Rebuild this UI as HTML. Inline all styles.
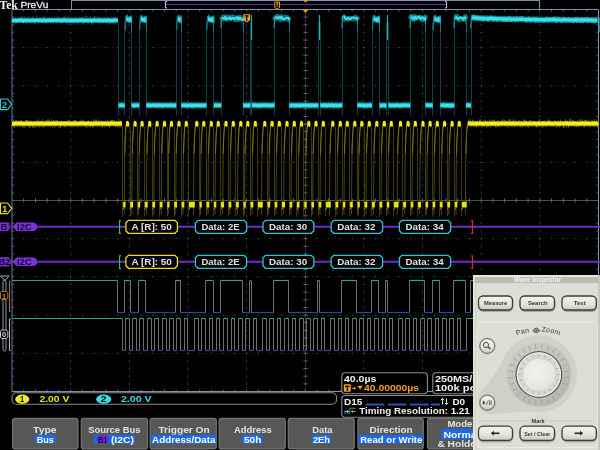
<!DOCTYPE html>
<html><head><meta charset="utf-8"><style>
html,body{margin:0;padding:0;background:#000;width:600px;height:450px;overflow:hidden}
svg{display:block;will-change:transform}
</style></head><body>
<svg width="600" height="450" viewBox="0 0 600 450">
<rect width="600" height="450" fill="#000"/>
<g><line x1="70.5" y1="9.5" x2="70.5" y2="391.5" stroke="#161616" stroke-width="1" stroke-dasharray="1 1.5"/><line x1="129.5" y1="9.5" x2="129.5" y2="391.5" stroke="#161616" stroke-width="1" stroke-dasharray="1 1.5"/><line x1="187.5" y1="9.5" x2="187.5" y2="391.5" stroke="#161616" stroke-width="1" stroke-dasharray="1 1.5"/><line x1="246.5" y1="9.5" x2="246.5" y2="391.5" stroke="#161616" stroke-width="1" stroke-dasharray="1 1.5"/><line x1="363.5" y1="9.5" x2="363.5" y2="391.5" stroke="#161616" stroke-width="1" stroke-dasharray="1 1.5"/><line x1="422.5" y1="9.5" x2="422.5" y2="391.5" stroke="#161616" stroke-width="1" stroke-dasharray="1 1.5"/><line x1="481.5" y1="9.5" x2="481.5" y2="391.5" stroke="#161616" stroke-width="1" stroke-dasharray="1 1.5"/><line x1="539.5" y1="9.5" x2="539.5" y2="391.5" stroke="#161616" stroke-width="1" stroke-dasharray="1 1.5"/><line x1="12" y1="47.5" x2="598.5" y2="47.5" stroke="#161616" stroke-width="1" stroke-dasharray="1 1.5"/><line x1="12" y1="85.5" x2="598.5" y2="85.5" stroke="#161616" stroke-width="1" stroke-dasharray="1 1.5"/><line x1="12" y1="124.5" x2="598.5" y2="124.5" stroke="#161616" stroke-width="1" stroke-dasharray="1 1.5"/><line x1="12" y1="162.5" x2="598.5" y2="162.5" stroke="#161616" stroke-width="1" stroke-dasharray="1 1.5"/><line x1="12" y1="238.5" x2="598.5" y2="238.5" stroke="#161616" stroke-width="1" stroke-dasharray="1 1.5"/><line x1="12" y1="276.5" x2="598.5" y2="276.5" stroke="#161616" stroke-width="1" stroke-dasharray="1 1.5"/><line x1="12" y1="315.5" x2="598.5" y2="315.5" stroke="#161616" stroke-width="1" stroke-dasharray="1 1.5"/><line x1="12" y1="353.5" x2="598.5" y2="353.5" stroke="#161616" stroke-width="1" stroke-dasharray="1 1.5"/><rect x="70.2" y="16.6" width="1" height="1" fill="#5e5e5e"/><rect x="70.2" y="24.3" width="1" height="1" fill="#5e5e5e"/><rect x="70.2" y="31.9" width="1" height="1" fill="#5e5e5e"/><rect x="70.2" y="39.6" width="1" height="1" fill="#5e5e5e"/><rect x="70.2" y="47.2" width="1" height="1" fill="#5e5e5e"/><rect x="70.2" y="54.8" width="1" height="1" fill="#5e5e5e"/><rect x="70.2" y="62.5" width="1" height="1" fill="#5e5e5e"/><rect x="70.2" y="70.1" width="1" height="1" fill="#5e5e5e"/><rect x="70.2" y="77.8" width="1" height="1" fill="#5e5e5e"/><rect x="70.2" y="85.4" width="1" height="1" fill="#5e5e5e"/><rect x="70.2" y="93.0" width="1" height="1" fill="#5e5e5e"/><rect x="70.2" y="100.7" width="1" height="1" fill="#5e5e5e"/><rect x="70.2" y="108.3" width="1" height="1" fill="#5e5e5e"/><rect x="70.2" y="116.0" width="1" height="1" fill="#5e5e5e"/><rect x="70.2" y="123.6" width="1" height="1" fill="#5e5e5e"/><rect x="70.2" y="131.2" width="1" height="1" fill="#5e5e5e"/><rect x="70.2" y="138.9" width="1" height="1" fill="#5e5e5e"/><rect x="70.2" y="146.5" width="1" height="1" fill="#5e5e5e"/><rect x="70.2" y="154.2" width="1" height="1" fill="#5e5e5e"/><rect x="70.2" y="161.8" width="1" height="1" fill="#5e5e5e"/><rect x="70.2" y="169.4" width="1" height="1" fill="#5e5e5e"/><rect x="70.2" y="177.1" width="1" height="1" fill="#5e5e5e"/><rect x="70.2" y="184.7" width="1" height="1" fill="#5e5e5e"/><rect x="70.2" y="192.4" width="1" height="1" fill="#5e5e5e"/><rect x="70.2" y="200.0" width="1" height="1" fill="#5e5e5e"/><rect x="70.2" y="207.6" width="1" height="1" fill="#5e5e5e"/><rect x="70.2" y="215.3" width="1" height="1" fill="#5e5e5e"/><rect x="70.2" y="222.9" width="1" height="1" fill="#5e5e5e"/><rect x="70.2" y="230.6" width="1" height="1" fill="#5e5e5e"/><rect x="70.2" y="238.2" width="1" height="1" fill="#5e5e5e"/><rect x="70.2" y="245.8" width="1" height="1" fill="#5e5e5e"/><rect x="70.2" y="253.5" width="1" height="1" fill="#5e5e5e"/><rect x="70.2" y="261.1" width="1" height="1" fill="#5e5e5e"/><rect x="70.2" y="268.8" width="1" height="1" fill="#5e5e5e"/><rect x="70.2" y="276.4" width="1" height="1" fill="#5e5e5e"/><rect x="70.2" y="284.0" width="1" height="1" fill="#5e5e5e"/><rect x="70.2" y="291.7" width="1" height="1" fill="#5e5e5e"/><rect x="70.2" y="299.3" width="1" height="1" fill="#5e5e5e"/><rect x="70.2" y="307.0" width="1" height="1" fill="#5e5e5e"/><rect x="70.2" y="314.6" width="1" height="1" fill="#5e5e5e"/><rect x="70.2" y="322.2" width="1" height="1" fill="#5e5e5e"/><rect x="70.2" y="329.9" width="1" height="1" fill="#5e5e5e"/><rect x="70.2" y="337.5" width="1" height="1" fill="#5e5e5e"/><rect x="70.2" y="345.2" width="1" height="1" fill="#5e5e5e"/><rect x="70.2" y="352.8" width="1" height="1" fill="#5e5e5e"/><rect x="70.2" y="360.4" width="1" height="1" fill="#5e5e5e"/><rect x="70.2" y="368.1" width="1" height="1" fill="#5e5e5e"/><rect x="70.2" y="375.7" width="1" height="1" fill="#5e5e5e"/><rect x="70.2" y="383.4" width="1" height="1" fill="#5e5e5e"/><rect x="128.8" y="16.6" width="1" height="1" fill="#5e5e5e"/><rect x="128.8" y="24.3" width="1" height="1" fill="#5e5e5e"/><rect x="128.8" y="31.9" width="1" height="1" fill="#5e5e5e"/><rect x="128.8" y="39.6" width="1" height="1" fill="#5e5e5e"/><rect x="128.8" y="47.2" width="1" height="1" fill="#5e5e5e"/><rect x="128.8" y="54.8" width="1" height="1" fill="#5e5e5e"/><rect x="128.8" y="62.5" width="1" height="1" fill="#5e5e5e"/><rect x="128.8" y="70.1" width="1" height="1" fill="#5e5e5e"/><rect x="128.8" y="77.8" width="1" height="1" fill="#5e5e5e"/><rect x="128.8" y="85.4" width="1" height="1" fill="#5e5e5e"/><rect x="128.8" y="93.0" width="1" height="1" fill="#5e5e5e"/><rect x="128.8" y="100.7" width="1" height="1" fill="#5e5e5e"/><rect x="128.8" y="108.3" width="1" height="1" fill="#5e5e5e"/><rect x="128.8" y="116.0" width="1" height="1" fill="#5e5e5e"/><rect x="128.8" y="123.6" width="1" height="1" fill="#5e5e5e"/><rect x="128.8" y="131.2" width="1" height="1" fill="#5e5e5e"/><rect x="128.8" y="138.9" width="1" height="1" fill="#5e5e5e"/><rect x="128.8" y="146.5" width="1" height="1" fill="#5e5e5e"/><rect x="128.8" y="154.2" width="1" height="1" fill="#5e5e5e"/><rect x="128.8" y="161.8" width="1" height="1" fill="#5e5e5e"/><rect x="128.8" y="169.4" width="1" height="1" fill="#5e5e5e"/><rect x="128.8" y="177.1" width="1" height="1" fill="#5e5e5e"/><rect x="128.8" y="184.7" width="1" height="1" fill="#5e5e5e"/><rect x="128.8" y="192.4" width="1" height="1" fill="#5e5e5e"/><rect x="128.8" y="200.0" width="1" height="1" fill="#5e5e5e"/><rect x="128.8" y="207.6" width="1" height="1" fill="#5e5e5e"/><rect x="128.8" y="215.3" width="1" height="1" fill="#5e5e5e"/><rect x="128.8" y="222.9" width="1" height="1" fill="#5e5e5e"/><rect x="128.8" y="230.6" width="1" height="1" fill="#5e5e5e"/><rect x="128.8" y="238.2" width="1" height="1" fill="#5e5e5e"/><rect x="128.8" y="245.8" width="1" height="1" fill="#5e5e5e"/><rect x="128.8" y="253.5" width="1" height="1" fill="#5e5e5e"/><rect x="128.8" y="261.1" width="1" height="1" fill="#5e5e5e"/><rect x="128.8" y="268.8" width="1" height="1" fill="#5e5e5e"/><rect x="128.8" y="276.4" width="1" height="1" fill="#5e5e5e"/><rect x="128.8" y="284.0" width="1" height="1" fill="#5e5e5e"/><rect x="128.8" y="291.7" width="1" height="1" fill="#5e5e5e"/><rect x="128.8" y="299.3" width="1" height="1" fill="#5e5e5e"/><rect x="128.8" y="307.0" width="1" height="1" fill="#5e5e5e"/><rect x="128.8" y="314.6" width="1" height="1" fill="#5e5e5e"/><rect x="128.8" y="322.2" width="1" height="1" fill="#5e5e5e"/><rect x="128.8" y="329.9" width="1" height="1" fill="#5e5e5e"/><rect x="128.8" y="337.5" width="1" height="1" fill="#5e5e5e"/><rect x="128.8" y="345.2" width="1" height="1" fill="#5e5e5e"/><rect x="128.8" y="352.8" width="1" height="1" fill="#5e5e5e"/><rect x="128.8" y="360.4" width="1" height="1" fill="#5e5e5e"/><rect x="128.8" y="368.1" width="1" height="1" fill="#5e5e5e"/><rect x="128.8" y="375.7" width="1" height="1" fill="#5e5e5e"/><rect x="128.8" y="383.4" width="1" height="1" fill="#5e5e5e"/><rect x="187.4" y="16.6" width="1" height="1" fill="#5e5e5e"/><rect x="187.4" y="24.3" width="1" height="1" fill="#5e5e5e"/><rect x="187.4" y="31.9" width="1" height="1" fill="#5e5e5e"/><rect x="187.4" y="39.6" width="1" height="1" fill="#5e5e5e"/><rect x="187.4" y="47.2" width="1" height="1" fill="#5e5e5e"/><rect x="187.4" y="54.8" width="1" height="1" fill="#5e5e5e"/><rect x="187.4" y="62.5" width="1" height="1" fill="#5e5e5e"/><rect x="187.4" y="70.1" width="1" height="1" fill="#5e5e5e"/><rect x="187.4" y="77.8" width="1" height="1" fill="#5e5e5e"/><rect x="187.4" y="85.4" width="1" height="1" fill="#5e5e5e"/><rect x="187.4" y="93.0" width="1" height="1" fill="#5e5e5e"/><rect x="187.4" y="100.7" width="1" height="1" fill="#5e5e5e"/><rect x="187.4" y="108.3" width="1" height="1" fill="#5e5e5e"/><rect x="187.4" y="116.0" width="1" height="1" fill="#5e5e5e"/><rect x="187.4" y="123.6" width="1" height="1" fill="#5e5e5e"/><rect x="187.4" y="131.2" width="1" height="1" fill="#5e5e5e"/><rect x="187.4" y="138.9" width="1" height="1" fill="#5e5e5e"/><rect x="187.4" y="146.5" width="1" height="1" fill="#5e5e5e"/><rect x="187.4" y="154.2" width="1" height="1" fill="#5e5e5e"/><rect x="187.4" y="161.8" width="1" height="1" fill="#5e5e5e"/><rect x="187.4" y="169.4" width="1" height="1" fill="#5e5e5e"/><rect x="187.4" y="177.1" width="1" height="1" fill="#5e5e5e"/><rect x="187.4" y="184.7" width="1" height="1" fill="#5e5e5e"/><rect x="187.4" y="192.4" width="1" height="1" fill="#5e5e5e"/><rect x="187.4" y="200.0" width="1" height="1" fill="#5e5e5e"/><rect x="187.4" y="207.6" width="1" height="1" fill="#5e5e5e"/><rect x="187.4" y="215.3" width="1" height="1" fill="#5e5e5e"/><rect x="187.4" y="222.9" width="1" height="1" fill="#5e5e5e"/><rect x="187.4" y="230.6" width="1" height="1" fill="#5e5e5e"/><rect x="187.4" y="238.2" width="1" height="1" fill="#5e5e5e"/><rect x="187.4" y="245.8" width="1" height="1" fill="#5e5e5e"/><rect x="187.4" y="253.5" width="1" height="1" fill="#5e5e5e"/><rect x="187.4" y="261.1" width="1" height="1" fill="#5e5e5e"/><rect x="187.4" y="268.8" width="1" height="1" fill="#5e5e5e"/><rect x="187.4" y="276.4" width="1" height="1" fill="#5e5e5e"/><rect x="187.4" y="284.0" width="1" height="1" fill="#5e5e5e"/><rect x="187.4" y="291.7" width="1" height="1" fill="#5e5e5e"/><rect x="187.4" y="299.3" width="1" height="1" fill="#5e5e5e"/><rect x="187.4" y="307.0" width="1" height="1" fill="#5e5e5e"/><rect x="187.4" y="314.6" width="1" height="1" fill="#5e5e5e"/><rect x="187.4" y="322.2" width="1" height="1" fill="#5e5e5e"/><rect x="187.4" y="329.9" width="1" height="1" fill="#5e5e5e"/><rect x="187.4" y="337.5" width="1" height="1" fill="#5e5e5e"/><rect x="187.4" y="345.2" width="1" height="1" fill="#5e5e5e"/><rect x="187.4" y="352.8" width="1" height="1" fill="#5e5e5e"/><rect x="187.4" y="360.4" width="1" height="1" fill="#5e5e5e"/><rect x="187.4" y="368.1" width="1" height="1" fill="#5e5e5e"/><rect x="187.4" y="375.7" width="1" height="1" fill="#5e5e5e"/><rect x="187.4" y="383.4" width="1" height="1" fill="#5e5e5e"/><rect x="246.1" y="16.6" width="1" height="1" fill="#5e5e5e"/><rect x="246.1" y="24.3" width="1" height="1" fill="#5e5e5e"/><rect x="246.1" y="31.9" width="1" height="1" fill="#5e5e5e"/><rect x="246.1" y="39.6" width="1" height="1" fill="#5e5e5e"/><rect x="246.1" y="47.2" width="1" height="1" fill="#5e5e5e"/><rect x="246.1" y="54.8" width="1" height="1" fill="#5e5e5e"/><rect x="246.1" y="62.5" width="1" height="1" fill="#5e5e5e"/><rect x="246.1" y="70.1" width="1" height="1" fill="#5e5e5e"/><rect x="246.1" y="77.8" width="1" height="1" fill="#5e5e5e"/><rect x="246.1" y="85.4" width="1" height="1" fill="#5e5e5e"/><rect x="246.1" y="93.0" width="1" height="1" fill="#5e5e5e"/><rect x="246.1" y="100.7" width="1" height="1" fill="#5e5e5e"/><rect x="246.1" y="108.3" width="1" height="1" fill="#5e5e5e"/><rect x="246.1" y="116.0" width="1" height="1" fill="#5e5e5e"/><rect x="246.1" y="123.6" width="1" height="1" fill="#5e5e5e"/><rect x="246.1" y="131.2" width="1" height="1" fill="#5e5e5e"/><rect x="246.1" y="138.9" width="1" height="1" fill="#5e5e5e"/><rect x="246.1" y="146.5" width="1" height="1" fill="#5e5e5e"/><rect x="246.1" y="154.2" width="1" height="1" fill="#5e5e5e"/><rect x="246.1" y="161.8" width="1" height="1" fill="#5e5e5e"/><rect x="246.1" y="169.4" width="1" height="1" fill="#5e5e5e"/><rect x="246.1" y="177.1" width="1" height="1" fill="#5e5e5e"/><rect x="246.1" y="184.7" width="1" height="1" fill="#5e5e5e"/><rect x="246.1" y="192.4" width="1" height="1" fill="#5e5e5e"/><rect x="246.1" y="200.0" width="1" height="1" fill="#5e5e5e"/><rect x="246.1" y="207.6" width="1" height="1" fill="#5e5e5e"/><rect x="246.1" y="215.3" width="1" height="1" fill="#5e5e5e"/><rect x="246.1" y="222.9" width="1" height="1" fill="#5e5e5e"/><rect x="246.1" y="230.6" width="1" height="1" fill="#5e5e5e"/><rect x="246.1" y="238.2" width="1" height="1" fill="#5e5e5e"/><rect x="246.1" y="245.8" width="1" height="1" fill="#5e5e5e"/><rect x="246.1" y="253.5" width="1" height="1" fill="#5e5e5e"/><rect x="246.1" y="261.1" width="1" height="1" fill="#5e5e5e"/><rect x="246.1" y="268.8" width="1" height="1" fill="#5e5e5e"/><rect x="246.1" y="276.4" width="1" height="1" fill="#5e5e5e"/><rect x="246.1" y="284.0" width="1" height="1" fill="#5e5e5e"/><rect x="246.1" y="291.7" width="1" height="1" fill="#5e5e5e"/><rect x="246.1" y="299.3" width="1" height="1" fill="#5e5e5e"/><rect x="246.1" y="307.0" width="1" height="1" fill="#5e5e5e"/><rect x="246.1" y="314.6" width="1" height="1" fill="#5e5e5e"/><rect x="246.1" y="322.2" width="1" height="1" fill="#5e5e5e"/><rect x="246.1" y="329.9" width="1" height="1" fill="#5e5e5e"/><rect x="246.1" y="337.5" width="1" height="1" fill="#5e5e5e"/><rect x="246.1" y="345.2" width="1" height="1" fill="#5e5e5e"/><rect x="246.1" y="352.8" width="1" height="1" fill="#5e5e5e"/><rect x="246.1" y="360.4" width="1" height="1" fill="#5e5e5e"/><rect x="246.1" y="368.1" width="1" height="1" fill="#5e5e5e"/><rect x="246.1" y="375.7" width="1" height="1" fill="#5e5e5e"/><rect x="246.1" y="383.4" width="1" height="1" fill="#5e5e5e"/><rect x="363.4" y="16.6" width="1" height="1" fill="#5e5e5e"/><rect x="363.4" y="24.3" width="1" height="1" fill="#5e5e5e"/><rect x="363.4" y="31.9" width="1" height="1" fill="#5e5e5e"/><rect x="363.4" y="39.6" width="1" height="1" fill="#5e5e5e"/><rect x="363.4" y="47.2" width="1" height="1" fill="#5e5e5e"/><rect x="363.4" y="54.8" width="1" height="1" fill="#5e5e5e"/><rect x="363.4" y="62.5" width="1" height="1" fill="#5e5e5e"/><rect x="363.4" y="70.1" width="1" height="1" fill="#5e5e5e"/><rect x="363.4" y="77.8" width="1" height="1" fill="#5e5e5e"/><rect x="363.4" y="85.4" width="1" height="1" fill="#5e5e5e"/><rect x="363.4" y="93.0" width="1" height="1" fill="#5e5e5e"/><rect x="363.4" y="100.7" width="1" height="1" fill="#5e5e5e"/><rect x="363.4" y="108.3" width="1" height="1" fill="#5e5e5e"/><rect x="363.4" y="116.0" width="1" height="1" fill="#5e5e5e"/><rect x="363.4" y="123.6" width="1" height="1" fill="#5e5e5e"/><rect x="363.4" y="131.2" width="1" height="1" fill="#5e5e5e"/><rect x="363.4" y="138.9" width="1" height="1" fill="#5e5e5e"/><rect x="363.4" y="146.5" width="1" height="1" fill="#5e5e5e"/><rect x="363.4" y="154.2" width="1" height="1" fill="#5e5e5e"/><rect x="363.4" y="161.8" width="1" height="1" fill="#5e5e5e"/><rect x="363.4" y="169.4" width="1" height="1" fill="#5e5e5e"/><rect x="363.4" y="177.1" width="1" height="1" fill="#5e5e5e"/><rect x="363.4" y="184.7" width="1" height="1" fill="#5e5e5e"/><rect x="363.4" y="192.4" width="1" height="1" fill="#5e5e5e"/><rect x="363.4" y="200.0" width="1" height="1" fill="#5e5e5e"/><rect x="363.4" y="207.6" width="1" height="1" fill="#5e5e5e"/><rect x="363.4" y="215.3" width="1" height="1" fill="#5e5e5e"/><rect x="363.4" y="222.9" width="1" height="1" fill="#5e5e5e"/><rect x="363.4" y="230.6" width="1" height="1" fill="#5e5e5e"/><rect x="363.4" y="238.2" width="1" height="1" fill="#5e5e5e"/><rect x="363.4" y="245.8" width="1" height="1" fill="#5e5e5e"/><rect x="363.4" y="253.5" width="1" height="1" fill="#5e5e5e"/><rect x="363.4" y="261.1" width="1" height="1" fill="#5e5e5e"/><rect x="363.4" y="268.8" width="1" height="1" fill="#5e5e5e"/><rect x="363.4" y="276.4" width="1" height="1" fill="#5e5e5e"/><rect x="363.4" y="284.0" width="1" height="1" fill="#5e5e5e"/><rect x="363.4" y="291.7" width="1" height="1" fill="#5e5e5e"/><rect x="363.4" y="299.3" width="1" height="1" fill="#5e5e5e"/><rect x="363.4" y="307.0" width="1" height="1" fill="#5e5e5e"/><rect x="363.4" y="314.6" width="1" height="1" fill="#5e5e5e"/><rect x="363.4" y="322.2" width="1" height="1" fill="#5e5e5e"/><rect x="363.4" y="329.9" width="1" height="1" fill="#5e5e5e"/><rect x="363.4" y="337.5" width="1" height="1" fill="#5e5e5e"/><rect x="363.4" y="345.2" width="1" height="1" fill="#5e5e5e"/><rect x="363.4" y="352.8" width="1" height="1" fill="#5e5e5e"/><rect x="363.4" y="360.4" width="1" height="1" fill="#5e5e5e"/><rect x="363.4" y="368.1" width="1" height="1" fill="#5e5e5e"/><rect x="363.4" y="375.7" width="1" height="1" fill="#5e5e5e"/><rect x="363.4" y="383.4" width="1" height="1" fill="#5e5e5e"/><rect x="422.1" y="16.6" width="1" height="1" fill="#5e5e5e"/><rect x="422.1" y="24.3" width="1" height="1" fill="#5e5e5e"/><rect x="422.1" y="31.9" width="1" height="1" fill="#5e5e5e"/><rect x="422.1" y="39.6" width="1" height="1" fill="#5e5e5e"/><rect x="422.1" y="47.2" width="1" height="1" fill="#5e5e5e"/><rect x="422.1" y="54.8" width="1" height="1" fill="#5e5e5e"/><rect x="422.1" y="62.5" width="1" height="1" fill="#5e5e5e"/><rect x="422.1" y="70.1" width="1" height="1" fill="#5e5e5e"/><rect x="422.1" y="77.8" width="1" height="1" fill="#5e5e5e"/><rect x="422.1" y="85.4" width="1" height="1" fill="#5e5e5e"/><rect x="422.1" y="93.0" width="1" height="1" fill="#5e5e5e"/><rect x="422.1" y="100.7" width="1" height="1" fill="#5e5e5e"/><rect x="422.1" y="108.3" width="1" height="1" fill="#5e5e5e"/><rect x="422.1" y="116.0" width="1" height="1" fill="#5e5e5e"/><rect x="422.1" y="123.6" width="1" height="1" fill="#5e5e5e"/><rect x="422.1" y="131.2" width="1" height="1" fill="#5e5e5e"/><rect x="422.1" y="138.9" width="1" height="1" fill="#5e5e5e"/><rect x="422.1" y="146.5" width="1" height="1" fill="#5e5e5e"/><rect x="422.1" y="154.2" width="1" height="1" fill="#5e5e5e"/><rect x="422.1" y="161.8" width="1" height="1" fill="#5e5e5e"/><rect x="422.1" y="169.4" width="1" height="1" fill="#5e5e5e"/><rect x="422.1" y="177.1" width="1" height="1" fill="#5e5e5e"/><rect x="422.1" y="184.7" width="1" height="1" fill="#5e5e5e"/><rect x="422.1" y="192.4" width="1" height="1" fill="#5e5e5e"/><rect x="422.1" y="200.0" width="1" height="1" fill="#5e5e5e"/><rect x="422.1" y="207.6" width="1" height="1" fill="#5e5e5e"/><rect x="422.1" y="215.3" width="1" height="1" fill="#5e5e5e"/><rect x="422.1" y="222.9" width="1" height="1" fill="#5e5e5e"/><rect x="422.1" y="230.6" width="1" height="1" fill="#5e5e5e"/><rect x="422.1" y="238.2" width="1" height="1" fill="#5e5e5e"/><rect x="422.1" y="245.8" width="1" height="1" fill="#5e5e5e"/><rect x="422.1" y="253.5" width="1" height="1" fill="#5e5e5e"/><rect x="422.1" y="261.1" width="1" height="1" fill="#5e5e5e"/><rect x="422.1" y="268.8" width="1" height="1" fill="#5e5e5e"/><rect x="422.1" y="276.4" width="1" height="1" fill="#5e5e5e"/><rect x="422.1" y="284.0" width="1" height="1" fill="#5e5e5e"/><rect x="422.1" y="291.7" width="1" height="1" fill="#5e5e5e"/><rect x="422.1" y="299.3" width="1" height="1" fill="#5e5e5e"/><rect x="422.1" y="307.0" width="1" height="1" fill="#5e5e5e"/><rect x="422.1" y="314.6" width="1" height="1" fill="#5e5e5e"/><rect x="422.1" y="322.2" width="1" height="1" fill="#5e5e5e"/><rect x="422.1" y="329.9" width="1" height="1" fill="#5e5e5e"/><rect x="422.1" y="337.5" width="1" height="1" fill="#5e5e5e"/><rect x="422.1" y="345.2" width="1" height="1" fill="#5e5e5e"/><rect x="422.1" y="352.8" width="1" height="1" fill="#5e5e5e"/><rect x="422.1" y="360.4" width="1" height="1" fill="#5e5e5e"/><rect x="422.1" y="368.1" width="1" height="1" fill="#5e5e5e"/><rect x="422.1" y="375.7" width="1" height="1" fill="#5e5e5e"/><rect x="422.1" y="383.4" width="1" height="1" fill="#5e5e5e"/><rect x="480.7" y="16.6" width="1" height="1" fill="#5e5e5e"/><rect x="480.7" y="24.3" width="1" height="1" fill="#5e5e5e"/><rect x="480.7" y="31.9" width="1" height="1" fill="#5e5e5e"/><rect x="480.7" y="39.6" width="1" height="1" fill="#5e5e5e"/><rect x="480.7" y="47.2" width="1" height="1" fill="#5e5e5e"/><rect x="480.7" y="54.8" width="1" height="1" fill="#5e5e5e"/><rect x="480.7" y="62.5" width="1" height="1" fill="#5e5e5e"/><rect x="480.7" y="70.1" width="1" height="1" fill="#5e5e5e"/><rect x="480.7" y="77.8" width="1" height="1" fill="#5e5e5e"/><rect x="480.7" y="85.4" width="1" height="1" fill="#5e5e5e"/><rect x="480.7" y="93.0" width="1" height="1" fill="#5e5e5e"/><rect x="480.7" y="100.7" width="1" height="1" fill="#5e5e5e"/><rect x="480.7" y="108.3" width="1" height="1" fill="#5e5e5e"/><rect x="480.7" y="116.0" width="1" height="1" fill="#5e5e5e"/><rect x="480.7" y="123.6" width="1" height="1" fill="#5e5e5e"/><rect x="480.7" y="131.2" width="1" height="1" fill="#5e5e5e"/><rect x="480.7" y="138.9" width="1" height="1" fill="#5e5e5e"/><rect x="480.7" y="146.5" width="1" height="1" fill="#5e5e5e"/><rect x="480.7" y="154.2" width="1" height="1" fill="#5e5e5e"/><rect x="480.7" y="161.8" width="1" height="1" fill="#5e5e5e"/><rect x="480.7" y="169.4" width="1" height="1" fill="#5e5e5e"/><rect x="480.7" y="177.1" width="1" height="1" fill="#5e5e5e"/><rect x="480.7" y="184.7" width="1" height="1" fill="#5e5e5e"/><rect x="480.7" y="192.4" width="1" height="1" fill="#5e5e5e"/><rect x="480.7" y="200.0" width="1" height="1" fill="#5e5e5e"/><rect x="480.7" y="207.6" width="1" height="1" fill="#5e5e5e"/><rect x="480.7" y="215.3" width="1" height="1" fill="#5e5e5e"/><rect x="480.7" y="222.9" width="1" height="1" fill="#5e5e5e"/><rect x="480.7" y="230.6" width="1" height="1" fill="#5e5e5e"/><rect x="480.7" y="238.2" width="1" height="1" fill="#5e5e5e"/><rect x="480.7" y="245.8" width="1" height="1" fill="#5e5e5e"/><rect x="480.7" y="253.5" width="1" height="1" fill="#5e5e5e"/><rect x="480.7" y="261.1" width="1" height="1" fill="#5e5e5e"/><rect x="480.7" y="268.8" width="1" height="1" fill="#5e5e5e"/><rect x="480.7" y="276.4" width="1" height="1" fill="#5e5e5e"/><rect x="480.7" y="284.0" width="1" height="1" fill="#5e5e5e"/><rect x="480.7" y="291.7" width="1" height="1" fill="#5e5e5e"/><rect x="480.7" y="299.3" width="1" height="1" fill="#5e5e5e"/><rect x="480.7" y="307.0" width="1" height="1" fill="#5e5e5e"/><rect x="480.7" y="314.6" width="1" height="1" fill="#5e5e5e"/><rect x="480.7" y="322.2" width="1" height="1" fill="#5e5e5e"/><rect x="480.7" y="329.9" width="1" height="1" fill="#5e5e5e"/><rect x="480.7" y="337.5" width="1" height="1" fill="#5e5e5e"/><rect x="480.7" y="345.2" width="1" height="1" fill="#5e5e5e"/><rect x="480.7" y="352.8" width="1" height="1" fill="#5e5e5e"/><rect x="480.7" y="360.4" width="1" height="1" fill="#5e5e5e"/><rect x="480.7" y="368.1" width="1" height="1" fill="#5e5e5e"/><rect x="480.7" y="375.7" width="1" height="1" fill="#5e5e5e"/><rect x="480.7" y="383.4" width="1" height="1" fill="#5e5e5e"/><rect x="539.4" y="16.6" width="1" height="1" fill="#5e5e5e"/><rect x="539.4" y="24.3" width="1" height="1" fill="#5e5e5e"/><rect x="539.4" y="31.9" width="1" height="1" fill="#5e5e5e"/><rect x="539.4" y="39.6" width="1" height="1" fill="#5e5e5e"/><rect x="539.4" y="47.2" width="1" height="1" fill="#5e5e5e"/><rect x="539.4" y="54.8" width="1" height="1" fill="#5e5e5e"/><rect x="539.4" y="62.5" width="1" height="1" fill="#5e5e5e"/><rect x="539.4" y="70.1" width="1" height="1" fill="#5e5e5e"/><rect x="539.4" y="77.8" width="1" height="1" fill="#5e5e5e"/><rect x="539.4" y="85.4" width="1" height="1" fill="#5e5e5e"/><rect x="539.4" y="93.0" width="1" height="1" fill="#5e5e5e"/><rect x="539.4" y="100.7" width="1" height="1" fill="#5e5e5e"/><rect x="539.4" y="108.3" width="1" height="1" fill="#5e5e5e"/><rect x="539.4" y="116.0" width="1" height="1" fill="#5e5e5e"/><rect x="539.4" y="123.6" width="1" height="1" fill="#5e5e5e"/><rect x="539.4" y="131.2" width="1" height="1" fill="#5e5e5e"/><rect x="539.4" y="138.9" width="1" height="1" fill="#5e5e5e"/><rect x="539.4" y="146.5" width="1" height="1" fill="#5e5e5e"/><rect x="539.4" y="154.2" width="1" height="1" fill="#5e5e5e"/><rect x="539.4" y="161.8" width="1" height="1" fill="#5e5e5e"/><rect x="539.4" y="169.4" width="1" height="1" fill="#5e5e5e"/><rect x="539.4" y="177.1" width="1" height="1" fill="#5e5e5e"/><rect x="539.4" y="184.7" width="1" height="1" fill="#5e5e5e"/><rect x="539.4" y="192.4" width="1" height="1" fill="#5e5e5e"/><rect x="539.4" y="200.0" width="1" height="1" fill="#5e5e5e"/><rect x="539.4" y="207.6" width="1" height="1" fill="#5e5e5e"/><rect x="539.4" y="215.3" width="1" height="1" fill="#5e5e5e"/><rect x="539.4" y="222.9" width="1" height="1" fill="#5e5e5e"/><rect x="539.4" y="230.6" width="1" height="1" fill="#5e5e5e"/><rect x="539.4" y="238.2" width="1" height="1" fill="#5e5e5e"/><rect x="539.4" y="245.8" width="1" height="1" fill="#5e5e5e"/><rect x="539.4" y="253.5" width="1" height="1" fill="#5e5e5e"/><rect x="539.4" y="261.1" width="1" height="1" fill="#5e5e5e"/><rect x="539.4" y="268.8" width="1" height="1" fill="#5e5e5e"/><rect x="539.4" y="276.4" width="1" height="1" fill="#5e5e5e"/><rect x="539.4" y="284.0" width="1" height="1" fill="#5e5e5e"/><rect x="539.4" y="291.7" width="1" height="1" fill="#5e5e5e"/><rect x="539.4" y="299.3" width="1" height="1" fill="#5e5e5e"/><rect x="539.4" y="307.0" width="1" height="1" fill="#5e5e5e"/><rect x="539.4" y="314.6" width="1" height="1" fill="#5e5e5e"/><rect x="539.4" y="322.2" width="1" height="1" fill="#5e5e5e"/><rect x="539.4" y="329.9" width="1" height="1" fill="#5e5e5e"/><rect x="539.4" y="337.5" width="1" height="1" fill="#5e5e5e"/><rect x="539.4" y="345.2" width="1" height="1" fill="#5e5e5e"/><rect x="539.4" y="352.8" width="1" height="1" fill="#5e5e5e"/><rect x="539.4" y="360.4" width="1" height="1" fill="#5e5e5e"/><rect x="539.4" y="368.1" width="1" height="1" fill="#5e5e5e"/><rect x="539.4" y="375.7" width="1" height="1" fill="#5e5e5e"/><rect x="539.4" y="383.4" width="1" height="1" fill="#5e5e5e"/><rect x="23.2" y="47.2" width="1" height="1" fill="#5e5e5e"/><rect x="35.0" y="47.2" width="1" height="1" fill="#5e5e5e"/><rect x="46.7" y="47.2" width="1" height="1" fill="#5e5e5e"/><rect x="58.4" y="47.2" width="1" height="1" fill="#5e5e5e"/><rect x="70.2" y="47.2" width="1" height="1" fill="#5e5e5e"/><rect x="81.9" y="47.2" width="1" height="1" fill="#5e5e5e"/><rect x="93.6" y="47.2" width="1" height="1" fill="#5e5e5e"/><rect x="105.3" y="47.2" width="1" height="1" fill="#5e5e5e"/><rect x="117.1" y="47.2" width="1" height="1" fill="#5e5e5e"/><rect x="128.8" y="47.2" width="1" height="1" fill="#5e5e5e"/><rect x="140.5" y="47.2" width="1" height="1" fill="#5e5e5e"/><rect x="152.3" y="47.2" width="1" height="1" fill="#5e5e5e"/><rect x="164.0" y="47.2" width="1" height="1" fill="#5e5e5e"/><rect x="175.7" y="47.2" width="1" height="1" fill="#5e5e5e"/><rect x="187.4" y="47.2" width="1" height="1" fill="#5e5e5e"/><rect x="199.2" y="47.2" width="1" height="1" fill="#5e5e5e"/><rect x="210.9" y="47.2" width="1" height="1" fill="#5e5e5e"/><rect x="222.6" y="47.2" width="1" height="1" fill="#5e5e5e"/><rect x="234.4" y="47.2" width="1" height="1" fill="#5e5e5e"/><rect x="246.1" y="47.2" width="1" height="1" fill="#5e5e5e"/><rect x="257.8" y="47.2" width="1" height="1" fill="#5e5e5e"/><rect x="269.6" y="47.2" width="1" height="1" fill="#5e5e5e"/><rect x="281.3" y="47.2" width="1" height="1" fill="#5e5e5e"/><rect x="293.0" y="47.2" width="1" height="1" fill="#5e5e5e"/><rect x="304.8" y="47.2" width="1" height="1" fill="#5e5e5e"/><rect x="316.5" y="47.2" width="1" height="1" fill="#5e5e5e"/><rect x="328.2" y="47.2" width="1" height="1" fill="#5e5e5e"/><rect x="339.9" y="47.2" width="1" height="1" fill="#5e5e5e"/><rect x="351.7" y="47.2" width="1" height="1" fill="#5e5e5e"/><rect x="363.4" y="47.2" width="1" height="1" fill="#5e5e5e"/><rect x="375.1" y="47.2" width="1" height="1" fill="#5e5e5e"/><rect x="386.9" y="47.2" width="1" height="1" fill="#5e5e5e"/><rect x="398.6" y="47.2" width="1" height="1" fill="#5e5e5e"/><rect x="410.3" y="47.2" width="1" height="1" fill="#5e5e5e"/><rect x="422.1" y="47.2" width="1" height="1" fill="#5e5e5e"/><rect x="433.8" y="47.2" width="1" height="1" fill="#5e5e5e"/><rect x="445.5" y="47.2" width="1" height="1" fill="#5e5e5e"/><rect x="457.2" y="47.2" width="1" height="1" fill="#5e5e5e"/><rect x="469.0" y="47.2" width="1" height="1" fill="#5e5e5e"/><rect x="480.7" y="47.2" width="1" height="1" fill="#5e5e5e"/><rect x="492.4" y="47.2" width="1" height="1" fill="#5e5e5e"/><rect x="504.2" y="47.2" width="1" height="1" fill="#5e5e5e"/><rect x="515.9" y="47.2" width="1" height="1" fill="#5e5e5e"/><rect x="527.6" y="47.2" width="1" height="1" fill="#5e5e5e"/><rect x="539.4" y="47.2" width="1" height="1" fill="#5e5e5e"/><rect x="551.1" y="47.2" width="1" height="1" fill="#5e5e5e"/><rect x="562.8" y="47.2" width="1" height="1" fill="#5e5e5e"/><rect x="574.5" y="47.2" width="1" height="1" fill="#5e5e5e"/><rect x="586.3" y="47.2" width="1" height="1" fill="#5e5e5e"/><rect x="23.2" y="85.4" width="1" height="1" fill="#5e5e5e"/><rect x="35.0" y="85.4" width="1" height="1" fill="#5e5e5e"/><rect x="46.7" y="85.4" width="1" height="1" fill="#5e5e5e"/><rect x="58.4" y="85.4" width="1" height="1" fill="#5e5e5e"/><rect x="70.2" y="85.4" width="1" height="1" fill="#5e5e5e"/><rect x="81.9" y="85.4" width="1" height="1" fill="#5e5e5e"/><rect x="93.6" y="85.4" width="1" height="1" fill="#5e5e5e"/><rect x="105.3" y="85.4" width="1" height="1" fill="#5e5e5e"/><rect x="117.1" y="85.4" width="1" height="1" fill="#5e5e5e"/><rect x="128.8" y="85.4" width="1" height="1" fill="#5e5e5e"/><rect x="140.5" y="85.4" width="1" height="1" fill="#5e5e5e"/><rect x="152.3" y="85.4" width="1" height="1" fill="#5e5e5e"/><rect x="164.0" y="85.4" width="1" height="1" fill="#5e5e5e"/><rect x="175.7" y="85.4" width="1" height="1" fill="#5e5e5e"/><rect x="187.4" y="85.4" width="1" height="1" fill="#5e5e5e"/><rect x="199.2" y="85.4" width="1" height="1" fill="#5e5e5e"/><rect x="210.9" y="85.4" width="1" height="1" fill="#5e5e5e"/><rect x="222.6" y="85.4" width="1" height="1" fill="#5e5e5e"/><rect x="234.4" y="85.4" width="1" height="1" fill="#5e5e5e"/><rect x="246.1" y="85.4" width="1" height="1" fill="#5e5e5e"/><rect x="257.8" y="85.4" width="1" height="1" fill="#5e5e5e"/><rect x="269.6" y="85.4" width="1" height="1" fill="#5e5e5e"/><rect x="281.3" y="85.4" width="1" height="1" fill="#5e5e5e"/><rect x="293.0" y="85.4" width="1" height="1" fill="#5e5e5e"/><rect x="304.8" y="85.4" width="1" height="1" fill="#5e5e5e"/><rect x="316.5" y="85.4" width="1" height="1" fill="#5e5e5e"/><rect x="328.2" y="85.4" width="1" height="1" fill="#5e5e5e"/><rect x="339.9" y="85.4" width="1" height="1" fill="#5e5e5e"/><rect x="351.7" y="85.4" width="1" height="1" fill="#5e5e5e"/><rect x="363.4" y="85.4" width="1" height="1" fill="#5e5e5e"/><rect x="375.1" y="85.4" width="1" height="1" fill="#5e5e5e"/><rect x="386.9" y="85.4" width="1" height="1" fill="#5e5e5e"/><rect x="398.6" y="85.4" width="1" height="1" fill="#5e5e5e"/><rect x="410.3" y="85.4" width="1" height="1" fill="#5e5e5e"/><rect x="422.1" y="85.4" width="1" height="1" fill="#5e5e5e"/><rect x="433.8" y="85.4" width="1" height="1" fill="#5e5e5e"/><rect x="445.5" y="85.4" width="1" height="1" fill="#5e5e5e"/><rect x="457.2" y="85.4" width="1" height="1" fill="#5e5e5e"/><rect x="469.0" y="85.4" width="1" height="1" fill="#5e5e5e"/><rect x="480.7" y="85.4" width="1" height="1" fill="#5e5e5e"/><rect x="492.4" y="85.4" width="1" height="1" fill="#5e5e5e"/><rect x="504.2" y="85.4" width="1" height="1" fill="#5e5e5e"/><rect x="515.9" y="85.4" width="1" height="1" fill="#5e5e5e"/><rect x="527.6" y="85.4" width="1" height="1" fill="#5e5e5e"/><rect x="539.4" y="85.4" width="1" height="1" fill="#5e5e5e"/><rect x="551.1" y="85.4" width="1" height="1" fill="#5e5e5e"/><rect x="562.8" y="85.4" width="1" height="1" fill="#5e5e5e"/><rect x="574.5" y="85.4" width="1" height="1" fill="#5e5e5e"/><rect x="586.3" y="85.4" width="1" height="1" fill="#5e5e5e"/><rect x="23.2" y="123.6" width="1" height="1" fill="#5e5e5e"/><rect x="35.0" y="123.6" width="1" height="1" fill="#5e5e5e"/><rect x="46.7" y="123.6" width="1" height="1" fill="#5e5e5e"/><rect x="58.4" y="123.6" width="1" height="1" fill="#5e5e5e"/><rect x="70.2" y="123.6" width="1" height="1" fill="#5e5e5e"/><rect x="81.9" y="123.6" width="1" height="1" fill="#5e5e5e"/><rect x="93.6" y="123.6" width="1" height="1" fill="#5e5e5e"/><rect x="105.3" y="123.6" width="1" height="1" fill="#5e5e5e"/><rect x="117.1" y="123.6" width="1" height="1" fill="#5e5e5e"/><rect x="128.8" y="123.6" width="1" height="1" fill="#5e5e5e"/><rect x="140.5" y="123.6" width="1" height="1" fill="#5e5e5e"/><rect x="152.3" y="123.6" width="1" height="1" fill="#5e5e5e"/><rect x="164.0" y="123.6" width="1" height="1" fill="#5e5e5e"/><rect x="175.7" y="123.6" width="1" height="1" fill="#5e5e5e"/><rect x="187.4" y="123.6" width="1" height="1" fill="#5e5e5e"/><rect x="199.2" y="123.6" width="1" height="1" fill="#5e5e5e"/><rect x="210.9" y="123.6" width="1" height="1" fill="#5e5e5e"/><rect x="222.6" y="123.6" width="1" height="1" fill="#5e5e5e"/><rect x="234.4" y="123.6" width="1" height="1" fill="#5e5e5e"/><rect x="246.1" y="123.6" width="1" height="1" fill="#5e5e5e"/><rect x="257.8" y="123.6" width="1" height="1" fill="#5e5e5e"/><rect x="269.6" y="123.6" width="1" height="1" fill="#5e5e5e"/><rect x="281.3" y="123.6" width="1" height="1" fill="#5e5e5e"/><rect x="293.0" y="123.6" width="1" height="1" fill="#5e5e5e"/><rect x="304.8" y="123.6" width="1" height="1" fill="#5e5e5e"/><rect x="316.5" y="123.6" width="1" height="1" fill="#5e5e5e"/><rect x="328.2" y="123.6" width="1" height="1" fill="#5e5e5e"/><rect x="339.9" y="123.6" width="1" height="1" fill="#5e5e5e"/><rect x="351.7" y="123.6" width="1" height="1" fill="#5e5e5e"/><rect x="363.4" y="123.6" width="1" height="1" fill="#5e5e5e"/><rect x="375.1" y="123.6" width="1" height="1" fill="#5e5e5e"/><rect x="386.9" y="123.6" width="1" height="1" fill="#5e5e5e"/><rect x="398.6" y="123.6" width="1" height="1" fill="#5e5e5e"/><rect x="410.3" y="123.6" width="1" height="1" fill="#5e5e5e"/><rect x="422.1" y="123.6" width="1" height="1" fill="#5e5e5e"/><rect x="433.8" y="123.6" width="1" height="1" fill="#5e5e5e"/><rect x="445.5" y="123.6" width="1" height="1" fill="#5e5e5e"/><rect x="457.2" y="123.6" width="1" height="1" fill="#5e5e5e"/><rect x="469.0" y="123.6" width="1" height="1" fill="#5e5e5e"/><rect x="480.7" y="123.6" width="1" height="1" fill="#5e5e5e"/><rect x="492.4" y="123.6" width="1" height="1" fill="#5e5e5e"/><rect x="504.2" y="123.6" width="1" height="1" fill="#5e5e5e"/><rect x="515.9" y="123.6" width="1" height="1" fill="#5e5e5e"/><rect x="527.6" y="123.6" width="1" height="1" fill="#5e5e5e"/><rect x="539.4" y="123.6" width="1" height="1" fill="#5e5e5e"/><rect x="551.1" y="123.6" width="1" height="1" fill="#5e5e5e"/><rect x="562.8" y="123.6" width="1" height="1" fill="#5e5e5e"/><rect x="574.5" y="123.6" width="1" height="1" fill="#5e5e5e"/><rect x="586.3" y="123.6" width="1" height="1" fill="#5e5e5e"/><rect x="23.2" y="161.8" width="1" height="1" fill="#5e5e5e"/><rect x="35.0" y="161.8" width="1" height="1" fill="#5e5e5e"/><rect x="46.7" y="161.8" width="1" height="1" fill="#5e5e5e"/><rect x="58.4" y="161.8" width="1" height="1" fill="#5e5e5e"/><rect x="70.2" y="161.8" width="1" height="1" fill="#5e5e5e"/><rect x="81.9" y="161.8" width="1" height="1" fill="#5e5e5e"/><rect x="93.6" y="161.8" width="1" height="1" fill="#5e5e5e"/><rect x="105.3" y="161.8" width="1" height="1" fill="#5e5e5e"/><rect x="117.1" y="161.8" width="1" height="1" fill="#5e5e5e"/><rect x="128.8" y="161.8" width="1" height="1" fill="#5e5e5e"/><rect x="140.5" y="161.8" width="1" height="1" fill="#5e5e5e"/><rect x="152.3" y="161.8" width="1" height="1" fill="#5e5e5e"/><rect x="164.0" y="161.8" width="1" height="1" fill="#5e5e5e"/><rect x="175.7" y="161.8" width="1" height="1" fill="#5e5e5e"/><rect x="187.4" y="161.8" width="1" height="1" fill="#5e5e5e"/><rect x="199.2" y="161.8" width="1" height="1" fill="#5e5e5e"/><rect x="210.9" y="161.8" width="1" height="1" fill="#5e5e5e"/><rect x="222.6" y="161.8" width="1" height="1" fill="#5e5e5e"/><rect x="234.4" y="161.8" width="1" height="1" fill="#5e5e5e"/><rect x="246.1" y="161.8" width="1" height="1" fill="#5e5e5e"/><rect x="257.8" y="161.8" width="1" height="1" fill="#5e5e5e"/><rect x="269.6" y="161.8" width="1" height="1" fill="#5e5e5e"/><rect x="281.3" y="161.8" width="1" height="1" fill="#5e5e5e"/><rect x="293.0" y="161.8" width="1" height="1" fill="#5e5e5e"/><rect x="304.8" y="161.8" width="1" height="1" fill="#5e5e5e"/><rect x="316.5" y="161.8" width="1" height="1" fill="#5e5e5e"/><rect x="328.2" y="161.8" width="1" height="1" fill="#5e5e5e"/><rect x="339.9" y="161.8" width="1" height="1" fill="#5e5e5e"/><rect x="351.7" y="161.8" width="1" height="1" fill="#5e5e5e"/><rect x="363.4" y="161.8" width="1" height="1" fill="#5e5e5e"/><rect x="375.1" y="161.8" width="1" height="1" fill="#5e5e5e"/><rect x="386.9" y="161.8" width="1" height="1" fill="#5e5e5e"/><rect x="398.6" y="161.8" width="1" height="1" fill="#5e5e5e"/><rect x="410.3" y="161.8" width="1" height="1" fill="#5e5e5e"/><rect x="422.1" y="161.8" width="1" height="1" fill="#5e5e5e"/><rect x="433.8" y="161.8" width="1" height="1" fill="#5e5e5e"/><rect x="445.5" y="161.8" width="1" height="1" fill="#5e5e5e"/><rect x="457.2" y="161.8" width="1" height="1" fill="#5e5e5e"/><rect x="469.0" y="161.8" width="1" height="1" fill="#5e5e5e"/><rect x="480.7" y="161.8" width="1" height="1" fill="#5e5e5e"/><rect x="492.4" y="161.8" width="1" height="1" fill="#5e5e5e"/><rect x="504.2" y="161.8" width="1" height="1" fill="#5e5e5e"/><rect x="515.9" y="161.8" width="1" height="1" fill="#5e5e5e"/><rect x="527.6" y="161.8" width="1" height="1" fill="#5e5e5e"/><rect x="539.4" y="161.8" width="1" height="1" fill="#5e5e5e"/><rect x="551.1" y="161.8" width="1" height="1" fill="#5e5e5e"/><rect x="562.8" y="161.8" width="1" height="1" fill="#5e5e5e"/><rect x="574.5" y="161.8" width="1" height="1" fill="#5e5e5e"/><rect x="586.3" y="161.8" width="1" height="1" fill="#5e5e5e"/><rect x="23.2" y="238.2" width="1" height="1" fill="#5e5e5e"/><rect x="35.0" y="238.2" width="1" height="1" fill="#5e5e5e"/><rect x="46.7" y="238.2" width="1" height="1" fill="#5e5e5e"/><rect x="58.4" y="238.2" width="1" height="1" fill="#5e5e5e"/><rect x="70.2" y="238.2" width="1" height="1" fill="#5e5e5e"/><rect x="81.9" y="238.2" width="1" height="1" fill="#5e5e5e"/><rect x="93.6" y="238.2" width="1" height="1" fill="#5e5e5e"/><rect x="105.3" y="238.2" width="1" height="1" fill="#5e5e5e"/><rect x="117.1" y="238.2" width="1" height="1" fill="#5e5e5e"/><rect x="128.8" y="238.2" width="1" height="1" fill="#5e5e5e"/><rect x="140.5" y="238.2" width="1" height="1" fill="#5e5e5e"/><rect x="152.3" y="238.2" width="1" height="1" fill="#5e5e5e"/><rect x="164.0" y="238.2" width="1" height="1" fill="#5e5e5e"/><rect x="175.7" y="238.2" width="1" height="1" fill="#5e5e5e"/><rect x="187.4" y="238.2" width="1" height="1" fill="#5e5e5e"/><rect x="199.2" y="238.2" width="1" height="1" fill="#5e5e5e"/><rect x="210.9" y="238.2" width="1" height="1" fill="#5e5e5e"/><rect x="222.6" y="238.2" width="1" height="1" fill="#5e5e5e"/><rect x="234.4" y="238.2" width="1" height="1" fill="#5e5e5e"/><rect x="246.1" y="238.2" width="1" height="1" fill="#5e5e5e"/><rect x="257.8" y="238.2" width="1" height="1" fill="#5e5e5e"/><rect x="269.6" y="238.2" width="1" height="1" fill="#5e5e5e"/><rect x="281.3" y="238.2" width="1" height="1" fill="#5e5e5e"/><rect x="293.0" y="238.2" width="1" height="1" fill="#5e5e5e"/><rect x="304.8" y="238.2" width="1" height="1" fill="#5e5e5e"/><rect x="316.5" y="238.2" width="1" height="1" fill="#5e5e5e"/><rect x="328.2" y="238.2" width="1" height="1" fill="#5e5e5e"/><rect x="339.9" y="238.2" width="1" height="1" fill="#5e5e5e"/><rect x="351.7" y="238.2" width="1" height="1" fill="#5e5e5e"/><rect x="363.4" y="238.2" width="1" height="1" fill="#5e5e5e"/><rect x="375.1" y="238.2" width="1" height="1" fill="#5e5e5e"/><rect x="386.9" y="238.2" width="1" height="1" fill="#5e5e5e"/><rect x="398.6" y="238.2" width="1" height="1" fill="#5e5e5e"/><rect x="410.3" y="238.2" width="1" height="1" fill="#5e5e5e"/><rect x="422.1" y="238.2" width="1" height="1" fill="#5e5e5e"/><rect x="433.8" y="238.2" width="1" height="1" fill="#5e5e5e"/><rect x="445.5" y="238.2" width="1" height="1" fill="#5e5e5e"/><rect x="457.2" y="238.2" width="1" height="1" fill="#5e5e5e"/><rect x="469.0" y="238.2" width="1" height="1" fill="#5e5e5e"/><rect x="480.7" y="238.2" width="1" height="1" fill="#5e5e5e"/><rect x="492.4" y="238.2" width="1" height="1" fill="#5e5e5e"/><rect x="504.2" y="238.2" width="1" height="1" fill="#5e5e5e"/><rect x="515.9" y="238.2" width="1" height="1" fill="#5e5e5e"/><rect x="527.6" y="238.2" width="1" height="1" fill="#5e5e5e"/><rect x="539.4" y="238.2" width="1" height="1" fill="#5e5e5e"/><rect x="551.1" y="238.2" width="1" height="1" fill="#5e5e5e"/><rect x="562.8" y="238.2" width="1" height="1" fill="#5e5e5e"/><rect x="574.5" y="238.2" width="1" height="1" fill="#5e5e5e"/><rect x="586.3" y="238.2" width="1" height="1" fill="#5e5e5e"/><rect x="23.2" y="276.4" width="1" height="1" fill="#5e5e5e"/><rect x="35.0" y="276.4" width="1" height="1" fill="#5e5e5e"/><rect x="46.7" y="276.4" width="1" height="1" fill="#5e5e5e"/><rect x="58.4" y="276.4" width="1" height="1" fill="#5e5e5e"/><rect x="70.2" y="276.4" width="1" height="1" fill="#5e5e5e"/><rect x="81.9" y="276.4" width="1" height="1" fill="#5e5e5e"/><rect x="93.6" y="276.4" width="1" height="1" fill="#5e5e5e"/><rect x="105.3" y="276.4" width="1" height="1" fill="#5e5e5e"/><rect x="117.1" y="276.4" width="1" height="1" fill="#5e5e5e"/><rect x="128.8" y="276.4" width="1" height="1" fill="#5e5e5e"/><rect x="140.5" y="276.4" width="1" height="1" fill="#5e5e5e"/><rect x="152.3" y="276.4" width="1" height="1" fill="#5e5e5e"/><rect x="164.0" y="276.4" width="1" height="1" fill="#5e5e5e"/><rect x="175.7" y="276.4" width="1" height="1" fill="#5e5e5e"/><rect x="187.4" y="276.4" width="1" height="1" fill="#5e5e5e"/><rect x="199.2" y="276.4" width="1" height="1" fill="#5e5e5e"/><rect x="210.9" y="276.4" width="1" height="1" fill="#5e5e5e"/><rect x="222.6" y="276.4" width="1" height="1" fill="#5e5e5e"/><rect x="234.4" y="276.4" width="1" height="1" fill="#5e5e5e"/><rect x="246.1" y="276.4" width="1" height="1" fill="#5e5e5e"/><rect x="257.8" y="276.4" width="1" height="1" fill="#5e5e5e"/><rect x="269.6" y="276.4" width="1" height="1" fill="#5e5e5e"/><rect x="281.3" y="276.4" width="1" height="1" fill="#5e5e5e"/><rect x="293.0" y="276.4" width="1" height="1" fill="#5e5e5e"/><rect x="304.8" y="276.4" width="1" height="1" fill="#5e5e5e"/><rect x="316.5" y="276.4" width="1" height="1" fill="#5e5e5e"/><rect x="328.2" y="276.4" width="1" height="1" fill="#5e5e5e"/><rect x="339.9" y="276.4" width="1" height="1" fill="#5e5e5e"/><rect x="351.7" y="276.4" width="1" height="1" fill="#5e5e5e"/><rect x="363.4" y="276.4" width="1" height="1" fill="#5e5e5e"/><rect x="375.1" y="276.4" width="1" height="1" fill="#5e5e5e"/><rect x="386.9" y="276.4" width="1" height="1" fill="#5e5e5e"/><rect x="398.6" y="276.4" width="1" height="1" fill="#5e5e5e"/><rect x="410.3" y="276.4" width="1" height="1" fill="#5e5e5e"/><rect x="422.1" y="276.4" width="1" height="1" fill="#5e5e5e"/><rect x="433.8" y="276.4" width="1" height="1" fill="#5e5e5e"/><rect x="445.5" y="276.4" width="1" height="1" fill="#5e5e5e"/><rect x="457.2" y="276.4" width="1" height="1" fill="#5e5e5e"/><rect x="469.0" y="276.4" width="1" height="1" fill="#5e5e5e"/><rect x="480.7" y="276.4" width="1" height="1" fill="#5e5e5e"/><rect x="492.4" y="276.4" width="1" height="1" fill="#5e5e5e"/><rect x="504.2" y="276.4" width="1" height="1" fill="#5e5e5e"/><rect x="515.9" y="276.4" width="1" height="1" fill="#5e5e5e"/><rect x="527.6" y="276.4" width="1" height="1" fill="#5e5e5e"/><rect x="539.4" y="276.4" width="1" height="1" fill="#5e5e5e"/><rect x="551.1" y="276.4" width="1" height="1" fill="#5e5e5e"/><rect x="562.8" y="276.4" width="1" height="1" fill="#5e5e5e"/><rect x="574.5" y="276.4" width="1" height="1" fill="#5e5e5e"/><rect x="586.3" y="276.4" width="1" height="1" fill="#5e5e5e"/><rect x="23.2" y="314.6" width="1" height="1" fill="#5e5e5e"/><rect x="35.0" y="314.6" width="1" height="1" fill="#5e5e5e"/><rect x="46.7" y="314.6" width="1" height="1" fill="#5e5e5e"/><rect x="58.4" y="314.6" width="1" height="1" fill="#5e5e5e"/><rect x="70.2" y="314.6" width="1" height="1" fill="#5e5e5e"/><rect x="81.9" y="314.6" width="1" height="1" fill="#5e5e5e"/><rect x="93.6" y="314.6" width="1" height="1" fill="#5e5e5e"/><rect x="105.3" y="314.6" width="1" height="1" fill="#5e5e5e"/><rect x="117.1" y="314.6" width="1" height="1" fill="#5e5e5e"/><rect x="128.8" y="314.6" width="1" height="1" fill="#5e5e5e"/><rect x="140.5" y="314.6" width="1" height="1" fill="#5e5e5e"/><rect x="152.3" y="314.6" width="1" height="1" fill="#5e5e5e"/><rect x="164.0" y="314.6" width="1" height="1" fill="#5e5e5e"/><rect x="175.7" y="314.6" width="1" height="1" fill="#5e5e5e"/><rect x="187.4" y="314.6" width="1" height="1" fill="#5e5e5e"/><rect x="199.2" y="314.6" width="1" height="1" fill="#5e5e5e"/><rect x="210.9" y="314.6" width="1" height="1" fill="#5e5e5e"/><rect x="222.6" y="314.6" width="1" height="1" fill="#5e5e5e"/><rect x="234.4" y="314.6" width="1" height="1" fill="#5e5e5e"/><rect x="246.1" y="314.6" width="1" height="1" fill="#5e5e5e"/><rect x="257.8" y="314.6" width="1" height="1" fill="#5e5e5e"/><rect x="269.6" y="314.6" width="1" height="1" fill="#5e5e5e"/><rect x="281.3" y="314.6" width="1" height="1" fill="#5e5e5e"/><rect x="293.0" y="314.6" width="1" height="1" fill="#5e5e5e"/><rect x="304.8" y="314.6" width="1" height="1" fill="#5e5e5e"/><rect x="316.5" y="314.6" width="1" height="1" fill="#5e5e5e"/><rect x="328.2" y="314.6" width="1" height="1" fill="#5e5e5e"/><rect x="339.9" y="314.6" width="1" height="1" fill="#5e5e5e"/><rect x="351.7" y="314.6" width="1" height="1" fill="#5e5e5e"/><rect x="363.4" y="314.6" width="1" height="1" fill="#5e5e5e"/><rect x="375.1" y="314.6" width="1" height="1" fill="#5e5e5e"/><rect x="386.9" y="314.6" width="1" height="1" fill="#5e5e5e"/><rect x="398.6" y="314.6" width="1" height="1" fill="#5e5e5e"/><rect x="410.3" y="314.6" width="1" height="1" fill="#5e5e5e"/><rect x="422.1" y="314.6" width="1" height="1" fill="#5e5e5e"/><rect x="433.8" y="314.6" width="1" height="1" fill="#5e5e5e"/><rect x="445.5" y="314.6" width="1" height="1" fill="#5e5e5e"/><rect x="457.2" y="314.6" width="1" height="1" fill="#5e5e5e"/><rect x="469.0" y="314.6" width="1" height="1" fill="#5e5e5e"/><rect x="480.7" y="314.6" width="1" height="1" fill="#5e5e5e"/><rect x="492.4" y="314.6" width="1" height="1" fill="#5e5e5e"/><rect x="504.2" y="314.6" width="1" height="1" fill="#5e5e5e"/><rect x="515.9" y="314.6" width="1" height="1" fill="#5e5e5e"/><rect x="527.6" y="314.6" width="1" height="1" fill="#5e5e5e"/><rect x="539.4" y="314.6" width="1" height="1" fill="#5e5e5e"/><rect x="551.1" y="314.6" width="1" height="1" fill="#5e5e5e"/><rect x="562.8" y="314.6" width="1" height="1" fill="#5e5e5e"/><rect x="574.5" y="314.6" width="1" height="1" fill="#5e5e5e"/><rect x="586.3" y="314.6" width="1" height="1" fill="#5e5e5e"/><rect x="23.2" y="352.8" width="1" height="1" fill="#5e5e5e"/><rect x="35.0" y="352.8" width="1" height="1" fill="#5e5e5e"/><rect x="46.7" y="352.8" width="1" height="1" fill="#5e5e5e"/><rect x="58.4" y="352.8" width="1" height="1" fill="#5e5e5e"/><rect x="70.2" y="352.8" width="1" height="1" fill="#5e5e5e"/><rect x="81.9" y="352.8" width="1" height="1" fill="#5e5e5e"/><rect x="93.6" y="352.8" width="1" height="1" fill="#5e5e5e"/><rect x="105.3" y="352.8" width="1" height="1" fill="#5e5e5e"/><rect x="117.1" y="352.8" width="1" height="1" fill="#5e5e5e"/><rect x="128.8" y="352.8" width="1" height="1" fill="#5e5e5e"/><rect x="140.5" y="352.8" width="1" height="1" fill="#5e5e5e"/><rect x="152.3" y="352.8" width="1" height="1" fill="#5e5e5e"/><rect x="164.0" y="352.8" width="1" height="1" fill="#5e5e5e"/><rect x="175.7" y="352.8" width="1" height="1" fill="#5e5e5e"/><rect x="187.4" y="352.8" width="1" height="1" fill="#5e5e5e"/><rect x="199.2" y="352.8" width="1" height="1" fill="#5e5e5e"/><rect x="210.9" y="352.8" width="1" height="1" fill="#5e5e5e"/><rect x="222.6" y="352.8" width="1" height="1" fill="#5e5e5e"/><rect x="234.4" y="352.8" width="1" height="1" fill="#5e5e5e"/><rect x="246.1" y="352.8" width="1" height="1" fill="#5e5e5e"/><rect x="257.8" y="352.8" width="1" height="1" fill="#5e5e5e"/><rect x="269.6" y="352.8" width="1" height="1" fill="#5e5e5e"/><rect x="281.3" y="352.8" width="1" height="1" fill="#5e5e5e"/><rect x="293.0" y="352.8" width="1" height="1" fill="#5e5e5e"/><rect x="304.8" y="352.8" width="1" height="1" fill="#5e5e5e"/><rect x="316.5" y="352.8" width="1" height="1" fill="#5e5e5e"/><rect x="328.2" y="352.8" width="1" height="1" fill="#5e5e5e"/><rect x="339.9" y="352.8" width="1" height="1" fill="#5e5e5e"/><rect x="351.7" y="352.8" width="1" height="1" fill="#5e5e5e"/><rect x="363.4" y="352.8" width="1" height="1" fill="#5e5e5e"/><rect x="375.1" y="352.8" width="1" height="1" fill="#5e5e5e"/><rect x="386.9" y="352.8" width="1" height="1" fill="#5e5e5e"/><rect x="398.6" y="352.8" width="1" height="1" fill="#5e5e5e"/><rect x="410.3" y="352.8" width="1" height="1" fill="#5e5e5e"/><rect x="422.1" y="352.8" width="1" height="1" fill="#5e5e5e"/><rect x="433.8" y="352.8" width="1" height="1" fill="#5e5e5e"/><rect x="445.5" y="352.8" width="1" height="1" fill="#5e5e5e"/><rect x="457.2" y="352.8" width="1" height="1" fill="#5e5e5e"/><rect x="469.0" y="352.8" width="1" height="1" fill="#5e5e5e"/><rect x="480.7" y="352.8" width="1" height="1" fill="#5e5e5e"/><rect x="492.4" y="352.8" width="1" height="1" fill="#5e5e5e"/><rect x="504.2" y="352.8" width="1" height="1" fill="#5e5e5e"/><rect x="515.9" y="352.8" width="1" height="1" fill="#5e5e5e"/><rect x="527.6" y="352.8" width="1" height="1" fill="#5e5e5e"/><rect x="539.4" y="352.8" width="1" height="1" fill="#5e5e5e"/><rect x="551.1" y="352.8" width="1" height="1" fill="#5e5e5e"/><rect x="562.8" y="352.8" width="1" height="1" fill="#5e5e5e"/><rect x="574.5" y="352.8" width="1" height="1" fill="#5e5e5e"/><rect x="586.3" y="352.8" width="1" height="1" fill="#5e5e5e"/><line x1="305.5" y1="9.5" x2="305.5" y2="391.5" stroke="#5c5c5c" stroke-width="1" stroke-dasharray="1 1"/><line x1="12" y1="200.5" x2="598.5" y2="200.5" stroke="#4e4e4a" stroke-width="1"/><line x1="303.5" y1="17.1" x2="307.5" y2="17.1" stroke="#6a6a6a" stroke-width="1"/><line x1="303.5" y1="24.8" x2="307.5" y2="24.8" stroke="#6a6a6a" stroke-width="1"/><line x1="303.5" y1="32.4" x2="307.5" y2="32.4" stroke="#6a6a6a" stroke-width="1"/><line x1="303.5" y1="40.1" x2="307.5" y2="40.1" stroke="#6a6a6a" stroke-width="1"/><line x1="303.5" y1="47.7" x2="307.5" y2="47.7" stroke="#6a6a6a" stroke-width="1"/><line x1="303.5" y1="55.3" x2="307.5" y2="55.3" stroke="#6a6a6a" stroke-width="1"/><line x1="303.5" y1="63.0" x2="307.5" y2="63.0" stroke="#6a6a6a" stroke-width="1"/><line x1="303.5" y1="70.6" x2="307.5" y2="70.6" stroke="#6a6a6a" stroke-width="1"/><line x1="303.5" y1="78.3" x2="307.5" y2="78.3" stroke="#6a6a6a" stroke-width="1"/><line x1="303.5" y1="85.9" x2="307.5" y2="85.9" stroke="#6a6a6a" stroke-width="1"/><line x1="303.5" y1="93.5" x2="307.5" y2="93.5" stroke="#6a6a6a" stroke-width="1"/><line x1="303.5" y1="101.2" x2="307.5" y2="101.2" stroke="#6a6a6a" stroke-width="1"/><line x1="303.5" y1="108.8" x2="307.5" y2="108.8" stroke="#6a6a6a" stroke-width="1"/><line x1="303.5" y1="116.5" x2="307.5" y2="116.5" stroke="#6a6a6a" stroke-width="1"/><line x1="303.5" y1="124.1" x2="307.5" y2="124.1" stroke="#6a6a6a" stroke-width="1"/><line x1="303.5" y1="131.7" x2="307.5" y2="131.7" stroke="#6a6a6a" stroke-width="1"/><line x1="303.5" y1="139.4" x2="307.5" y2="139.4" stroke="#6a6a6a" stroke-width="1"/><line x1="303.5" y1="147.0" x2="307.5" y2="147.0" stroke="#6a6a6a" stroke-width="1"/><line x1="303.5" y1="154.7" x2="307.5" y2="154.7" stroke="#6a6a6a" stroke-width="1"/><line x1="303.5" y1="162.3" x2="307.5" y2="162.3" stroke="#6a6a6a" stroke-width="1"/><line x1="303.5" y1="169.9" x2="307.5" y2="169.9" stroke="#6a6a6a" stroke-width="1"/><line x1="303.5" y1="177.6" x2="307.5" y2="177.6" stroke="#6a6a6a" stroke-width="1"/><line x1="303.5" y1="185.2" x2="307.5" y2="185.2" stroke="#6a6a6a" stroke-width="1"/><line x1="303.5" y1="192.9" x2="307.5" y2="192.9" stroke="#6a6a6a" stroke-width="1"/><line x1="303.5" y1="200.5" x2="307.5" y2="200.5" stroke="#6a6a6a" stroke-width="1"/><line x1="303.5" y1="208.1" x2="307.5" y2="208.1" stroke="#6a6a6a" stroke-width="1"/><line x1="303.5" y1="215.8" x2="307.5" y2="215.8" stroke="#6a6a6a" stroke-width="1"/><line x1="303.5" y1="223.4" x2="307.5" y2="223.4" stroke="#6a6a6a" stroke-width="1"/><line x1="303.5" y1="231.1" x2="307.5" y2="231.1" stroke="#6a6a6a" stroke-width="1"/><line x1="303.5" y1="238.7" x2="307.5" y2="238.7" stroke="#6a6a6a" stroke-width="1"/><line x1="303.5" y1="246.3" x2="307.5" y2="246.3" stroke="#6a6a6a" stroke-width="1"/><line x1="303.5" y1="254.0" x2="307.5" y2="254.0" stroke="#6a6a6a" stroke-width="1"/><line x1="303.5" y1="261.6" x2="307.5" y2="261.6" stroke="#6a6a6a" stroke-width="1"/><line x1="303.5" y1="269.3" x2="307.5" y2="269.3" stroke="#6a6a6a" stroke-width="1"/><line x1="303.5" y1="276.9" x2="307.5" y2="276.9" stroke="#6a6a6a" stroke-width="1"/><line x1="303.5" y1="284.5" x2="307.5" y2="284.5" stroke="#6a6a6a" stroke-width="1"/><line x1="303.5" y1="292.2" x2="307.5" y2="292.2" stroke="#6a6a6a" stroke-width="1"/><line x1="303.5" y1="299.8" x2="307.5" y2="299.8" stroke="#6a6a6a" stroke-width="1"/><line x1="303.5" y1="307.5" x2="307.5" y2="307.5" stroke="#6a6a6a" stroke-width="1"/><line x1="303.5" y1="315.1" x2="307.5" y2="315.1" stroke="#6a6a6a" stroke-width="1"/><line x1="303.5" y1="322.7" x2="307.5" y2="322.7" stroke="#6a6a6a" stroke-width="1"/><line x1="303.5" y1="330.4" x2="307.5" y2="330.4" stroke="#6a6a6a" stroke-width="1"/><line x1="303.5" y1="338.0" x2="307.5" y2="338.0" stroke="#6a6a6a" stroke-width="1"/><line x1="303.5" y1="345.7" x2="307.5" y2="345.7" stroke="#6a6a6a" stroke-width="1"/><line x1="303.5" y1="353.3" x2="307.5" y2="353.3" stroke="#6a6a6a" stroke-width="1"/><line x1="303.5" y1="360.9" x2="307.5" y2="360.9" stroke="#6a6a6a" stroke-width="1"/><line x1="303.5" y1="368.6" x2="307.5" y2="368.6" stroke="#6a6a6a" stroke-width="1"/><line x1="303.5" y1="376.2" x2="307.5" y2="376.2" stroke="#6a6a6a" stroke-width="1"/><line x1="303.5" y1="383.9" x2="307.5" y2="383.9" stroke="#6a6a6a" stroke-width="1"/><line x1="23.7" y1="198.5" x2="23.7" y2="202.5" stroke="#6a6a6a" stroke-width="1"/><line x1="35.5" y1="198.5" x2="35.5" y2="202.5" stroke="#6a6a6a" stroke-width="1"/><line x1="47.2" y1="198.5" x2="47.2" y2="202.5" stroke="#6a6a6a" stroke-width="1"/><line x1="58.9" y1="198.5" x2="58.9" y2="202.5" stroke="#6a6a6a" stroke-width="1"/><line x1="70.7" y1="198.5" x2="70.7" y2="202.5" stroke="#6a6a6a" stroke-width="1"/><line x1="82.4" y1="198.5" x2="82.4" y2="202.5" stroke="#6a6a6a" stroke-width="1"/><line x1="94.1" y1="198.5" x2="94.1" y2="202.5" stroke="#6a6a6a" stroke-width="1"/><line x1="105.8" y1="198.5" x2="105.8" y2="202.5" stroke="#6a6a6a" stroke-width="1"/><line x1="117.6" y1="198.5" x2="117.6" y2="202.5" stroke="#6a6a6a" stroke-width="1"/><line x1="129.3" y1="198.5" x2="129.3" y2="202.5" stroke="#6a6a6a" stroke-width="1"/><line x1="141.0" y1="198.5" x2="141.0" y2="202.5" stroke="#6a6a6a" stroke-width="1"/><line x1="152.8" y1="198.5" x2="152.8" y2="202.5" stroke="#6a6a6a" stroke-width="1"/><line x1="164.5" y1="198.5" x2="164.5" y2="202.5" stroke="#6a6a6a" stroke-width="1"/><line x1="176.2" y1="198.5" x2="176.2" y2="202.5" stroke="#6a6a6a" stroke-width="1"/><line x1="187.9" y1="198.5" x2="187.9" y2="202.5" stroke="#6a6a6a" stroke-width="1"/><line x1="199.7" y1="198.5" x2="199.7" y2="202.5" stroke="#6a6a6a" stroke-width="1"/><line x1="211.4" y1="198.5" x2="211.4" y2="202.5" stroke="#6a6a6a" stroke-width="1"/><line x1="223.1" y1="198.5" x2="223.1" y2="202.5" stroke="#6a6a6a" stroke-width="1"/><line x1="234.9" y1="198.5" x2="234.9" y2="202.5" stroke="#6a6a6a" stroke-width="1"/><line x1="246.6" y1="198.5" x2="246.6" y2="202.5" stroke="#6a6a6a" stroke-width="1"/><line x1="258.3" y1="198.5" x2="258.3" y2="202.5" stroke="#6a6a6a" stroke-width="1"/><line x1="270.1" y1="198.5" x2="270.1" y2="202.5" stroke="#6a6a6a" stroke-width="1"/><line x1="281.8" y1="198.5" x2="281.8" y2="202.5" stroke="#6a6a6a" stroke-width="1"/><line x1="293.5" y1="198.5" x2="293.5" y2="202.5" stroke="#6a6a6a" stroke-width="1"/><line x1="305.2" y1="198.5" x2="305.2" y2="202.5" stroke="#6a6a6a" stroke-width="1"/><line x1="317.0" y1="198.5" x2="317.0" y2="202.5" stroke="#6a6a6a" stroke-width="1"/><line x1="328.7" y1="198.5" x2="328.7" y2="202.5" stroke="#6a6a6a" stroke-width="1"/><line x1="340.4" y1="198.5" x2="340.4" y2="202.5" stroke="#6a6a6a" stroke-width="1"/><line x1="352.2" y1="198.5" x2="352.2" y2="202.5" stroke="#6a6a6a" stroke-width="1"/><line x1="363.9" y1="198.5" x2="363.9" y2="202.5" stroke="#6a6a6a" stroke-width="1"/><line x1="375.6" y1="198.5" x2="375.6" y2="202.5" stroke="#6a6a6a" stroke-width="1"/><line x1="387.4" y1="198.5" x2="387.4" y2="202.5" stroke="#6a6a6a" stroke-width="1"/><line x1="399.1" y1="198.5" x2="399.1" y2="202.5" stroke="#6a6a6a" stroke-width="1"/><line x1="410.8" y1="198.5" x2="410.8" y2="202.5" stroke="#6a6a6a" stroke-width="1"/><line x1="422.6" y1="198.5" x2="422.6" y2="202.5" stroke="#6a6a6a" stroke-width="1"/><line x1="434.3" y1="198.5" x2="434.3" y2="202.5" stroke="#6a6a6a" stroke-width="1"/><line x1="446.0" y1="198.5" x2="446.0" y2="202.5" stroke="#6a6a6a" stroke-width="1"/><line x1="457.7" y1="198.5" x2="457.7" y2="202.5" stroke="#6a6a6a" stroke-width="1"/><line x1="469.5" y1="198.5" x2="469.5" y2="202.5" stroke="#6a6a6a" stroke-width="1"/><line x1="481.2" y1="198.5" x2="481.2" y2="202.5" stroke="#6a6a6a" stroke-width="1"/><line x1="492.9" y1="198.5" x2="492.9" y2="202.5" stroke="#6a6a6a" stroke-width="1"/><line x1="504.7" y1="198.5" x2="504.7" y2="202.5" stroke="#6a6a6a" stroke-width="1"/><line x1="516.4" y1="198.5" x2="516.4" y2="202.5" stroke="#6a6a6a" stroke-width="1"/><line x1="528.1" y1="198.5" x2="528.1" y2="202.5" stroke="#6a6a6a" stroke-width="1"/><line x1="539.9" y1="198.5" x2="539.9" y2="202.5" stroke="#6a6a6a" stroke-width="1"/><line x1="551.6" y1="198.5" x2="551.6" y2="202.5" stroke="#6a6a6a" stroke-width="1"/><line x1="563.3" y1="198.5" x2="563.3" y2="202.5" stroke="#6a6a6a" stroke-width="1"/><line x1="575.0" y1="198.5" x2="575.0" y2="202.5" stroke="#6a6a6a" stroke-width="1"/><line x1="586.8" y1="198.5" x2="586.8" y2="202.5" stroke="#6a6a6a" stroke-width="1"/><line x1="23.7" y1="9.5" x2="23.7" y2="11.5" stroke="#50607a" stroke-width="1"/><line x1="23.7" y1="389.5" x2="23.7" y2="391.5" stroke="#50607a" stroke-width="1"/><line x1="35.5" y1="9.5" x2="35.5" y2="11.5" stroke="#50607a" stroke-width="1"/><line x1="35.5" y1="389.5" x2="35.5" y2="391.5" stroke="#50607a" stroke-width="1"/><line x1="47.2" y1="9.5" x2="47.2" y2="11.5" stroke="#50607a" stroke-width="1"/><line x1="47.2" y1="389.5" x2="47.2" y2="391.5" stroke="#50607a" stroke-width="1"/><line x1="58.9" y1="9.5" x2="58.9" y2="11.5" stroke="#50607a" stroke-width="1"/><line x1="58.9" y1="389.5" x2="58.9" y2="391.5" stroke="#50607a" stroke-width="1"/><line x1="70.7" y1="9.5" x2="70.7" y2="11.5" stroke="#50607a" stroke-width="1"/><line x1="70.7" y1="389.5" x2="70.7" y2="391.5" stroke="#50607a" stroke-width="1"/><line x1="82.4" y1="9.5" x2="82.4" y2="11.5" stroke="#50607a" stroke-width="1"/><line x1="82.4" y1="389.5" x2="82.4" y2="391.5" stroke="#50607a" stroke-width="1"/><line x1="94.1" y1="9.5" x2="94.1" y2="11.5" stroke="#50607a" stroke-width="1"/><line x1="94.1" y1="389.5" x2="94.1" y2="391.5" stroke="#50607a" stroke-width="1"/><line x1="105.8" y1="9.5" x2="105.8" y2="11.5" stroke="#50607a" stroke-width="1"/><line x1="105.8" y1="389.5" x2="105.8" y2="391.5" stroke="#50607a" stroke-width="1"/><line x1="117.6" y1="9.5" x2="117.6" y2="11.5" stroke="#50607a" stroke-width="1"/><line x1="117.6" y1="389.5" x2="117.6" y2="391.5" stroke="#50607a" stroke-width="1"/><line x1="129.3" y1="9.5" x2="129.3" y2="11.5" stroke="#50607a" stroke-width="1"/><line x1="129.3" y1="389.5" x2="129.3" y2="391.5" stroke="#50607a" stroke-width="1"/><line x1="141.0" y1="9.5" x2="141.0" y2="11.5" stroke="#50607a" stroke-width="1"/><line x1="141.0" y1="389.5" x2="141.0" y2="391.5" stroke="#50607a" stroke-width="1"/><line x1="152.8" y1="9.5" x2="152.8" y2="11.5" stroke="#50607a" stroke-width="1"/><line x1="152.8" y1="389.5" x2="152.8" y2="391.5" stroke="#50607a" stroke-width="1"/><line x1="164.5" y1="9.5" x2="164.5" y2="11.5" stroke="#50607a" stroke-width="1"/><line x1="164.5" y1="389.5" x2="164.5" y2="391.5" stroke="#50607a" stroke-width="1"/><line x1="176.2" y1="9.5" x2="176.2" y2="11.5" stroke="#50607a" stroke-width="1"/><line x1="176.2" y1="389.5" x2="176.2" y2="391.5" stroke="#50607a" stroke-width="1"/><line x1="187.9" y1="9.5" x2="187.9" y2="11.5" stroke="#50607a" stroke-width="1"/><line x1="187.9" y1="389.5" x2="187.9" y2="391.5" stroke="#50607a" stroke-width="1"/><line x1="199.7" y1="9.5" x2="199.7" y2="11.5" stroke="#50607a" stroke-width="1"/><line x1="199.7" y1="389.5" x2="199.7" y2="391.5" stroke="#50607a" stroke-width="1"/><line x1="211.4" y1="9.5" x2="211.4" y2="11.5" stroke="#50607a" stroke-width="1"/><line x1="211.4" y1="389.5" x2="211.4" y2="391.5" stroke="#50607a" stroke-width="1"/><line x1="223.1" y1="9.5" x2="223.1" y2="11.5" stroke="#50607a" stroke-width="1"/><line x1="223.1" y1="389.5" x2="223.1" y2="391.5" stroke="#50607a" stroke-width="1"/><line x1="234.9" y1="9.5" x2="234.9" y2="11.5" stroke="#50607a" stroke-width="1"/><line x1="234.9" y1="389.5" x2="234.9" y2="391.5" stroke="#50607a" stroke-width="1"/><line x1="246.6" y1="9.5" x2="246.6" y2="11.5" stroke="#50607a" stroke-width="1"/><line x1="246.6" y1="389.5" x2="246.6" y2="391.5" stroke="#50607a" stroke-width="1"/><line x1="258.3" y1="9.5" x2="258.3" y2="11.5" stroke="#50607a" stroke-width="1"/><line x1="258.3" y1="389.5" x2="258.3" y2="391.5" stroke="#50607a" stroke-width="1"/><line x1="270.1" y1="9.5" x2="270.1" y2="11.5" stroke="#50607a" stroke-width="1"/><line x1="270.1" y1="389.5" x2="270.1" y2="391.5" stroke="#50607a" stroke-width="1"/><line x1="281.8" y1="9.5" x2="281.8" y2="11.5" stroke="#50607a" stroke-width="1"/><line x1="281.8" y1="389.5" x2="281.8" y2="391.5" stroke="#50607a" stroke-width="1"/><line x1="293.5" y1="9.5" x2="293.5" y2="11.5" stroke="#50607a" stroke-width="1"/><line x1="293.5" y1="389.5" x2="293.5" y2="391.5" stroke="#50607a" stroke-width="1"/><line x1="305.2" y1="9.5" x2="305.2" y2="11.5" stroke="#50607a" stroke-width="1"/><line x1="305.2" y1="389.5" x2="305.2" y2="391.5" stroke="#50607a" stroke-width="1"/><line x1="317.0" y1="9.5" x2="317.0" y2="11.5" stroke="#50607a" stroke-width="1"/><line x1="317.0" y1="389.5" x2="317.0" y2="391.5" stroke="#50607a" stroke-width="1"/><line x1="328.7" y1="9.5" x2="328.7" y2="11.5" stroke="#50607a" stroke-width="1"/><line x1="328.7" y1="389.5" x2="328.7" y2="391.5" stroke="#50607a" stroke-width="1"/><line x1="340.4" y1="9.5" x2="340.4" y2="11.5" stroke="#50607a" stroke-width="1"/><line x1="340.4" y1="389.5" x2="340.4" y2="391.5" stroke="#50607a" stroke-width="1"/><line x1="352.2" y1="9.5" x2="352.2" y2="11.5" stroke="#50607a" stroke-width="1"/><line x1="352.2" y1="389.5" x2="352.2" y2="391.5" stroke="#50607a" stroke-width="1"/><line x1="363.9" y1="9.5" x2="363.9" y2="11.5" stroke="#50607a" stroke-width="1"/><line x1="363.9" y1="389.5" x2="363.9" y2="391.5" stroke="#50607a" stroke-width="1"/><line x1="375.6" y1="9.5" x2="375.6" y2="11.5" stroke="#50607a" stroke-width="1"/><line x1="375.6" y1="389.5" x2="375.6" y2="391.5" stroke="#50607a" stroke-width="1"/><line x1="387.4" y1="9.5" x2="387.4" y2="11.5" stroke="#50607a" stroke-width="1"/><line x1="387.4" y1="389.5" x2="387.4" y2="391.5" stroke="#50607a" stroke-width="1"/><line x1="399.1" y1="9.5" x2="399.1" y2="11.5" stroke="#50607a" stroke-width="1"/><line x1="399.1" y1="389.5" x2="399.1" y2="391.5" stroke="#50607a" stroke-width="1"/><line x1="410.8" y1="9.5" x2="410.8" y2="11.5" stroke="#50607a" stroke-width="1"/><line x1="410.8" y1="389.5" x2="410.8" y2="391.5" stroke="#50607a" stroke-width="1"/><line x1="422.6" y1="9.5" x2="422.6" y2="11.5" stroke="#50607a" stroke-width="1"/><line x1="422.6" y1="389.5" x2="422.6" y2="391.5" stroke="#50607a" stroke-width="1"/><line x1="434.3" y1="9.5" x2="434.3" y2="11.5" stroke="#50607a" stroke-width="1"/><line x1="434.3" y1="389.5" x2="434.3" y2="391.5" stroke="#50607a" stroke-width="1"/><line x1="446.0" y1="9.5" x2="446.0" y2="11.5" stroke="#50607a" stroke-width="1"/><line x1="446.0" y1="389.5" x2="446.0" y2="391.5" stroke="#50607a" stroke-width="1"/><line x1="457.7" y1="9.5" x2="457.7" y2="11.5" stroke="#50607a" stroke-width="1"/><line x1="457.7" y1="389.5" x2="457.7" y2="391.5" stroke="#50607a" stroke-width="1"/><line x1="469.5" y1="9.5" x2="469.5" y2="11.5" stroke="#50607a" stroke-width="1"/><line x1="469.5" y1="389.5" x2="469.5" y2="391.5" stroke="#50607a" stroke-width="1"/><line x1="481.2" y1="9.5" x2="481.2" y2="11.5" stroke="#50607a" stroke-width="1"/><line x1="481.2" y1="389.5" x2="481.2" y2="391.5" stroke="#50607a" stroke-width="1"/><line x1="492.9" y1="9.5" x2="492.9" y2="11.5" stroke="#50607a" stroke-width="1"/><line x1="492.9" y1="389.5" x2="492.9" y2="391.5" stroke="#50607a" stroke-width="1"/><line x1="504.7" y1="9.5" x2="504.7" y2="11.5" stroke="#50607a" stroke-width="1"/><line x1="504.7" y1="389.5" x2="504.7" y2="391.5" stroke="#50607a" stroke-width="1"/><line x1="516.4" y1="9.5" x2="516.4" y2="11.5" stroke="#50607a" stroke-width="1"/><line x1="516.4" y1="389.5" x2="516.4" y2="391.5" stroke="#50607a" stroke-width="1"/><line x1="528.1" y1="9.5" x2="528.1" y2="11.5" stroke="#50607a" stroke-width="1"/><line x1="528.1" y1="389.5" x2="528.1" y2="391.5" stroke="#50607a" stroke-width="1"/><line x1="539.9" y1="9.5" x2="539.9" y2="11.5" stroke="#50607a" stroke-width="1"/><line x1="539.9" y1="389.5" x2="539.9" y2="391.5" stroke="#50607a" stroke-width="1"/><line x1="551.6" y1="9.5" x2="551.6" y2="11.5" stroke="#50607a" stroke-width="1"/><line x1="551.6" y1="389.5" x2="551.6" y2="391.5" stroke="#50607a" stroke-width="1"/><line x1="563.3" y1="9.5" x2="563.3" y2="11.5" stroke="#50607a" stroke-width="1"/><line x1="563.3" y1="389.5" x2="563.3" y2="391.5" stroke="#50607a" stroke-width="1"/><line x1="575.0" y1="9.5" x2="575.0" y2="11.5" stroke="#50607a" stroke-width="1"/><line x1="575.0" y1="389.5" x2="575.0" y2="391.5" stroke="#50607a" stroke-width="1"/><line x1="586.8" y1="9.5" x2="586.8" y2="11.5" stroke="#50607a" stroke-width="1"/><line x1="586.8" y1="389.5" x2="586.8" y2="391.5" stroke="#50607a" stroke-width="1"/><line x1="12" y1="17.1" x2="14" y2="17.1" stroke="#50607a" stroke-width="1"/><line x1="12" y1="24.8" x2="14" y2="24.8" stroke="#50607a" stroke-width="1"/><line x1="12" y1="32.4" x2="14" y2="32.4" stroke="#50607a" stroke-width="1"/><line x1="12" y1="40.1" x2="14" y2="40.1" stroke="#50607a" stroke-width="1"/><line x1="12" y1="47.7" x2="14" y2="47.7" stroke="#50607a" stroke-width="1"/><line x1="12" y1="55.3" x2="14" y2="55.3" stroke="#50607a" stroke-width="1"/><line x1="12" y1="63.0" x2="14" y2="63.0" stroke="#50607a" stroke-width="1"/><line x1="12" y1="70.6" x2="14" y2="70.6" stroke="#50607a" stroke-width="1"/><line x1="12" y1="78.3" x2="14" y2="78.3" stroke="#50607a" stroke-width="1"/><line x1="12" y1="85.9" x2="14" y2="85.9" stroke="#50607a" stroke-width="1"/><line x1="12" y1="93.5" x2="14" y2="93.5" stroke="#50607a" stroke-width="1"/><line x1="12" y1="101.2" x2="14" y2="101.2" stroke="#50607a" stroke-width="1"/><line x1="12" y1="108.8" x2="14" y2="108.8" stroke="#50607a" stroke-width="1"/><line x1="12" y1="116.5" x2="14" y2="116.5" stroke="#50607a" stroke-width="1"/><line x1="12" y1="124.1" x2="14" y2="124.1" stroke="#50607a" stroke-width="1"/><line x1="12" y1="131.7" x2="14" y2="131.7" stroke="#50607a" stroke-width="1"/><line x1="12" y1="139.4" x2="14" y2="139.4" stroke="#50607a" stroke-width="1"/><line x1="12" y1="147.0" x2="14" y2="147.0" stroke="#50607a" stroke-width="1"/><line x1="12" y1="154.7" x2="14" y2="154.7" stroke="#50607a" stroke-width="1"/><line x1="12" y1="162.3" x2="14" y2="162.3" stroke="#50607a" stroke-width="1"/><line x1="12" y1="169.9" x2="14" y2="169.9" stroke="#50607a" stroke-width="1"/><line x1="12" y1="177.6" x2="14" y2="177.6" stroke="#50607a" stroke-width="1"/><line x1="12" y1="185.2" x2="14" y2="185.2" stroke="#50607a" stroke-width="1"/><line x1="12" y1="192.9" x2="14" y2="192.9" stroke="#50607a" stroke-width="1"/><line x1="12" y1="200.5" x2="14" y2="200.5" stroke="#50607a" stroke-width="1"/><line x1="12" y1="208.1" x2="14" y2="208.1" stroke="#50607a" stroke-width="1"/><line x1="12" y1="215.8" x2="14" y2="215.8" stroke="#50607a" stroke-width="1"/><line x1="12" y1="223.4" x2="14" y2="223.4" stroke="#50607a" stroke-width="1"/><line x1="12" y1="231.1" x2="14" y2="231.1" stroke="#50607a" stroke-width="1"/><line x1="12" y1="238.7" x2="14" y2="238.7" stroke="#50607a" stroke-width="1"/><line x1="12" y1="246.3" x2="14" y2="246.3" stroke="#50607a" stroke-width="1"/><line x1="12" y1="254.0" x2="14" y2="254.0" stroke="#50607a" stroke-width="1"/><line x1="12" y1="261.6" x2="14" y2="261.6" stroke="#50607a" stroke-width="1"/><line x1="12" y1="269.3" x2="14" y2="269.3" stroke="#50607a" stroke-width="1"/><line x1="12" y1="276.9" x2="14" y2="276.9" stroke="#50607a" stroke-width="1"/><line x1="12" y1="284.5" x2="14" y2="284.5" stroke="#50607a" stroke-width="1"/><line x1="12" y1="292.2" x2="14" y2="292.2" stroke="#50607a" stroke-width="1"/><line x1="12" y1="299.8" x2="14" y2="299.8" stroke="#50607a" stroke-width="1"/><line x1="12" y1="307.5" x2="14" y2="307.5" stroke="#50607a" stroke-width="1"/><line x1="12" y1="315.1" x2="14" y2="315.1" stroke="#50607a" stroke-width="1"/><line x1="12" y1="322.7" x2="14" y2="322.7" stroke="#50607a" stroke-width="1"/><line x1="12" y1="330.4" x2="14" y2="330.4" stroke="#50607a" stroke-width="1"/><line x1="12" y1="338.0" x2="14" y2="338.0" stroke="#50607a" stroke-width="1"/><line x1="12" y1="345.7" x2="14" y2="345.7" stroke="#50607a" stroke-width="1"/><line x1="12" y1="353.3" x2="14" y2="353.3" stroke="#50607a" stroke-width="1"/><line x1="12" y1="360.9" x2="14" y2="360.9" stroke="#50607a" stroke-width="1"/><line x1="12" y1="368.6" x2="14" y2="368.6" stroke="#50607a" stroke-width="1"/><line x1="12" y1="376.2" x2="14" y2="376.2" stroke="#50607a" stroke-width="1"/><line x1="12" y1="383.9" x2="14" y2="383.9" stroke="#50607a" stroke-width="1"/><line x1="12" y1="9.5" x2="598.5" y2="9.5" stroke="#7f93ad" stroke-width="1"/><line x1="12" y1="9.5" x2="12" y2="391.5" stroke="#4f6580" stroke-width="1.2"/><line x1="12" y1="391.5" x2="598.5" y2="391.5" stroke="#7f93ad" stroke-width="1.2"/><line x1="598.5" y1="9.5" x2="598.5" y2="391.5" stroke="#7f93ad" stroke-width="1"/><line x1="596.5" y1="17.1" x2="598.5" y2="17.1" stroke="#50607a" stroke-width="1"/><line x1="596.5" y1="24.8" x2="598.5" y2="24.8" stroke="#50607a" stroke-width="1"/><line x1="596.5" y1="32.4" x2="598.5" y2="32.4" stroke="#50607a" stroke-width="1"/><line x1="596.5" y1="40.1" x2="598.5" y2="40.1" stroke="#50607a" stroke-width="1"/><line x1="596.5" y1="47.7" x2="598.5" y2="47.7" stroke="#50607a" stroke-width="1"/><line x1="596.5" y1="55.3" x2="598.5" y2="55.3" stroke="#50607a" stroke-width="1"/><line x1="596.5" y1="63.0" x2="598.5" y2="63.0" stroke="#50607a" stroke-width="1"/><line x1="596.5" y1="70.6" x2="598.5" y2="70.6" stroke="#50607a" stroke-width="1"/><line x1="596.5" y1="78.3" x2="598.5" y2="78.3" stroke="#50607a" stroke-width="1"/><line x1="596.5" y1="85.9" x2="598.5" y2="85.9" stroke="#50607a" stroke-width="1"/><line x1="596.5" y1="93.5" x2="598.5" y2="93.5" stroke="#50607a" stroke-width="1"/><line x1="596.5" y1="101.2" x2="598.5" y2="101.2" stroke="#50607a" stroke-width="1"/><line x1="596.5" y1="108.8" x2="598.5" y2="108.8" stroke="#50607a" stroke-width="1"/><line x1="596.5" y1="116.5" x2="598.5" y2="116.5" stroke="#50607a" stroke-width="1"/><line x1="596.5" y1="124.1" x2="598.5" y2="124.1" stroke="#50607a" stroke-width="1"/><line x1="596.5" y1="131.7" x2="598.5" y2="131.7" stroke="#50607a" stroke-width="1"/><line x1="596.5" y1="139.4" x2="598.5" y2="139.4" stroke="#50607a" stroke-width="1"/><line x1="596.5" y1="147.0" x2="598.5" y2="147.0" stroke="#50607a" stroke-width="1"/><line x1="596.5" y1="154.7" x2="598.5" y2="154.7" stroke="#50607a" stroke-width="1"/><line x1="596.5" y1="162.3" x2="598.5" y2="162.3" stroke="#50607a" stroke-width="1"/><line x1="596.5" y1="169.9" x2="598.5" y2="169.9" stroke="#50607a" stroke-width="1"/><line x1="596.5" y1="177.6" x2="598.5" y2="177.6" stroke="#50607a" stroke-width="1"/><line x1="596.5" y1="185.2" x2="598.5" y2="185.2" stroke="#50607a" stroke-width="1"/><line x1="596.5" y1="192.9" x2="598.5" y2="192.9" stroke="#50607a" stroke-width="1"/><line x1="596.5" y1="200.5" x2="598.5" y2="200.5" stroke="#50607a" stroke-width="1"/><line x1="596.5" y1="208.1" x2="598.5" y2="208.1" stroke="#50607a" stroke-width="1"/><line x1="596.5" y1="215.8" x2="598.5" y2="215.8" stroke="#50607a" stroke-width="1"/><line x1="596.5" y1="223.4" x2="598.5" y2="223.4" stroke="#50607a" stroke-width="1"/><line x1="596.5" y1="231.1" x2="598.5" y2="231.1" stroke="#50607a" stroke-width="1"/><line x1="596.5" y1="238.7" x2="598.5" y2="238.7" stroke="#50607a" stroke-width="1"/><line x1="596.5" y1="246.3" x2="598.5" y2="246.3" stroke="#50607a" stroke-width="1"/><line x1="596.5" y1="254.0" x2="598.5" y2="254.0" stroke="#50607a" stroke-width="1"/><line x1="596.5" y1="261.6" x2="598.5" y2="261.6" stroke="#50607a" stroke-width="1"/><line x1="596.5" y1="269.3" x2="598.5" y2="269.3" stroke="#50607a" stroke-width="1"/><line x1="596.5" y1="276.9" x2="598.5" y2="276.9" stroke="#50607a" stroke-width="1"/><line x1="596.5" y1="284.5" x2="598.5" y2="284.5" stroke="#50607a" stroke-width="1"/><line x1="596.5" y1="292.2" x2="598.5" y2="292.2" stroke="#50607a" stroke-width="1"/><line x1="596.5" y1="299.8" x2="598.5" y2="299.8" stroke="#50607a" stroke-width="1"/><line x1="596.5" y1="307.5" x2="598.5" y2="307.5" stroke="#50607a" stroke-width="1"/><line x1="596.5" y1="315.1" x2="598.5" y2="315.1" stroke="#50607a" stroke-width="1"/><line x1="596.5" y1="322.7" x2="598.5" y2="322.7" stroke="#50607a" stroke-width="1"/><line x1="596.5" y1="330.4" x2="598.5" y2="330.4" stroke="#50607a" stroke-width="1"/><line x1="596.5" y1="338.0" x2="598.5" y2="338.0" stroke="#50607a" stroke-width="1"/><line x1="596.5" y1="345.7" x2="598.5" y2="345.7" stroke="#50607a" stroke-width="1"/><line x1="596.5" y1="353.3" x2="598.5" y2="353.3" stroke="#50607a" stroke-width="1"/><line x1="596.5" y1="360.9" x2="598.5" y2="360.9" stroke="#50607a" stroke-width="1"/><line x1="596.5" y1="368.6" x2="598.5" y2="368.6" stroke="#50607a" stroke-width="1"/><line x1="596.5" y1="376.2" x2="598.5" y2="376.2" stroke="#50607a" stroke-width="1"/><line x1="596.5" y1="383.9" x2="598.5" y2="383.9" stroke="#50607a" stroke-width="1"/></g>
<rect x="71.5" y="0.5" width="468" height="9" fill="none" stroke="#7f93ad" stroke-width="1"/>
<line x1="166" y1="4.5" x2="446" y2="4.5" stroke="#5a3090" stroke-width="1"/>
<path d="M167 1.5 H165.5 V8 H167" fill="none" stroke="#c8c0a0" stroke-width="1"/>
<path d="M445 1.5 H446.5 V8 H445" fill="none" stroke="#c8c0a0" stroke-width="1"/>
<path d="M274.8 2 H279.5 V7.5 L277.2 9 L274.8 7.5 Z" fill="#000" stroke="#f0a020" stroke-width="1"/>
<path d="M276 3.3 H278.4 M277.2 3.3 V7" stroke="#f0a020" stroke-width="0.9"/>
<path d="M302.5 0 H308.5 L305.5 2.5 Z" fill="#f0a020"/>
<path d="M302.5 9.5 H308.5 L305.5 13 Z" fill="#f0a020"/>
<text x="-0.6" y="8.6" font-family="'Liberation Serif', serif" font-size="11.5" fill="#f4f4f4" font-weight="bold" text-anchor="start"  textLength="18.5" lengthAdjust="spacingAndGlyphs">Tek</text>
<text x="20.4" y="8.4" font-family="'Liberation Sans', sans-serif" font-size="9.6" fill="#e8e8e8" font-weight="normal" text-anchor="start" stroke="#e8e8e8" stroke-width="0.3" textLength="28.0" lengthAdjust="spacingAndGlyphs">PreVu</text>
<g><line x1="12.0" y1="280.5" x2="117.8" y2="280.5" stroke="#2fa86a" stroke-width="1.2"/><line x1="117.8" y1="312.5" x2="124.0" y2="312.5" stroke="#2a4aa8" stroke-width="1.2"/><line x1="124.0" y1="280.5" x2="130.8" y2="280.5" stroke="#2fa86a" stroke-width="1.2"/><line x1="130.8" y1="312.5" x2="138.5" y2="312.5" stroke="#2a4aa8" stroke-width="1.2"/><line x1="138.5" y1="280.5" x2="145.5" y2="280.5" stroke="#2fa86a" stroke-width="1.2"/><line x1="145.5" y1="312.5" x2="175.5" y2="312.5" stroke="#2a4aa8" stroke-width="1.2"/><line x1="175.5" y1="280.5" x2="180.5" y2="280.5" stroke="#2fa86a" stroke-width="1.2"/><line x1="180.5" y1="312.5" x2="205.7" y2="312.5" stroke="#2a4aa8" stroke-width="1.2"/><line x1="205.7" y1="280.5" x2="213.0" y2="280.5" stroke="#2fa86a" stroke-width="1.2"/><line x1="213.0" y1="312.5" x2="220.5" y2="312.5" stroke="#2a4aa8" stroke-width="1.2"/><line x1="220.5" y1="280.5" x2="242.2" y2="280.5" stroke="#2fa86a" stroke-width="1.2"/><line x1="242.2" y1="312.5" x2="249.7" y2="312.5" stroke="#2a4aa8" stroke-width="1.2"/><line x1="249.7" y1="280.5" x2="251.0" y2="280.5" stroke="#2fa86a" stroke-width="1.2"/><line x1="251.0" y1="312.5" x2="273.7" y2="312.5" stroke="#2a4aa8" stroke-width="1.2"/><line x1="273.7" y1="280.5" x2="288.5" y2="280.5" stroke="#2fa86a" stroke-width="1.2"/><line x1="288.5" y1="312.5" x2="317.5" y2="312.5" stroke="#2a4aa8" stroke-width="1.2"/><line x1="317.5" y1="280.5" x2="319.5" y2="280.5" stroke="#2fa86a" stroke-width="1.2"/><line x1="319.5" y1="312.5" x2="341.5" y2="312.5" stroke="#2a4aa8" stroke-width="1.2"/><line x1="341.5" y1="280.5" x2="356.5" y2="280.5" stroke="#2fa86a" stroke-width="1.2"/><line x1="356.5" y1="312.5" x2="371.2" y2="312.5" stroke="#2a4aa8" stroke-width="1.2"/><line x1="371.2" y1="280.5" x2="378.7" y2="280.5" stroke="#2fa86a" stroke-width="1.2"/><line x1="378.7" y1="312.5" x2="385.7" y2="312.5" stroke="#2a4aa8" stroke-width="1.2"/><line x1="385.7" y1="280.5" x2="387.5" y2="280.5" stroke="#2fa86a" stroke-width="1.2"/><line x1="387.5" y1="312.5" x2="409.5" y2="312.5" stroke="#2a4aa8" stroke-width="1.2"/><line x1="409.5" y1="280.5" x2="424.7" y2="280.5" stroke="#2fa86a" stroke-width="1.2"/><line x1="424.7" y1="312.5" x2="432.0" y2="312.5" stroke="#2a4aa8" stroke-width="1.2"/><line x1="432.0" y1="280.5" x2="439.5" y2="280.5" stroke="#2fa86a" stroke-width="1.2"/><line x1="439.5" y1="312.5" x2="453.5" y2="312.5" stroke="#2a4aa8" stroke-width="1.2"/><line x1="453.5" y1="280.5" x2="465.2" y2="280.5" stroke="#2fa86a" stroke-width="1.2"/><line x1="465.2" y1="312.5" x2="470.3" y2="312.5" stroke="#2a4aa8" stroke-width="1.2"/><line x1="470.3" y1="280.5" x2="598.5" y2="280.5" stroke="#2fa86a" stroke-width="1.2"/><line x1="117.5" y1="280.5" x2="117.5" y2="312.5" stroke="#6e6e6e" stroke-width="1"/><line x1="124.5" y1="280.5" x2="124.5" y2="312.5" stroke="#6e6e6e" stroke-width="1"/><line x1="130.5" y1="280.5" x2="130.5" y2="312.5" stroke="#6e6e6e" stroke-width="1"/><line x1="138.5" y1="280.5" x2="138.5" y2="312.5" stroke="#6e6e6e" stroke-width="1"/><line x1="145.5" y1="280.5" x2="145.5" y2="312.5" stroke="#6e6e6e" stroke-width="1"/><line x1="175.5" y1="280.5" x2="175.5" y2="312.5" stroke="#6e6e6e" stroke-width="1"/><line x1="180.5" y1="280.5" x2="180.5" y2="312.5" stroke="#6e6e6e" stroke-width="1"/><line x1="205.5" y1="280.5" x2="205.5" y2="312.5" stroke="#6e6e6e" stroke-width="1"/><line x1="213.5" y1="280.5" x2="213.5" y2="312.5" stroke="#6e6e6e" stroke-width="1"/><line x1="220.5" y1="280.5" x2="220.5" y2="312.5" stroke="#6e6e6e" stroke-width="1"/><line x1="242.5" y1="280.5" x2="242.5" y2="312.5" stroke="#6e6e6e" stroke-width="1"/><line x1="249.5" y1="280.5" x2="249.5" y2="312.5" stroke="#6e6e6e" stroke-width="1"/><line x1="251.5" y1="280.5" x2="251.5" y2="312.5" stroke="#6e6e6e" stroke-width="1"/><line x1="273.5" y1="280.5" x2="273.5" y2="312.5" stroke="#6e6e6e" stroke-width="1"/><line x1="288.5" y1="280.5" x2="288.5" y2="312.5" stroke="#6e6e6e" stroke-width="1"/><line x1="317.5" y1="280.5" x2="317.5" y2="312.5" stroke="#6e6e6e" stroke-width="1"/><line x1="319.5" y1="280.5" x2="319.5" y2="312.5" stroke="#6e6e6e" stroke-width="1"/><line x1="341.5" y1="280.5" x2="341.5" y2="312.5" stroke="#6e6e6e" stroke-width="1"/><line x1="356.5" y1="280.5" x2="356.5" y2="312.5" stroke="#6e6e6e" stroke-width="1"/><line x1="371.5" y1="280.5" x2="371.5" y2="312.5" stroke="#6e6e6e" stroke-width="1"/><line x1="378.5" y1="280.5" x2="378.5" y2="312.5" stroke="#6e6e6e" stroke-width="1"/><line x1="385.5" y1="280.5" x2="385.5" y2="312.5" stroke="#6e6e6e" stroke-width="1"/><line x1="387.5" y1="280.5" x2="387.5" y2="312.5" stroke="#6e6e6e" stroke-width="1"/><line x1="409.5" y1="280.5" x2="409.5" y2="312.5" stroke="#6e6e6e" stroke-width="1"/><line x1="424.5" y1="280.5" x2="424.5" y2="312.5" stroke="#6e6e6e" stroke-width="1"/><line x1="432.5" y1="280.5" x2="432.5" y2="312.5" stroke="#6e6e6e" stroke-width="1"/><line x1="439.5" y1="280.5" x2="439.5" y2="312.5" stroke="#6e6e6e" stroke-width="1"/><line x1="453.5" y1="280.5" x2="453.5" y2="312.5" stroke="#6e6e6e" stroke-width="1"/><line x1="465.5" y1="280.5" x2="465.5" y2="312.5" stroke="#6e6e6e" stroke-width="1"/><line x1="470.5" y1="280.5" x2="470.5" y2="312.5" stroke="#6e6e6e" stroke-width="1"/></g>
<g><line x1="12.0" y1="318.5" x2="122.0" y2="318.5" stroke="#2fa86a" stroke-width="1.2"/><line x1="122.0" y1="350.5" x2="125.3" y2="350.5" stroke="#2a4aa8" stroke-width="1.2"/><line x1="125.3" y1="318.5" x2="129.1" y2="318.5" stroke="#2fa86a" stroke-width="1.2"/><line x1="129.1" y1="350.5" x2="132.9" y2="350.5" stroke="#2a4aa8" stroke-width="1.2"/><line x1="132.9" y1="318.5" x2="136.7" y2="318.5" stroke="#2fa86a" stroke-width="1.2"/><line x1="136.7" y1="350.5" x2="139.9" y2="350.5" stroke="#2a4aa8" stroke-width="1.2"/><line x1="139.9" y1="318.5" x2="143.7" y2="318.5" stroke="#2fa86a" stroke-width="1.2"/><line x1="143.7" y1="350.5" x2="147.5" y2="350.5" stroke="#2a4aa8" stroke-width="1.2"/><line x1="147.5" y1="318.5" x2="151.3" y2="318.5" stroke="#2fa86a" stroke-width="1.2"/><line x1="151.3" y1="350.5" x2="154.9" y2="350.5" stroke="#2a4aa8" stroke-width="1.2"/><line x1="154.9" y1="318.5" x2="158.7" y2="318.5" stroke="#2fa86a" stroke-width="1.2"/><line x1="158.7" y1="350.5" x2="162.3" y2="350.5" stroke="#2a4aa8" stroke-width="1.2"/><line x1="162.3" y1="318.5" x2="166.1" y2="318.5" stroke="#2fa86a" stroke-width="1.2"/><line x1="166.1" y1="350.5" x2="169.3" y2="350.5" stroke="#2a4aa8" stroke-width="1.2"/><line x1="169.3" y1="318.5" x2="173.1" y2="318.5" stroke="#2fa86a" stroke-width="1.2"/><line x1="173.1" y1="350.5" x2="176.8" y2="350.5" stroke="#2a4aa8" stroke-width="1.2"/><line x1="176.8" y1="318.5" x2="180.6" y2="318.5" stroke="#2fa86a" stroke-width="1.2"/><line x1="180.6" y1="350.5" x2="184.1" y2="350.5" stroke="#2a4aa8" stroke-width="1.2"/><line x1="184.1" y1="318.5" x2="187.9" y2="318.5" stroke="#2fa86a" stroke-width="1.2"/><line x1="187.9" y1="350.5" x2="194.6" y2="350.5" stroke="#2a4aa8" stroke-width="1.2"/><line x1="194.6" y1="318.5" x2="198.4" y2="318.5" stroke="#2fa86a" stroke-width="1.2"/><line x1="198.4" y1="350.5" x2="201.6" y2="350.5" stroke="#2a4aa8" stroke-width="1.2"/><line x1="201.6" y1="318.5" x2="205.4" y2="318.5" stroke="#2fa86a" stroke-width="1.2"/><line x1="205.4" y1="350.5" x2="209.1" y2="350.5" stroke="#2a4aa8" stroke-width="1.2"/><line x1="209.1" y1="318.5" x2="212.9" y2="318.5" stroke="#2fa86a" stroke-width="1.2"/><line x1="212.9" y1="350.5" x2="216.1" y2="350.5" stroke="#2a4aa8" stroke-width="1.2"/><line x1="216.1" y1="318.5" x2="219.9" y2="318.5" stroke="#2fa86a" stroke-width="1.2"/><line x1="219.9" y1="350.5" x2="223.8" y2="350.5" stroke="#2a4aa8" stroke-width="1.2"/><line x1="223.8" y1="318.5" x2="227.6" y2="318.5" stroke="#2fa86a" stroke-width="1.2"/><line x1="227.6" y1="350.5" x2="231.1" y2="350.5" stroke="#2a4aa8" stroke-width="1.2"/><line x1="231.1" y1="318.5" x2="234.9" y2="318.5" stroke="#2fa86a" stroke-width="1.2"/><line x1="234.9" y1="350.5" x2="238.6" y2="350.5" stroke="#2a4aa8" stroke-width="1.2"/><line x1="238.6" y1="318.5" x2="242.4" y2="318.5" stroke="#2fa86a" stroke-width="1.2"/><line x1="242.4" y1="350.5" x2="245.6" y2="350.5" stroke="#2a4aa8" stroke-width="1.2"/><line x1="245.6" y1="318.5" x2="249.4" y2="318.5" stroke="#2fa86a" stroke-width="1.2"/><line x1="249.4" y1="350.5" x2="253.1" y2="350.5" stroke="#2a4aa8" stroke-width="1.2"/><line x1="253.1" y1="318.5" x2="256.9" y2="318.5" stroke="#2fa86a" stroke-width="1.2"/><line x1="256.9" y1="350.5" x2="262.6" y2="350.5" stroke="#2a4aa8" stroke-width="1.2"/><line x1="262.6" y1="318.5" x2="266.4" y2="318.5" stroke="#2fa86a" stroke-width="1.2"/><line x1="266.4" y1="350.5" x2="269.9" y2="350.5" stroke="#2a4aa8" stroke-width="1.2"/><line x1="269.9" y1="318.5" x2="273.7" y2="318.5" stroke="#2fa86a" stroke-width="1.2"/><line x1="273.7" y1="350.5" x2="277.1" y2="350.5" stroke="#2a4aa8" stroke-width="1.2"/><line x1="277.1" y1="318.5" x2="280.9" y2="318.5" stroke="#2fa86a" stroke-width="1.2"/><line x1="280.9" y1="350.5" x2="284.8" y2="350.5" stroke="#2a4aa8" stroke-width="1.2"/><line x1="284.8" y1="318.5" x2="288.6" y2="318.5" stroke="#2fa86a" stroke-width="1.2"/><line x1="288.6" y1="350.5" x2="292.1" y2="350.5" stroke="#2a4aa8" stroke-width="1.2"/><line x1="292.1" y1="318.5" x2="295.9" y2="318.5" stroke="#2fa86a" stroke-width="1.2"/><line x1="295.9" y1="350.5" x2="299.3" y2="350.5" stroke="#2a4aa8" stroke-width="1.2"/><line x1="299.3" y1="318.5" x2="303.1" y2="318.5" stroke="#2fa86a" stroke-width="1.2"/><line x1="303.1" y1="350.5" x2="306.6" y2="350.5" stroke="#2a4aa8" stroke-width="1.2"/><line x1="306.6" y1="318.5" x2="310.4" y2="318.5" stroke="#2fa86a" stroke-width="1.2"/><line x1="310.4" y1="350.5" x2="313.8" y2="350.5" stroke="#2a4aa8" stroke-width="1.2"/><line x1="313.8" y1="318.5" x2="317.6" y2="318.5" stroke="#2fa86a" stroke-width="1.2"/><line x1="317.6" y1="350.5" x2="321.1" y2="350.5" stroke="#2a4aa8" stroke-width="1.2"/><line x1="321.1" y1="318.5" x2="324.9" y2="318.5" stroke="#2fa86a" stroke-width="1.2"/><line x1="324.9" y1="350.5" x2="330.6" y2="350.5" stroke="#2a4aa8" stroke-width="1.2"/><line x1="330.6" y1="318.5" x2="334.4" y2="318.5" stroke="#2fa86a" stroke-width="1.2"/><line x1="334.4" y1="350.5" x2="338.1" y2="350.5" stroke="#2a4aa8" stroke-width="1.2"/><line x1="338.1" y1="318.5" x2="341.9" y2="318.5" stroke="#2fa86a" stroke-width="1.2"/><line x1="341.9" y1="350.5" x2="345.1" y2="350.5" stroke="#2a4aa8" stroke-width="1.2"/><line x1="345.1" y1="318.5" x2="348.9" y2="318.5" stroke="#2fa86a" stroke-width="1.2"/><line x1="348.9" y1="350.5" x2="352.6" y2="350.5" stroke="#2a4aa8" stroke-width="1.2"/><line x1="352.6" y1="318.5" x2="356.4" y2="318.5" stroke="#2fa86a" stroke-width="1.2"/><line x1="356.4" y1="350.5" x2="359.6" y2="350.5" stroke="#2a4aa8" stroke-width="1.2"/><line x1="359.6" y1="318.5" x2="363.4" y2="318.5" stroke="#2fa86a" stroke-width="1.2"/><line x1="363.4" y1="350.5" x2="367.1" y2="350.5" stroke="#2a4aa8" stroke-width="1.2"/><line x1="367.1" y1="318.5" x2="370.9" y2="318.5" stroke="#2fa86a" stroke-width="1.2"/><line x1="370.9" y1="350.5" x2="374.6" y2="350.5" stroke="#2a4aa8" stroke-width="1.2"/><line x1="374.6" y1="318.5" x2="378.4" y2="318.5" stroke="#2fa86a" stroke-width="1.2"/><line x1="378.4" y1="350.5" x2="382.1" y2="350.5" stroke="#2a4aa8" stroke-width="1.2"/><line x1="382.1" y1="318.5" x2="385.9" y2="318.5" stroke="#2fa86a" stroke-width="1.2"/><line x1="385.9" y1="350.5" x2="389.1" y2="350.5" stroke="#2a4aa8" stroke-width="1.2"/><line x1="389.1" y1="318.5" x2="392.9" y2="318.5" stroke="#2fa86a" stroke-width="1.2"/><line x1="392.9" y1="350.5" x2="398.3" y2="350.5" stroke="#2a4aa8" stroke-width="1.2"/><line x1="398.3" y1="318.5" x2="402.1" y2="318.5" stroke="#2fa86a" stroke-width="1.2"/><line x1="402.1" y1="350.5" x2="405.9" y2="350.5" stroke="#2a4aa8" stroke-width="1.2"/><line x1="405.9" y1="318.5" x2="409.7" y2="318.5" stroke="#2fa86a" stroke-width="1.2"/><line x1="409.7" y1="350.5" x2="413.1" y2="350.5" stroke="#2a4aa8" stroke-width="1.2"/><line x1="413.1" y1="318.5" x2="416.9" y2="318.5" stroke="#2fa86a" stroke-width="1.2"/><line x1="416.9" y1="350.5" x2="420.8" y2="350.5" stroke="#2a4aa8" stroke-width="1.2"/><line x1="420.8" y1="318.5" x2="424.6" y2="318.5" stroke="#2fa86a" stroke-width="1.2"/><line x1="424.6" y1="350.5" x2="427.9" y2="350.5" stroke="#2a4aa8" stroke-width="1.2"/><line x1="427.9" y1="318.5" x2="431.7" y2="318.5" stroke="#2fa86a" stroke-width="1.2"/><line x1="431.7" y1="350.5" x2="435.1" y2="350.5" stroke="#2a4aa8" stroke-width="1.2"/><line x1="435.1" y1="318.5" x2="438.9" y2="318.5" stroke="#2fa86a" stroke-width="1.2"/><line x1="438.9" y1="350.5" x2="442.4" y2="350.5" stroke="#2a4aa8" stroke-width="1.2"/><line x1="442.4" y1="318.5" x2="446.2" y2="318.5" stroke="#2fa86a" stroke-width="1.2"/><line x1="446.2" y1="350.5" x2="449.9" y2="350.5" stroke="#2a4aa8" stroke-width="1.2"/><line x1="449.9" y1="318.5" x2="453.7" y2="318.5" stroke="#2fa86a" stroke-width="1.2"/><line x1="453.7" y1="350.5" x2="457.1" y2="350.5" stroke="#2a4aa8" stroke-width="1.2"/><line x1="457.1" y1="318.5" x2="460.9" y2="318.5" stroke="#2fa86a" stroke-width="1.2"/><line x1="460.9" y1="350.5" x2="466.5" y2="350.5" stroke="#2a4aa8" stroke-width="1.2"/><line x1="466.5" y1="318.5" x2="598.5" y2="318.5" stroke="#2fa86a" stroke-width="1.2"/><line x1="122.5" y1="318.5" x2="122.5" y2="350.5" stroke="#6e6e6e" stroke-width="1"/><line x1="125.5" y1="318.5" x2="125.5" y2="350.5" stroke="#6e6e6e" stroke-width="1"/><line x1="129.5" y1="318.5" x2="129.5" y2="350.5" stroke="#6e6e6e" stroke-width="1"/><line x1="132.5" y1="318.5" x2="132.5" y2="350.5" stroke="#6e6e6e" stroke-width="1"/><line x1="136.5" y1="318.5" x2="136.5" y2="350.5" stroke="#6e6e6e" stroke-width="1"/><line x1="139.5" y1="318.5" x2="139.5" y2="350.5" stroke="#6e6e6e" stroke-width="1"/><line x1="143.5" y1="318.5" x2="143.5" y2="350.5" stroke="#6e6e6e" stroke-width="1"/><line x1="147.5" y1="318.5" x2="147.5" y2="350.5" stroke="#6e6e6e" stroke-width="1"/><line x1="151.5" y1="318.5" x2="151.5" y2="350.5" stroke="#6e6e6e" stroke-width="1"/><line x1="154.5" y1="318.5" x2="154.5" y2="350.5" stroke="#6e6e6e" stroke-width="1"/><line x1="158.5" y1="318.5" x2="158.5" y2="350.5" stroke="#6e6e6e" stroke-width="1"/><line x1="162.5" y1="318.5" x2="162.5" y2="350.5" stroke="#6e6e6e" stroke-width="1"/><line x1="166.5" y1="318.5" x2="166.5" y2="350.5" stroke="#6e6e6e" stroke-width="1"/><line x1="169.5" y1="318.5" x2="169.5" y2="350.5" stroke="#6e6e6e" stroke-width="1"/><line x1="173.5" y1="318.5" x2="173.5" y2="350.5" stroke="#6e6e6e" stroke-width="1"/><line x1="176.5" y1="318.5" x2="176.5" y2="350.5" stroke="#6e6e6e" stroke-width="1"/><line x1="180.5" y1="318.5" x2="180.5" y2="350.5" stroke="#6e6e6e" stroke-width="1"/><line x1="184.5" y1="318.5" x2="184.5" y2="350.5" stroke="#6e6e6e" stroke-width="1"/><line x1="187.5" y1="318.5" x2="187.5" y2="350.5" stroke="#6e6e6e" stroke-width="1"/><line x1="194.5" y1="318.5" x2="194.5" y2="350.5" stroke="#6e6e6e" stroke-width="1"/><line x1="198.5" y1="318.5" x2="198.5" y2="350.5" stroke="#6e6e6e" stroke-width="1"/><line x1="201.5" y1="318.5" x2="201.5" y2="350.5" stroke="#6e6e6e" stroke-width="1"/><line x1="205.5" y1="318.5" x2="205.5" y2="350.5" stroke="#6e6e6e" stroke-width="1"/><line x1="209.5" y1="318.5" x2="209.5" y2="350.5" stroke="#6e6e6e" stroke-width="1"/><line x1="212.5" y1="318.5" x2="212.5" y2="350.5" stroke="#6e6e6e" stroke-width="1"/><line x1="216.5" y1="318.5" x2="216.5" y2="350.5" stroke="#6e6e6e" stroke-width="1"/><line x1="219.5" y1="318.5" x2="219.5" y2="350.5" stroke="#6e6e6e" stroke-width="1"/><line x1="223.5" y1="318.5" x2="223.5" y2="350.5" stroke="#6e6e6e" stroke-width="1"/><line x1="227.5" y1="318.5" x2="227.5" y2="350.5" stroke="#6e6e6e" stroke-width="1"/><line x1="231.5" y1="318.5" x2="231.5" y2="350.5" stroke="#6e6e6e" stroke-width="1"/><line x1="234.5" y1="318.5" x2="234.5" y2="350.5" stroke="#6e6e6e" stroke-width="1"/><line x1="238.5" y1="318.5" x2="238.5" y2="350.5" stroke="#6e6e6e" stroke-width="1"/><line x1="242.5" y1="318.5" x2="242.5" y2="350.5" stroke="#6e6e6e" stroke-width="1"/><line x1="245.5" y1="318.5" x2="245.5" y2="350.5" stroke="#6e6e6e" stroke-width="1"/><line x1="249.5" y1="318.5" x2="249.5" y2="350.5" stroke="#6e6e6e" stroke-width="1"/><line x1="253.5" y1="318.5" x2="253.5" y2="350.5" stroke="#6e6e6e" stroke-width="1"/><line x1="256.5" y1="318.5" x2="256.5" y2="350.5" stroke="#6e6e6e" stroke-width="1"/><line x1="262.5" y1="318.5" x2="262.5" y2="350.5" stroke="#6e6e6e" stroke-width="1"/><line x1="266.5" y1="318.5" x2="266.5" y2="350.5" stroke="#6e6e6e" stroke-width="1"/><line x1="269.5" y1="318.5" x2="269.5" y2="350.5" stroke="#6e6e6e" stroke-width="1"/><line x1="273.5" y1="318.5" x2="273.5" y2="350.5" stroke="#6e6e6e" stroke-width="1"/><line x1="277.5" y1="318.5" x2="277.5" y2="350.5" stroke="#6e6e6e" stroke-width="1"/><line x1="280.5" y1="318.5" x2="280.5" y2="350.5" stroke="#6e6e6e" stroke-width="1"/><line x1="284.5" y1="318.5" x2="284.5" y2="350.5" stroke="#6e6e6e" stroke-width="1"/><line x1="288.5" y1="318.5" x2="288.5" y2="350.5" stroke="#6e6e6e" stroke-width="1"/><line x1="292.5" y1="318.5" x2="292.5" y2="350.5" stroke="#6e6e6e" stroke-width="1"/><line x1="295.5" y1="318.5" x2="295.5" y2="350.5" stroke="#6e6e6e" stroke-width="1"/><line x1="299.5" y1="318.5" x2="299.5" y2="350.5" stroke="#6e6e6e" stroke-width="1"/><line x1="303.5" y1="318.5" x2="303.5" y2="350.5" stroke="#6e6e6e" stroke-width="1"/><line x1="306.5" y1="318.5" x2="306.5" y2="350.5" stroke="#6e6e6e" stroke-width="1"/><line x1="310.5" y1="318.5" x2="310.5" y2="350.5" stroke="#6e6e6e" stroke-width="1"/><line x1="313.5" y1="318.5" x2="313.5" y2="350.5" stroke="#6e6e6e" stroke-width="1"/><line x1="317.5" y1="318.5" x2="317.5" y2="350.5" stroke="#6e6e6e" stroke-width="1"/><line x1="321.5" y1="318.5" x2="321.5" y2="350.5" stroke="#6e6e6e" stroke-width="1"/><line x1="324.5" y1="318.5" x2="324.5" y2="350.5" stroke="#6e6e6e" stroke-width="1"/><line x1="330.5" y1="318.5" x2="330.5" y2="350.5" stroke="#6e6e6e" stroke-width="1"/><line x1="334.5" y1="318.5" x2="334.5" y2="350.5" stroke="#6e6e6e" stroke-width="1"/><line x1="338.5" y1="318.5" x2="338.5" y2="350.5" stroke="#6e6e6e" stroke-width="1"/><line x1="341.5" y1="318.5" x2="341.5" y2="350.5" stroke="#6e6e6e" stroke-width="1"/><line x1="345.5" y1="318.5" x2="345.5" y2="350.5" stroke="#6e6e6e" stroke-width="1"/><line x1="348.5" y1="318.5" x2="348.5" y2="350.5" stroke="#6e6e6e" stroke-width="1"/><line x1="352.5" y1="318.5" x2="352.5" y2="350.5" stroke="#6e6e6e" stroke-width="1"/><line x1="356.5" y1="318.5" x2="356.5" y2="350.5" stroke="#6e6e6e" stroke-width="1"/><line x1="359.5" y1="318.5" x2="359.5" y2="350.5" stroke="#6e6e6e" stroke-width="1"/><line x1="363.5" y1="318.5" x2="363.5" y2="350.5" stroke="#6e6e6e" stroke-width="1"/><line x1="367.5" y1="318.5" x2="367.5" y2="350.5" stroke="#6e6e6e" stroke-width="1"/><line x1="370.5" y1="318.5" x2="370.5" y2="350.5" stroke="#6e6e6e" stroke-width="1"/><line x1="374.5" y1="318.5" x2="374.5" y2="350.5" stroke="#6e6e6e" stroke-width="1"/><line x1="378.5" y1="318.5" x2="378.5" y2="350.5" stroke="#6e6e6e" stroke-width="1"/><line x1="382.5" y1="318.5" x2="382.5" y2="350.5" stroke="#6e6e6e" stroke-width="1"/><line x1="385.5" y1="318.5" x2="385.5" y2="350.5" stroke="#6e6e6e" stroke-width="1"/><line x1="389.5" y1="318.5" x2="389.5" y2="350.5" stroke="#6e6e6e" stroke-width="1"/><line x1="392.5" y1="318.5" x2="392.5" y2="350.5" stroke="#6e6e6e" stroke-width="1"/><line x1="398.5" y1="318.5" x2="398.5" y2="350.5" stroke="#6e6e6e" stroke-width="1"/><line x1="402.5" y1="318.5" x2="402.5" y2="350.5" stroke="#6e6e6e" stroke-width="1"/><line x1="405.5" y1="318.5" x2="405.5" y2="350.5" stroke="#6e6e6e" stroke-width="1"/><line x1="409.5" y1="318.5" x2="409.5" y2="350.5" stroke="#6e6e6e" stroke-width="1"/><line x1="413.5" y1="318.5" x2="413.5" y2="350.5" stroke="#6e6e6e" stroke-width="1"/><line x1="416.5" y1="318.5" x2="416.5" y2="350.5" stroke="#6e6e6e" stroke-width="1"/><line x1="420.5" y1="318.5" x2="420.5" y2="350.5" stroke="#6e6e6e" stroke-width="1"/><line x1="424.5" y1="318.5" x2="424.5" y2="350.5" stroke="#6e6e6e" stroke-width="1"/><line x1="427.5" y1="318.5" x2="427.5" y2="350.5" stroke="#6e6e6e" stroke-width="1"/><line x1="431.5" y1="318.5" x2="431.5" y2="350.5" stroke="#6e6e6e" stroke-width="1"/><line x1="435.5" y1="318.5" x2="435.5" y2="350.5" stroke="#6e6e6e" stroke-width="1"/><line x1="438.5" y1="318.5" x2="438.5" y2="350.5" stroke="#6e6e6e" stroke-width="1"/><line x1="442.5" y1="318.5" x2="442.5" y2="350.5" stroke="#6e6e6e" stroke-width="1"/><line x1="446.5" y1="318.5" x2="446.5" y2="350.5" stroke="#6e6e6e" stroke-width="1"/><line x1="449.5" y1="318.5" x2="449.5" y2="350.5" stroke="#6e6e6e" stroke-width="1"/><line x1="453.5" y1="318.5" x2="453.5" y2="350.5" stroke="#6e6e6e" stroke-width="1"/><line x1="457.5" y1="318.5" x2="457.5" y2="350.5" stroke="#6e6e6e" stroke-width="1"/><line x1="460.5" y1="318.5" x2="460.5" y2="350.5" stroke="#6e6e6e" stroke-width="1"/><line x1="466.5" y1="318.5" x2="466.5" y2="350.5" stroke="#6e6e6e" stroke-width="1"/></g>
<g><line x1="118.5" y1="22.3" x2="118.5" y2="115.3" stroke="#0a4046" stroke-width="1"/><line x1="124.5" y1="22.3" x2="124.5" y2="115.3" stroke="#0a4046" stroke-width="1"/><line x1="131.5" y1="22.3" x2="131.5" y2="115.3" stroke="#0a4046" stroke-width="1"/><line x1="139.5" y1="22.3" x2="139.5" y2="115.3" stroke="#0a4046" stroke-width="1"/><line x1="146.5" y1="22.3" x2="146.5" y2="115.3" stroke="#0a4046" stroke-width="1"/><line x1="176.5" y1="22.3" x2="176.5" y2="115.3" stroke="#0a4046" stroke-width="1"/><line x1="181.5" y1="22.3" x2="181.5" y2="115.3" stroke="#0a4046" stroke-width="1"/><line x1="206.5" y1="22.3" x2="206.5" y2="115.3" stroke="#0a4046" stroke-width="1"/><line x1="213.5" y1="22.3" x2="213.5" y2="115.3" stroke="#0a4046" stroke-width="1"/><line x1="221.5" y1="22.3" x2="221.5" y2="115.3" stroke="#0a4046" stroke-width="1"/><line x1="243.5" y1="22.3" x2="243.5" y2="115.3" stroke="#0a4046" stroke-width="1"/><line x1="250.5" y1="22.3" x2="250.5" y2="115.3" stroke="#0a4046" stroke-width="1"/><line x1="251.5" y1="22.3" x2="251.5" y2="115.3" stroke="#0a4046" stroke-width="1"/><line x1="274.5" y1="22.3" x2="274.5" y2="115.3" stroke="#0a4046" stroke-width="1"/><line x1="289.5" y1="22.3" x2="289.5" y2="115.3" stroke="#0a4046" stroke-width="1"/><line x1="318.5" y1="22.3" x2="318.5" y2="115.3" stroke="#0a4046" stroke-width="1"/><line x1="320.5" y1="22.3" x2="320.5" y2="115.3" stroke="#0a4046" stroke-width="1"/><line x1="342.5" y1="22.3" x2="342.5" y2="115.3" stroke="#0a4046" stroke-width="1"/><line x1="357.5" y1="22.3" x2="357.5" y2="115.3" stroke="#0a4046" stroke-width="1"/><line x1="372.5" y1="22.3" x2="372.5" y2="115.3" stroke="#0a4046" stroke-width="1"/><line x1="379.5" y1="22.3" x2="379.5" y2="115.3" stroke="#0a4046" stroke-width="1"/><line x1="386.5" y1="22.3" x2="386.5" y2="115.3" stroke="#0a4046" stroke-width="1"/><line x1="388.5" y1="22.3" x2="388.5" y2="115.3" stroke="#0a4046" stroke-width="1"/><line x1="410.5" y1="22.3" x2="410.5" y2="115.3" stroke="#0a4046" stroke-width="1"/><line x1="425.5" y1="22.3" x2="425.5" y2="115.3" stroke="#0a4046" stroke-width="1"/><line x1="432.5" y1="22.3" x2="432.5" y2="115.3" stroke="#0a4046" stroke-width="1"/><line x1="440.5" y1="22.3" x2="440.5" y2="115.3" stroke="#0a4046" stroke-width="1"/><line x1="454.5" y1="22.3" x2="454.5" y2="115.3" stroke="#0a4046" stroke-width="1"/><line x1="466.5" y1="22.3" x2="466.5" y2="115.3" stroke="#0a4046" stroke-width="1"/><line x1="471.5" y1="22.3" x2="471.5" y2="115.3" stroke="#0a4046" stroke-width="1"/><line x1="12.0" y1="20.3" x2="117.8" y2="20.3" stroke="#0f707a" stroke-width="5.2"/><path d="M12.0,17.7v-0.8M13.3,22.9v0.4M14.2,22.9v0.4M14.9,17.7v-1.0M15.5,22.9v1.0M16.3,22.9v0.7M17.8,17.7v-1.2M19.4,22.9v0.4M20.3,17.7v-0.5M21.2,17.7v-1.6M22.4,17.7v-1.3M23.5,17.7v-0.4M24.3,17.7v-1.4M25.2,17.7v-1.2M26.1,22.9v1.6M27.0,22.9v1.2M28.5,17.7v-1.5M30.0,17.7v-0.5M31.4,17.7v-0.5M32.0,22.9v1.4M33.2,17.7v-1.7M34.5,22.9v1.3M35.6,22.9v1.7M36.6,17.7v-1.4M37.9,22.9v1.3M39.4,17.7v-0.8M40.6,17.7v-0.3M41.4,17.7v-0.5M42.8,17.7v-0.5M43.8,17.7v-1.7M44.8,22.9v1.2M46.2,17.7v-1.7M47.2,22.9v0.9M48.8,17.7v-0.5M49.6,17.7v-0.7M50.8,17.7v-0.7M51.8,22.9v0.9M53.4,22.9v1.4M54.6,17.7v-1.4M56.1,22.9v1.6M57.5,17.7v-0.9M58.2,17.7v-1.3M58.9,17.7v-0.6M59.8,17.7v-0.4M60.6,17.7v-0.5M61.2,22.9v1.7M61.9,17.7v-0.7M62.9,22.9v0.5M64.5,17.7v-1.1M65.2,17.7v-0.5M66.0,17.7v-1.6M66.7,22.9v1.8M67.4,17.7v-1.2M68.5,22.9v1.9M69.8,17.7v-0.7M70.6,22.9v1.6M72.0,17.7v-0.8M73.4,22.9v1.9M74.8,22.9v1.6M75.6,17.7v-1.1M76.3,17.7v-0.3M77.1,22.9v1.4M78.2,22.9v1.8M79.7,17.7v-0.9M80.5,17.7v-0.6M81.8,22.9v1.8M82.9,22.9v1.4M83.5,22.9v1.4M84.9,17.7v-1.5M85.7,17.7v-1.6M87.1,17.7v-1.9M88.1,22.9v1.8M88.9,17.7v-0.5M90.4,17.7v-1.6M91.8,22.9v1.9M92.8,17.7v-1.2M93.4,22.9v1.9M94.5,17.7v-1.8M96.0,17.7v-1.6M96.8,17.7v-0.8M98.0,17.7v-0.7M98.7,17.7v-1.8M99.8,22.9v1.2M100.8,22.9v1.8M101.9,17.7v-1.1M103.0,17.7v-0.6M104.4,17.7v-0.6M105.7,17.7v-1.2M106.8,22.9v1.2M107.5,17.7v-1.2M108.4,22.9v1.6M109.6,22.9v1.5M110.6,22.9v1.3M111.7,17.7v-1.4M112.9,22.9v1.1M114.2,22.9v1.7M115.0,22.9v1.2M116.5,17.7v-0.5M117.5,17.7v-0.4" stroke="#0f707a" stroke-width="0.9" opacity="0.8"/><line x1="12.0" y1="20.3" x2="117.8" y2="20.3" stroke="#38dfec" stroke-width="3.2"/><path d="M12.0,21.9v1.0M13.5,21.9v0.5M14.8,21.9v0.4M16.3,21.9v0.5M17.3,21.9v0.8M18.8,18.7v-0.5M19.9,18.7v-0.6M20.8,18.7v-1.0M21.9,18.7v-0.7M22.9,21.9v0.9M23.5,21.9v1.3M25.1,18.7v-0.4M25.8,18.7v-1.1M26.5,21.9v0.7M27.9,18.7v-0.6M29.4,21.9v0.9M30.1,21.9v0.4M31.1,21.9v0.4M32.4,18.7v-1.1M33.8,21.9v0.4M34.9,21.9v0.6M36.4,18.7v-0.6M37.5,18.7v-0.5M38.3,18.7v-0.3M39.2,21.9v0.6M40.1,18.7v-0.8M41.0,18.7v-0.3M41.7,21.9v1.0M42.4,21.9v0.8M43.2,18.7v-1.1M44.2,18.7v-1.1M45.4,21.9v1.0M46.3,21.9v1.1M47.5,18.7v-0.7M48.2,18.7v-0.4M49.5,18.7v-0.6M50.2,21.9v1.1M51.5,18.7v-0.6M52.4,18.7v-0.8M53.4,21.9v0.6M55.0,18.7v-0.8M56.6,18.7v-0.6M57.2,18.7v-0.7M58.3,21.9v0.5M58.9,18.7v-0.6M59.9,18.7v-0.3M60.8,21.9v0.5M61.9,21.9v1.0M63.2,18.7v-1.2M64.1,18.7v-1.3M65.5,18.7v-0.9M66.9,21.9v1.2M68.2,18.7v-1.1M69.4,21.9v0.8M70.8,21.9v1.1M72.3,21.9v1.0M73.1,18.7v-0.3M74.0,21.9v0.4M75.2,21.9v0.9M76.5,18.7v-0.8M77.9,21.9v1.0M79.0,18.7v-0.9M80.4,18.7v-0.5M81.2,18.7v-1.0M82.6,18.7v-1.3M83.5,21.9v0.8M84.9,21.9v0.9M85.6,18.7v-0.4M86.9,21.9v0.6M87.5,18.7v-0.4M88.8,21.9v1.0M89.7,18.7v-0.8M90.8,21.9v0.4M91.6,21.9v1.3M92.2,21.9v0.7M93.8,18.7v-0.7M94.6,18.7v-1.2M95.8,21.9v0.4M97.3,21.9v0.4M98.4,21.9v1.2M99.2,18.7v-1.2M99.9,18.7v-0.3M100.9,18.7v-0.6M101.9,21.9v0.6M102.5,21.9v1.0M103.2,21.9v1.2M104.7,18.7v-0.6M105.7,21.9v1.3M106.6,18.7v-0.7M107.3,21.9v0.4M108.2,18.7v-1.2M109.0,18.7v-0.8M110.0,21.9v1.2M111.4,21.9v0.9M113.0,21.9v0.8M113.6,18.7v-1.0M115.0,18.7v-0.9M115.6,18.7v-1.2M116.7,18.7v-0.6" stroke="#38dfec" stroke-width="0.9" opacity="0.8"/><line x1="118.6" y1="105.3" x2="124.8" y2="105.3" stroke="#108088" stroke-width="5.6"/><path d="M118.6,102.5v-1.3M119.9,108.1v0.6M120.9,102.5v-0.5M121.7,102.5v-1.2M122.5,108.1v1.2M123.5,102.5v-0.4M124.2,102.5v-0.6" stroke="#108088" stroke-width="0.9" opacity="0.8"/><line x1="118.6" y1="105.3" x2="124.8" y2="105.3" stroke="#38dfec" stroke-width="3.4"/><path d="M118.6,107.0v0.4M120.1,103.6v-0.7M121.1,103.6v-0.6M122.0,103.6v-0.3M123.6,107.0v0.4" stroke="#38dfec" stroke-width="0.9" opacity="0.8"/><path d="M125.5,22.1 L125.9,16.6 L127.1,15.1 L128.3,17.3 L130.2,16.5 L131.6,15.9 L131.6,21.9 L130.0,22.7 L127.1,21.5 Z" fill="#38dfec" stroke="#118088" stroke-width="1.2" stroke-linejoin="round"/><path d="M125.3,30.3 C125.4,24.3 125.5,22.3 125.7,20.3" fill="none" stroke="#137880" stroke-width="1.2"/><line x1="131.6" y1="17.3" x2="131.6" y2="24.3" stroke="#38dfec" stroke-width="1" opacity="0.6"/><line x1="131.5" y1="24.3" x2="131.5" y2="32.3" stroke="#137880" stroke-width="1"/><line x1="131.6" y1="105.3" x2="139.3" y2="105.3" stroke="#108088" stroke-width="5.6"/><path d="M131.6,102.5v-1.1M132.5,102.5v-0.5M133.5,108.1v1.2M135.0,102.5v-0.3M136.3,102.5v-1.2M137.5,102.5v-0.3M139.0,108.1v1.1" stroke="#108088" stroke-width="0.9" opacity="0.8"/><line x1="131.6" y1="105.3" x2="139.3" y2="105.3" stroke="#38dfec" stroke-width="3.4"/><path d="M131.6,103.6v-0.4M132.4,107.0v0.6M133.9,107.0v0.7M135.3,107.0v0.5M135.9,103.6v-0.7M137.4,103.6v-0.6M138.1,107.0v0.4" stroke="#38dfec" stroke-width="0.9" opacity="0.8"/><path d="M140.0,22.1 L140.4,16.6 L141.6,15.1 L142.8,17.3 L144.9,16.5 L146.3,15.9 L146.3,21.9 L144.7,22.7 L141.6,21.5 Z" fill="#38dfec" stroke="#118088" stroke-width="1.2" stroke-linejoin="round"/><path d="M139.8,30.3 C139.9,24.3 140.0,22.3 140.2,20.3" fill="none" stroke="#137880" stroke-width="1.2"/><line x1="146.3" y1="17.3" x2="146.3" y2="24.3" stroke="#38dfec" stroke-width="1" opacity="0.6"/><line x1="146.5" y1="24.3" x2="146.5" y2="32.3" stroke="#137880" stroke-width="1"/><line x1="146.3" y1="105.3" x2="176.3" y2="105.3" stroke="#108088" stroke-width="5.6"/><path d="M146.3,102.5v-0.4M147.4,102.5v-0.9M148.2,102.5v-0.9M149.1,108.1v0.8M150.4,102.5v-1.2M151.2,108.1v0.5M152.5,102.5v-0.6M153.6,102.5v-1.0M154.5,108.1v1.0M155.3,102.5v-0.3M156.3,102.5v-1.0M157.7,108.1v1.0M158.5,102.5v-1.3M160.0,102.5v-0.5M161.3,108.1v0.6M162.4,102.5v-0.5M163.4,108.1v1.0M164.2,102.5v-0.7M165.8,102.5v-0.4M166.4,108.1v0.7M167.9,108.1v1.0M169.4,102.5v-0.6M171.0,102.5v-1.0M172.2,102.5v-0.7M173.2,102.5v-0.5M174.0,108.1v0.6M174.8,102.5v-1.2M175.7,108.1v1.1" stroke="#108088" stroke-width="0.9" opacity="0.8"/><line x1="146.3" y1="105.3" x2="176.3" y2="105.3" stroke="#38dfec" stroke-width="3.4"/><path d="M146.3,103.6v-0.3M147.3,103.6v-0.8M148.2,103.6v-0.7M149.2,107.0v0.7M149.9,103.6v-0.3M151.4,107.0v0.4M152.9,103.6v-0.5M154.5,103.6v-0.6M155.8,103.6v-0.5M156.4,107.0v0.7M157.6,103.6v-0.8M158.5,107.0v0.5M160.0,103.6v-0.5M161.0,107.0v0.5M161.8,107.0v0.7M163.2,107.0v0.7M164.2,103.6v-0.5M165.6,103.6v-0.3M166.9,103.6v-0.4M167.5,103.6v-0.6M169.1,107.0v0.7M170.0,103.6v-0.3M171.1,103.6v-0.7M171.9,107.0v0.5M173.2,107.0v0.7M174.5,107.0v0.4M175.3,103.6v-0.6" stroke="#38dfec" stroke-width="0.9" opacity="0.8"/><path d="M177.0,22.1 L177.4,16.6 L178.6,15.1 L179.8,17.3 L179.9,16.5 L181.3,15.9 L181.3,21.9 L179.7,22.7 L178.6,21.5 Z" fill="#38dfec" stroke="#118088" stroke-width="1.2" stroke-linejoin="round"/><path d="M176.8,30.3 C176.9,24.3 177.0,22.3 177.2,20.3" fill="none" stroke="#137880" stroke-width="1.2"/><line x1="181.3" y1="17.3" x2="181.3" y2="24.3" stroke="#38dfec" stroke-width="1" opacity="0.6"/><line x1="181.5" y1="24.3" x2="181.5" y2="32.3" stroke="#137880" stroke-width="1"/><line x1="181.3" y1="105.3" x2="206.5" y2="105.3" stroke="#108088" stroke-width="5.6"/><path d="M181.3,102.5v-0.5M182.1,108.1v0.5M183.3,102.5v-0.6M184.9,102.5v-0.8M186.3,108.1v0.9M187.0,108.1v0.8M188.5,102.5v-1.2M189.4,102.5v-0.4M190.9,108.1v0.9M191.9,102.5v-1.1M192.8,108.1v1.1M193.5,108.1v0.9M194.3,102.5v-0.7M195.1,108.1v0.5M196.3,102.5v-0.5M197.3,102.5v-1.0M198.2,108.1v0.5M199.3,102.5v-0.4M200.3,108.1v0.8M201.0,108.1v0.5M202.0,102.5v-0.6M203.6,108.1v0.6M204.5,108.1v0.7M206.1,102.5v-0.7" stroke="#108088" stroke-width="0.9" opacity="0.8"/><line x1="181.3" y1="105.3" x2="206.5" y2="105.3" stroke="#38dfec" stroke-width="3.4"/><path d="M181.3,103.6v-0.4M182.8,107.0v0.5M183.8,103.6v-0.7M184.6,107.0v0.3M185.8,103.6v-0.8M187.0,107.0v0.5M187.8,107.0v0.4M189.3,103.6v-0.4M190.7,103.6v-0.8M191.4,107.0v0.8M192.5,107.0v0.3M193.5,107.0v0.8M194.9,107.0v0.4M195.8,107.0v0.5M197.2,103.6v-0.4M198.2,103.6v-0.6M198.9,107.0v0.4M200.4,107.0v0.3M201.8,107.0v0.3M202.5,107.0v0.6M203.7,103.6v-0.5M204.9,107.0v0.5M205.9,103.6v-0.5" stroke="#38dfec" stroke-width="0.9" opacity="0.8"/><path d="M207.2,22.1 L207.6,16.6 L208.8,15.1 L210.0,17.3 L212.4,16.5 L213.8,15.9 L213.8,21.9 L212.2,22.7 L208.8,21.5 Z" fill="#38dfec" stroke="#118088" stroke-width="1.2" stroke-linejoin="round"/><path d="M207.0,30.3 C207.1,24.3 207.2,22.3 207.4,20.3" fill="none" stroke="#137880" stroke-width="1.2"/><line x1="213.8" y1="17.3" x2="213.8" y2="24.3" stroke="#38dfec" stroke-width="1" opacity="0.6"/><line x1="213.5" y1="24.3" x2="213.5" y2="32.3" stroke="#137880" stroke-width="1"/><line x1="213.8" y1="105.3" x2="221.3" y2="105.3" stroke="#108088" stroke-width="5.6"/><path d="M213.8,102.5v-0.8M215.2,102.5v-1.1M215.9,102.5v-0.8M216.7,102.5v-0.7M217.7,102.5v-0.8M218.9,108.1v0.4M220.3,102.5v-0.8" stroke="#108088" stroke-width="0.9" opacity="0.8"/><line x1="213.8" y1="105.3" x2="221.3" y2="105.3" stroke="#38dfec" stroke-width="3.4"/><path d="M213.8,107.0v0.5M214.5,107.0v0.7M215.9,103.6v-0.7M217.4,107.0v0.5M219.0,107.0v0.4M220.5,103.6v-0.3" stroke="#38dfec" stroke-width="0.9" opacity="0.8"/><polyline points="221.3,16.6 222.3,19.0 223.3,17.1 224.3,18.9 225.3,16.8 226.3,18.0 227.3,19.3 228.3,17.1 229.3,17.3 230.3,18.1 231.3,17.6 232.3,16.7 233.3,17.2 234.3,17.2 235.3,19.7 236.3,18.9 237.3,19.7 238.3,17.4 239.3,19.4 240.3,17.3 241.3,18.7 242.3,19.0 243.0,18.2" fill="none" stroke="#0f707a" stroke-width="5.0" stroke-linejoin="round"/><polyline points="221.3,18.8 222.3,17.9 223.3,18.0 224.3,19.0 225.3,16.7 226.3,19.4 227.3,18.4 228.3,17.7 229.3,19.0 230.3,17.4 231.3,19.6 232.3,18.4 233.3,17.8 234.3,19.1 235.3,18.2 236.3,17.4 237.3,19.1 238.3,17.1 239.3,19.4 240.3,17.8 241.3,19.0 242.3,20.0 243.0,18.9" fill="none" stroke="#38dfec" stroke-width="2.0" stroke-linejoin="round"/><path d="M221.0,28.3 C221.1,21.3 221.5,16.3 222.5,15.3" fill="none" stroke="#1a9aa4" stroke-width="1.2"/><line x1="243.0" y1="17.3" x2="243.0" y2="24.3" stroke="#38dfec" stroke-width="1" opacity="0.6"/><line x1="243.5" y1="24.3" x2="243.5" y2="32.3" stroke="#137880" stroke-width="1"/><line x1="243.0" y1="105.3" x2="250.5" y2="105.3" stroke="#108088" stroke-width="5.6"/><path d="M243.0,102.5v-1.0M243.6,102.5v-0.3M244.8,108.1v0.7M246.3,102.5v-0.4M247.6,102.5v-0.3M248.5,102.5v-0.4M249.3,108.1v0.9M250.1,102.5v-0.9" stroke="#108088" stroke-width="0.9" opacity="0.8"/><line x1="243.0" y1="105.3" x2="250.5" y2="105.3" stroke="#38dfec" stroke-width="3.4"/><path d="M243.0,103.6v-0.8M243.7,107.0v0.3M245.2,103.6v-0.7M246.1,107.0v0.3M247.2,107.0v0.5M248.3,107.0v0.8M249.1,103.6v-0.8M250.3,103.6v-0.5" stroke="#38dfec" stroke-width="0.9" opacity="0.8"/><line x1="251.5" y1="15" x2="251.5" y2="40" stroke="#2aa8b0" stroke-width="1.2"/><line x1="251.8" y1="105.3" x2="274.5" y2="105.3" stroke="#108088" stroke-width="5.6"/><path d="M251.8,102.5v-1.1M253.0,102.5v-1.2M253.8,108.1v0.9M255.0,102.5v-1.1M255.9,102.5v-0.6M257.4,108.1v1.1M258.0,108.1v1.1M259.1,102.5v-1.0M259.9,102.5v-0.4M260.5,108.1v0.6M261.8,108.1v1.1M262.7,102.5v-0.8M264.1,102.5v-0.8M265.3,102.5v-1.2M266.8,102.5v-0.3M267.6,108.1v1.0M269.0,108.1v0.6M269.9,108.1v0.5M271.1,108.1v1.0M272.7,108.1v0.8M274.0,102.5v-1.1" stroke="#108088" stroke-width="0.9" opacity="0.8"/><line x1="251.8" y1="105.3" x2="274.5" y2="105.3" stroke="#38dfec" stroke-width="3.4"/><path d="M251.8,103.6v-0.6M252.6,103.6v-0.6M254.1,103.6v-0.4M254.8,103.6v-0.8M255.6,103.6v-0.3M256.9,107.0v0.6M258.2,107.0v0.3M259.2,107.0v0.7M260.7,107.0v0.3M262.2,103.6v-0.8M263.0,103.6v-0.4M264.4,107.0v0.7M265.8,103.6v-0.6M266.5,107.0v0.3M267.4,103.6v-0.5M268.0,103.6v-0.4M269.3,103.6v-0.5M270.9,107.0v0.6M272.1,103.6v-0.3M273.1,103.6v-0.7M274.4,103.6v-0.6" stroke="#38dfec" stroke-width="0.9" opacity="0.8"/><polyline points="274.5,16.4 275.5,18.8 276.5,16.7 277.5,16.3 278.5,16.9 279.5,18.8 280.5,19.5 281.5,16.5 282.5,18.1 283.5,18.1 284.5,19.1 285.5,17.2 286.5,18.2 287.5,17.8 288.5,19.4 289.3,17.6" fill="none" stroke="#0f707a" stroke-width="5.0" stroke-linejoin="round"/><polyline points="274.5,19.0 275.5,17.1 276.5,16.9 277.5,18.4 278.5,17.9 279.5,16.8 280.5,18.4 281.5,16.8 282.5,18.9 283.5,18.7 284.5,19.0 285.5,18.6 286.5,17.8 287.5,18.0 288.5,18.0 289.3,19.5" fill="none" stroke="#38dfec" stroke-width="2.0" stroke-linejoin="round"/><path d="M274.2,28.3 C274.3,21.3 274.7,16.3 275.7,15.3" fill="none" stroke="#1a9aa4" stroke-width="1.2"/><line x1="289.3" y1="17.3" x2="289.3" y2="24.3" stroke="#38dfec" stroke-width="1" opacity="0.6"/><line x1="289.5" y1="24.3" x2="289.5" y2="32.3" stroke="#137880" stroke-width="1"/><line x1="289.3" y1="105.3" x2="318.3" y2="105.3" stroke="#108088" stroke-width="5.6"/><path d="M289.3,108.1v0.4M289.9,102.5v-0.5M291.4,102.5v-0.8M292.9,102.5v-0.5M294.0,108.1v1.0M295.3,102.5v-0.6M296.0,108.1v1.1M297.4,102.5v-0.5M298.8,102.5v-0.9M299.8,102.5v-1.2M300.6,108.1v0.6M302.1,102.5v-0.5M302.9,108.1v0.6M303.7,102.5v-0.6M305.2,102.5v-1.0M306.8,102.5v-0.4M308.4,108.1v1.1M309.4,108.1v0.5M310.1,102.5v-0.5M310.8,108.1v0.7M312.1,108.1v0.8M313.1,108.1v0.4M314.1,108.1v1.0M315.2,108.1v0.9M316.2,108.1v0.5M317.7,108.1v1.1" stroke="#108088" stroke-width="0.9" opacity="0.8"/><line x1="289.3" y1="105.3" x2="318.3" y2="105.3" stroke="#38dfec" stroke-width="3.4"/><path d="M289.3,107.0v0.6M290.4,107.0v0.5M291.1,107.0v0.5M292.4,103.6v-0.6M293.4,107.0v0.5M294.4,107.0v0.6M295.2,107.0v0.6M296.2,107.0v0.5M296.8,103.6v-0.6M298.2,107.0v0.8M298.9,107.0v0.6M300.2,107.0v0.6M301.6,103.6v-0.6M303.2,107.0v0.4M304.2,103.6v-0.7M305.8,103.6v-0.5M306.6,103.6v-0.5M307.7,107.0v0.5M308.6,103.6v-0.4M309.9,107.0v0.8M310.8,103.6v-0.7M311.6,107.0v0.4M313.0,103.6v-0.6M314.2,107.0v0.4M315.1,107.0v0.6M316.5,103.6v-0.5M317.7,107.0v0.4" stroke="#38dfec" stroke-width="0.9" opacity="0.8"/><line x1="319.5" y1="15" x2="319.5" y2="40" stroke="#2aa8b0" stroke-width="1.2"/><line x1="320.3" y1="105.3" x2="342.3" y2="105.3" stroke="#108088" stroke-width="5.6"/><path d="M320.3,102.5v-1.1M321.3,102.5v-0.5M322.1,108.1v0.3M322.9,102.5v-0.5M324.0,108.1v0.7M325.3,108.1v0.7M326.7,108.1v0.4M328.2,102.5v-1.1M329.7,102.5v-0.9M330.3,108.1v1.2M331.1,102.5v-0.4M332.0,102.5v-1.1M332.7,108.1v1.2M333.5,108.1v1.2M334.9,108.1v1.0M336.3,102.5v-1.1M337.6,108.1v0.8M338.6,108.1v1.2M339.5,102.5v-0.5M340.5,102.5v-0.4M341.3,102.5v-0.8" stroke="#108088" stroke-width="0.9" opacity="0.8"/><line x1="320.3" y1="105.3" x2="342.3" y2="105.3" stroke="#38dfec" stroke-width="3.4"/><path d="M320.3,103.6v-0.7M321.7,107.0v0.5M323.0,103.6v-0.7M324.0,103.6v-0.8M325.3,103.6v-0.6M326.5,107.0v0.6M327.4,107.0v0.8M328.5,103.6v-0.7M329.8,103.6v-0.6M331.3,103.6v-0.5M332.4,103.6v-0.7M333.4,107.0v0.5M334.9,107.0v0.4M335.9,103.6v-0.6M337.0,107.0v0.8M338.4,103.6v-0.5M339.3,107.0v0.6M340.6,107.0v0.3M342.1,103.6v-0.6" stroke="#38dfec" stroke-width="0.9" opacity="0.8"/><polyline points="342.3,16.1 343.3,16.8 344.3,19.2 345.3,18.2 346.3,18.4 347.3,18.9 348.3,19.3 349.3,18.4 350.3,18.5 351.3,18.5 352.3,18.8 353.3,18.5 354.3,18.8 355.3,17.4 356.3,18.9 357.3,18.2 357.3,19.2" fill="none" stroke="#0f707a" stroke-width="5.0" stroke-linejoin="round"/><polyline points="342.3,16.5 343.3,16.8 344.3,16.4 345.3,18.7 346.3,19.1 347.3,18.4 348.3,17.6 349.3,19.0 350.3,18.9 351.3,18.3 352.3,17.4 353.3,17.6 354.3,18.0 355.3,17.8 356.3,18.1 357.3,18.8 357.3,19.7" fill="none" stroke="#38dfec" stroke-width="2.0" stroke-linejoin="round"/><path d="M342.0,28.3 C342.1,21.3 342.5,16.3 343.5,15.3" fill="none" stroke="#1a9aa4" stroke-width="1.2"/><line x1="357.3" y1="17.3" x2="357.3" y2="24.3" stroke="#38dfec" stroke-width="1" opacity="0.6"/><line x1="357.5" y1="24.3" x2="357.5" y2="32.3" stroke="#137880" stroke-width="1"/><line x1="357.3" y1="105.3" x2="372.0" y2="105.3" stroke="#108088" stroke-width="5.6"/><path d="M357.3,108.1v0.4M357.9,108.1v0.4M359.1,102.5v-1.2M359.7,108.1v0.7M361.3,102.5v-1.3M362.3,108.1v0.4M363.1,102.5v-0.4M363.7,102.5v-1.0M365.3,108.1v0.4M366.0,108.1v0.3M366.8,102.5v-1.0M367.5,108.1v1.1M368.9,102.5v-1.0M370.2,102.5v-1.0M371.7,108.1v0.5" stroke="#108088" stroke-width="0.9" opacity="0.8"/><line x1="357.3" y1="105.3" x2="372.0" y2="105.3" stroke="#38dfec" stroke-width="3.4"/><path d="M357.3,103.6v-0.3M358.6,103.6v-0.7M359.5,103.6v-0.7M360.9,103.6v-0.5M361.9,103.6v-0.6M363.2,107.0v0.4M364.1,107.0v0.6M365.1,107.0v0.5M366.7,107.0v0.7M367.6,107.0v0.3M368.9,103.6v-0.7M370.1,107.0v0.8M371.3,103.6v-0.5" stroke="#38dfec" stroke-width="0.9" opacity="0.8"/><path d="M372.7,22.1 L373.1,16.6 L374.3,15.1 L375.5,17.3 L378.1,16.5 L379.5,15.9 L379.5,21.9 L377.9,22.7 L374.3,21.5 Z" fill="#38dfec" stroke="#118088" stroke-width="1.2" stroke-linejoin="round"/><path d="M372.5,30.3 C372.6,24.3 372.7,22.3 372.9,20.3" fill="none" stroke="#137880" stroke-width="1.2"/><line x1="379.5" y1="17.3" x2="379.5" y2="24.3" stroke="#38dfec" stroke-width="1" opacity="0.6"/><line x1="379.5" y1="24.3" x2="379.5" y2="32.3" stroke="#137880" stroke-width="1"/><line x1="379.5" y1="105.3" x2="386.5" y2="105.3" stroke="#108088" stroke-width="5.6"/><path d="M379.5,108.1v0.7M380.7,108.1v1.2M381.6,102.5v-0.3M382.6,108.1v0.9M384.1,108.1v0.3M385.5,108.1v1.1M386.4,108.1v1.1" stroke="#108088" stroke-width="0.9" opacity="0.8"/><line x1="379.5" y1="105.3" x2="386.5" y2="105.3" stroke="#38dfec" stroke-width="3.4"/><path d="M379.5,103.6v-0.8M380.2,107.0v0.6M381.0,107.0v0.7M381.8,107.0v0.6M382.9,103.6v-0.4M384.2,103.6v-0.7M384.9,107.0v0.7M385.8,107.0v0.6" stroke="#38dfec" stroke-width="0.9" opacity="0.8"/><line x1="387.5" y1="15" x2="387.5" y2="40" stroke="#2aa8b0" stroke-width="1.2"/><line x1="388.3" y1="105.3" x2="410.3" y2="105.3" stroke="#108088" stroke-width="5.6"/><path d="M388.3,102.5v-0.8M389.5,102.5v-0.5M390.3,102.5v-1.0M391.4,108.1v0.7M392.2,108.1v0.3M393.2,108.1v0.4M394.5,108.1v0.5M395.5,102.5v-0.8M396.1,108.1v1.3M397.2,102.5v-0.9M398.6,108.1v0.7M400.0,108.1v1.1M400.8,102.5v-0.3M401.6,102.5v-0.4M402.7,102.5v-1.2M404.3,102.5v-1.2M405.5,102.5v-0.7M407.1,108.1v0.6M408.3,108.1v1.2M409.3,102.5v-0.7" stroke="#108088" stroke-width="0.9" opacity="0.8"/><line x1="388.3" y1="105.3" x2="410.3" y2="105.3" stroke="#38dfec" stroke-width="3.4"/><path d="M388.3,103.6v-0.8M388.9,103.6v-0.4M390.4,107.0v0.8M391.1,107.0v0.7M392.3,103.6v-0.8M393.1,107.0v0.7M394.4,107.0v0.4M395.7,103.6v-0.4M396.6,103.6v-0.4M397.3,103.6v-0.4M398.6,107.0v0.3M399.4,107.0v0.3M400.2,107.0v0.8M401.7,103.6v-0.4M402.4,107.0v0.8M403.6,103.6v-0.5M405.1,107.0v0.5M405.8,103.6v-0.4M407.1,103.6v-0.6M408.6,103.6v-0.4M409.4,107.0v0.4M410.3,103.6v-0.4" stroke="#38dfec" stroke-width="0.9" opacity="0.8"/><polyline points="410.3,19.0 411.3,16.5 412.3,19.3 413.3,16.4 414.3,19.2 415.3,18.5 416.3,17.1 417.3,18.0 418.3,17.4 419.3,17.4 420.3,17.2 421.3,17.8 422.3,19.8 423.3,19.9 424.3,19.7 425.3,17.1 425.5,17.7" fill="none" stroke="#0f707a" stroke-width="5.0" stroke-linejoin="round"/><polyline points="410.3,18.9 411.3,16.4 412.3,18.5 413.3,17.2 414.3,19.3 415.3,16.5 416.3,18.9 417.3,17.6 418.3,17.0 419.3,16.6 420.3,19.2 421.3,18.3 422.3,17.3 423.3,18.1 424.3,19.6 425.3,17.5 425.5,18.6" fill="none" stroke="#38dfec" stroke-width="2.0" stroke-linejoin="round"/><path d="M410.0,28.3 C410.1,21.3 410.5,16.3 411.5,15.3" fill="none" stroke="#1a9aa4" stroke-width="1.2"/><line x1="425.5" y1="17.3" x2="425.5" y2="24.3" stroke="#38dfec" stroke-width="1" opacity="0.6"/><line x1="425.5" y1="24.3" x2="425.5" y2="32.3" stroke="#137880" stroke-width="1"/><line x1="425.5" y1="105.3" x2="432.8" y2="105.3" stroke="#108088" stroke-width="5.6"/><path d="M425.5,102.5v-0.4M426.9,102.5v-1.0M427.5,108.1v0.4M428.6,102.5v-0.6M429.9,108.1v1.0M431.0,102.5v-0.5M432.4,108.1v0.7" stroke="#108088" stroke-width="0.9" opacity="0.8"/><line x1="425.5" y1="105.3" x2="432.8" y2="105.3" stroke="#38dfec" stroke-width="3.4"/><path d="M425.5,103.6v-0.7M426.9,103.6v-0.7M427.6,103.6v-0.8M429.0,103.6v-0.4M430.5,103.6v-0.5M431.4,103.6v-0.6M432.6,107.0v0.5" stroke="#38dfec" stroke-width="0.9" opacity="0.8"/><path d="M433.5,22.1 L433.9,16.6 L435.1,15.1 L436.3,17.3 L438.9,16.5 L440.3,15.9 L440.3,21.9 L438.7,22.7 L435.1,21.5 Z" fill="#38dfec" stroke="#118088" stroke-width="1.2" stroke-linejoin="round"/><path d="M433.3,30.3 C433.4,24.3 433.5,22.3 433.7,20.3" fill="none" stroke="#137880" stroke-width="1.2"/><line x1="440.3" y1="17.3" x2="440.3" y2="24.3" stroke="#38dfec" stroke-width="1" opacity="0.6"/><line x1="440.5" y1="24.3" x2="440.5" y2="32.3" stroke="#137880" stroke-width="1"/><line x1="440.3" y1="105.3" x2="454.3" y2="105.3" stroke="#108088" stroke-width="5.6"/><path d="M440.3,108.1v1.0M441.8,108.1v0.6M442.7,102.5v-1.0M444.2,102.5v-1.2M445.3,108.1v0.8M446.0,102.5v-1.2M446.7,102.5v-0.4M448.2,102.5v-0.3M449.5,102.5v-0.5M450.7,108.1v0.9M452.0,108.1v0.4M453.3,102.5v-0.3" stroke="#108088" stroke-width="0.9" opacity="0.8"/><line x1="440.3" y1="105.3" x2="454.3" y2="105.3" stroke="#38dfec" stroke-width="3.4"/><path d="M440.3,103.6v-0.6M441.0,103.6v-0.5M442.2,103.6v-0.7M443.4,103.6v-0.7M444.8,103.6v-0.8M445.8,107.0v0.7M446.8,107.0v0.8M447.8,103.6v-0.4M448.8,107.0v0.8M450.3,107.0v0.7M451.0,107.0v0.6M452.5,103.6v-0.4M453.7,107.0v0.5" stroke="#38dfec" stroke-width="0.9" opacity="0.8"/><polyline points="454.3,17.5 455.3,17.8 456.3,16.3 457.3,16.7 458.3,19.4 459.3,18.8 460.3,19.4 461.3,18.5 462.3,19.1 463.3,19.4 464.3,19.4 465.3,16.7 466.0,18.7" fill="none" stroke="#0f707a" stroke-width="5.0" stroke-linejoin="round"/><polyline points="454.3,17.0 455.3,18.3 456.3,17.1 457.3,18.0 458.3,19.2 459.3,18.3 460.3,17.2 461.3,18.1 462.3,17.9 463.3,19.5 464.3,17.5 465.3,17.6 466.0,18.7" fill="none" stroke="#38dfec" stroke-width="2.0" stroke-linejoin="round"/><path d="M454.0,28.3 C454.1,21.3 454.5,16.3 455.5,15.3" fill="none" stroke="#1a9aa4" stroke-width="1.2"/><line x1="466.0" y1="17.3" x2="466.0" y2="24.3" stroke="#38dfec" stroke-width="1" opacity="0.6"/><line x1="466.5" y1="24.3" x2="466.5" y2="32.3" stroke="#137880" stroke-width="1"/><line x1="466.0" y1="105.3" x2="471.1" y2="105.3" stroke="#108088" stroke-width="5.6"/><path d="M466.0,108.1v0.4M467.6,102.5v-0.8M468.6,102.5v-0.8M469.3,102.5v-0.4M470.4,102.5v-0.6M471.0,108.1v0.8" stroke="#108088" stroke-width="0.9" opacity="0.8"/><line x1="466.0" y1="105.3" x2="471.1" y2="105.3" stroke="#38dfec" stroke-width="3.4"/><path d="M466.0,107.0v0.6M466.8,103.6v-0.7M467.9,103.6v-0.6M468.9,103.6v-0.4M470.0,107.0v0.5M470.6,107.0v0.5" stroke="#38dfec" stroke-width="0.9" opacity="0.8"/><polyline points="471.1,17.70 474.1,17.85 477.1,17.99 480.1,18.13 483.1,18.25 486.1,18.37 489.1,18.49 492.1,18.59 495.1,18.69 498.1,18.78 501.1,18.87 504.1,18.96 507.1,19.03 510.1,19.11 513.1,19.18 516.1,19.24 519.1,19.30 522.1,19.36 525.1,19.42 528.1,19.47 531.1,19.52 534.1,19.56 537.1,19.61 540.1,19.65 543.1,19.68 546.1,19.72 549.1,19.75 552.1,19.79 555.1,19.82 558.1,19.84 561.1,19.87 564.1,19.90 567.1,19.92 570.1,19.94 573.1,19.96 576.1,19.98 579.1,20.00 582.1,20.02 585.1,20.03 588.1,20.05 591.1,20.06 594.1,20.08 597.1,20.09 597.5,20.09" fill="none" stroke="#0f707a" stroke-width="6"/><polyline points="471.1,17.70 474.1,17.85 477.1,17.99 480.1,18.13 483.1,18.25 486.1,18.37 489.1,18.49 492.1,18.59 495.1,18.69 498.1,18.78 501.1,18.87 504.1,18.96 507.1,19.03 510.1,19.11 513.1,19.18 516.1,19.24 519.1,19.30 522.1,19.36 525.1,19.42 528.1,19.47 531.1,19.52 534.1,19.56 537.1,19.61 540.1,19.65 543.1,19.68 546.1,19.72 549.1,19.75 552.1,19.79 555.1,19.82 558.1,19.84 561.1,19.87 564.1,19.90 567.1,19.92 570.1,19.94 573.1,19.96 576.1,19.98 579.1,20.00 582.1,20.02 585.1,20.03 588.1,20.05 591.1,20.06 594.1,20.08 597.1,20.09 597.5,20.09" fill="none" stroke="#38dfec" stroke-width="3.4"/><path d="M473.1,16.1v-1.1M474.0,16.1v-1.8M475.4,16.2v-0.5M476.8,16.3v-1.0M477.8,19.7v1.0M478.5,19.8v0.6M479.9,16.4v-0.5M480.8,19.9v1.3M482.3,19.9v1.5M483.6,20.0v1.4M484.7,20.0v1.5M486.2,20.1v0.5M486.8,20.1v1.4M487.9,20.1v1.7M488.9,20.2v1.5M490.1,16.8v-0.9M491.2,16.9v-1.4M492.2,16.9v-1.1M493.1,20.3v1.5M494.2,17.0v-1.0M495.1,20.4v0.5M496.3,20.4v0.4M497.2,20.5v1.6M498.8,17.1v-0.6M500.3,17.1v-0.3M501.4,20.6v1.0M502.8,20.6v1.1M503.9,20.7v1.1M504.9,20.7v0.8M505.9,20.7v1.7M507.0,17.3v-0.4M508.0,20.8v1.1M509.5,17.4v-1.7M510.5,20.8v1.2M511.5,20.8v1.1M512.2,20.9v0.8M513.7,17.5v-1.1M515.1,20.9v1.3M516.7,17.6v-1.6M517.5,21.0v0.7M518.6,17.6v-0.6M519.8,17.6v-1.2M521.4,17.6v-1.3M522.4,17.7v-1.5M523.7,17.7v-0.3M525.2,21.1v1.2M526.0,21.1v1.0M526.8,21.1v1.3M528.4,17.8v-1.2M529.1,21.2v0.5M529.9,17.8v-0.5M531.0,21.2v1.5M532.4,17.8v-0.4M533.8,21.3v0.8M534.7,17.9v-0.6M535.4,21.3v1.7M536.4,17.9v-1.0M537.0,21.3v1.6M538.6,21.3v1.0M539.4,21.3v0.4M540.9,21.4v0.8M542.3,21.4v0.8M543.9,21.4v1.0M544.7,21.4v0.9M545.5,21.4v0.8M546.6,18.0v-1.5M547.4,18.0v-0.8M548.9,21.5v0.7M549.7,18.1v-1.1M550.7,18.1v-0.4M552.1,18.1v-0.8M552.9,18.1v-0.7M553.5,18.1v-1.3M554.3,18.1v-1.4M555.1,18.1v-1.6M556.2,21.5v1.6M556.9,21.5v0.8M557.9,18.1v-1.7M559.5,18.2v-1.1M560.5,21.6v0.5M561.4,21.6v1.6M562.4,21.6v0.7M563.2,18.2v-1.6M564.3,18.2v-1.1M565.7,21.6v0.9M566.8,18.2v-0.8M567.5,21.6v0.6M568.4,18.2v-1.3M569.6,21.6v0.8M570.5,18.2v-0.4M571.3,21.6v0.5M572.2,21.7v0.9M573.6,21.7v1.6M574.3,18.3v-0.7M575.6,18.3v-1.3M576.6,21.7v1.3M577.4,18.3v-1.6M578.7,18.3v-0.6M580.2,21.7v1.4M580.8,18.3v-0.4M581.6,18.3v-0.8M582.3,21.7v0.8M583.0,21.7v1.6M584.4,18.3v-0.7M585.6,18.3v-0.8M587.1,18.3v-1.5M587.7,21.7v1.6M588.4,18.4v-0.7M589.8,21.8v0.6M591.1,21.8v0.4M592.1,21.8v1.4M593.0,21.8v0.4M594.0,21.8v1.7M595.3,21.8v1.5M596.4,21.8v0.4M597.4,21.8v1.1" stroke="#38dfec" stroke-width="0.9" opacity="0.8"/><path d="M470.8,28.3 C470.9,21.3 471.3,16.3 472.3,15.3" fill="none" stroke="#1a9aa4" stroke-width="1.2"/><line x1="599.3" y1="17.3" x2="599.3" y2="24.3" stroke="#38dfec" stroke-width="1" opacity="0.6"/><line x1="599.5" y1="24.3" x2="599.5" y2="32.3" stroke="#137880" stroke-width="1"/></g>
<g><line x1="122.5" y1="126.6" x2="122.5" y2="216.6" stroke="#3c3a0c" stroke-width="1"/><path d="M124.2,214.6 L124.5,163.6 C124.9,141.6 125.5,131.6 126.1,125.6" fill="none" stroke="#4a480e" stroke-width="1"/><path d="M124.7,153.6 C125.0,138.6 125.5,131.6 126.1,125.6" fill="none" stroke="#7a7614" stroke-width="1"/><line x1="130.5" y1="126.6" x2="130.5" y2="216.6" stroke="#3c3a0c" stroke-width="1"/><path d="M131.8,214.6 L132.1,163.6 C132.5,141.6 133.1,131.6 133.7,125.6" fill="none" stroke="#4a480e" stroke-width="1"/><path d="M132.3,153.6 C132.6,138.6 133.1,131.6 133.7,125.6" fill="none" stroke="#7a7614" stroke-width="1"/><line x1="137.5" y1="126.6" x2="137.5" y2="216.6" stroke="#3c3a0c" stroke-width="1"/><path d="M138.8,214.6 L139.1,163.6 C139.5,141.6 140.1,131.6 140.7,125.6" fill="none" stroke="#4a480e" stroke-width="1"/><path d="M139.3,153.6 C139.6,138.6 140.1,131.6 140.7,125.6" fill="none" stroke="#7a7614" stroke-width="1"/><line x1="144.5" y1="126.6" x2="144.5" y2="216.6" stroke="#3c3a0c" stroke-width="1"/><path d="M146.4,214.6 L146.7,163.6 C147.1,141.6 147.7,131.6 148.3,125.6" fill="none" stroke="#4a480e" stroke-width="1"/><path d="M146.9,153.6 C147.2,138.6 147.7,131.6 148.3,125.6" fill="none" stroke="#7a7614" stroke-width="1"/><line x1="152.5" y1="126.6" x2="152.5" y2="216.6" stroke="#3c3a0c" stroke-width="1"/><path d="M153.8,214.6 L154.1,163.6 C154.5,141.6 155.1,131.6 155.7,125.6" fill="none" stroke="#4a480e" stroke-width="1"/><path d="M154.3,153.6 C154.6,138.6 155.1,131.6 155.7,125.6" fill="none" stroke="#7a7614" stroke-width="1"/><line x1="159.5" y1="126.6" x2="159.5" y2="216.6" stroke="#3c3a0c" stroke-width="1"/><path d="M161.2,214.6 L161.5,163.6 C161.9,141.6 162.5,131.6 163.1,125.6" fill="none" stroke="#4a480e" stroke-width="1"/><path d="M161.7,153.6 C162.0,138.6 162.5,131.6 163.1,125.6" fill="none" stroke="#7a7614" stroke-width="1"/><line x1="167.5" y1="126.6" x2="167.5" y2="216.6" stroke="#3c3a0c" stroke-width="1"/><path d="M168.2,214.6 L168.5,163.6 C168.9,141.6 169.5,131.6 170.1,125.6" fill="none" stroke="#4a480e" stroke-width="1"/><path d="M168.7,153.6 C169.0,138.6 169.5,131.6 170.1,125.6" fill="none" stroke="#7a7614" stroke-width="1"/><line x1="174.5" y1="126.6" x2="174.5" y2="216.6" stroke="#3c3a0c" stroke-width="1"/><path d="M175.7,214.6 L176.0,163.6 C176.4,141.6 177.0,131.6 177.6,125.6" fill="none" stroke="#4a480e" stroke-width="1"/><path d="M176.2,153.6 C176.5,138.6 177.0,131.6 177.6,125.6" fill="none" stroke="#7a7614" stroke-width="1"/><line x1="181.5" y1="126.6" x2="181.5" y2="216.6" stroke="#3c3a0c" stroke-width="1"/><path d="M183.0,214.6 L183.3,163.6 C183.7,141.6 184.3,131.6 184.9,125.6" fill="none" stroke="#4a480e" stroke-width="1"/><path d="M183.5,153.6 C183.8,138.6 184.3,131.6 184.9,125.6" fill="none" stroke="#7a7614" stroke-width="1"/><line x1="188.5" y1="126.6" x2="188.5" y2="216.6" stroke="#3c3a0c" stroke-width="1"/><path d="M193.5,214.6 L193.8,163.6 C194.2,141.6 194.8,131.6 195.4,125.6" fill="none" stroke="#4a480e" stroke-width="1"/><path d="M194.0,153.6 C194.3,138.6 194.8,131.6 195.4,125.6" fill="none" stroke="#7a7614" stroke-width="1"/><line x1="199.5" y1="126.6" x2="199.5" y2="216.6" stroke="#3c3a0c" stroke-width="1"/><path d="M200.5,214.6 L200.8,163.6 C201.2,141.6 201.8,131.6 202.4,125.6" fill="none" stroke="#4a480e" stroke-width="1"/><path d="M201.0,153.6 C201.3,138.6 201.8,131.6 202.4,125.6" fill="none" stroke="#7a7614" stroke-width="1"/><line x1="206.5" y1="126.6" x2="206.5" y2="216.6" stroke="#3c3a0c" stroke-width="1"/><path d="M208.0,214.6 L208.3,163.6 C208.7,141.6 209.3,131.6 209.9,125.6" fill="none" stroke="#4a480e" stroke-width="1"/><path d="M208.5,153.6 C208.8,138.6 209.3,131.6 209.9,125.6" fill="none" stroke="#7a7614" stroke-width="1"/><line x1="213.5" y1="126.6" x2="213.5" y2="216.6" stroke="#3c3a0c" stroke-width="1"/><path d="M215.0,214.6 L215.3,163.6 C215.7,141.6 216.3,131.6 216.9,125.6" fill="none" stroke="#4a480e" stroke-width="1"/><path d="M215.5,153.6 C215.8,138.6 216.3,131.6 216.9,125.6" fill="none" stroke="#7a7614" stroke-width="1"/><line x1="220.5" y1="126.6" x2="220.5" y2="216.6" stroke="#3c3a0c" stroke-width="1"/><path d="M222.7,214.6 L223.0,163.6 C223.4,141.6 224.0,131.6 224.6,125.6" fill="none" stroke="#4a480e" stroke-width="1"/><path d="M223.2,153.6 C223.5,138.6 224.0,131.6 224.6,125.6" fill="none" stroke="#7a7614" stroke-width="1"/><line x1="228.5" y1="126.6" x2="228.5" y2="216.6" stroke="#3c3a0c" stroke-width="1"/><path d="M230.0,214.6 L230.3,163.6 C230.7,141.6 231.3,131.6 231.9,125.6" fill="none" stroke="#4a480e" stroke-width="1"/><path d="M230.5,153.6 C230.8,138.6 231.3,131.6 231.9,125.6" fill="none" stroke="#7a7614" stroke-width="1"/><line x1="235.5" y1="126.6" x2="235.5" y2="216.6" stroke="#3c3a0c" stroke-width="1"/><path d="M237.5,214.6 L237.8,163.6 C238.2,141.6 238.8,131.6 239.4,125.6" fill="none" stroke="#4a480e" stroke-width="1"/><path d="M238.0,153.6 C238.3,138.6 238.8,131.6 239.4,125.6" fill="none" stroke="#7a7614" stroke-width="1"/><line x1="243.5" y1="126.6" x2="243.5" y2="216.6" stroke="#3c3a0c" stroke-width="1"/><path d="M244.5,214.6 L244.8,163.6 C245.2,141.6 245.8,131.6 246.4,125.6" fill="none" stroke="#4a480e" stroke-width="1"/><path d="M245.0,153.6 C245.3,138.6 245.8,131.6 246.4,125.6" fill="none" stroke="#7a7614" stroke-width="1"/><line x1="250.5" y1="126.6" x2="250.5" y2="216.6" stroke="#3c3a0c" stroke-width="1"/><path d="M252.0,214.6 L252.3,163.6 C252.7,141.6 253.3,131.6 253.9,125.6" fill="none" stroke="#4a480e" stroke-width="1"/><path d="M252.5,153.6 C252.8,138.6 253.3,131.6 253.9,125.6" fill="none" stroke="#7a7614" stroke-width="1"/><line x1="257.5" y1="126.6" x2="257.5" y2="216.6" stroke="#3c3a0c" stroke-width="1"/><path d="M261.5,214.6 L261.8,163.6 C262.2,141.6 262.8,131.6 263.4,125.6" fill="none" stroke="#4a480e" stroke-width="1"/><path d="M262.0,153.6 C262.3,138.6 262.8,131.6 263.4,125.6" fill="none" stroke="#7a7614" stroke-width="1"/><line x1="267.5" y1="126.6" x2="267.5" y2="216.6" stroke="#3c3a0c" stroke-width="1"/><path d="M268.8,214.6 L269.1,163.6 C269.5,141.6 270.1,131.6 270.7,125.6" fill="none" stroke="#4a480e" stroke-width="1"/><path d="M269.3,153.6 C269.6,138.6 270.1,131.6 270.7,125.6" fill="none" stroke="#7a7614" stroke-width="1"/><line x1="274.5" y1="126.6" x2="274.5" y2="216.6" stroke="#3c3a0c" stroke-width="1"/><path d="M276.0,214.6 L276.3,163.6 C276.7,141.6 277.3,131.6 277.9,125.6" fill="none" stroke="#4a480e" stroke-width="1"/><path d="M276.5,153.6 C276.8,138.6 277.3,131.6 277.9,125.6" fill="none" stroke="#7a7614" stroke-width="1"/><line x1="281.5" y1="126.6" x2="281.5" y2="216.6" stroke="#3c3a0c" stroke-width="1"/><path d="M283.7,214.6 L284.0,163.6 C284.4,141.6 285.0,131.6 285.6,125.6" fill="none" stroke="#4a480e" stroke-width="1"/><path d="M284.2,153.6 C284.5,138.6 285.0,131.6 285.6,125.6" fill="none" stroke="#7a7614" stroke-width="1"/><line x1="289.5" y1="126.6" x2="289.5" y2="216.6" stroke="#3c3a0c" stroke-width="1"/><path d="M291.0,214.6 L291.3,163.6 C291.7,141.6 292.3,131.6 292.9,125.6" fill="none" stroke="#4a480e" stroke-width="1"/><path d="M291.5,153.6 C291.8,138.6 292.3,131.6 292.9,125.6" fill="none" stroke="#7a7614" stroke-width="1"/><line x1="296.5" y1="126.6" x2="296.5" y2="216.6" stroke="#3c3a0c" stroke-width="1"/><path d="M298.2,214.6 L298.5,163.6 C298.9,141.6 299.5,131.6 300.1,125.6" fill="none" stroke="#4a480e" stroke-width="1"/><path d="M298.7,153.6 C299.0,138.6 299.5,131.6 300.1,125.6" fill="none" stroke="#7a7614" stroke-width="1"/><line x1="303.5" y1="126.6" x2="303.5" y2="216.6" stroke="#3c3a0c" stroke-width="1"/><path d="M305.5,214.6 L305.8,163.6 C306.2,141.6 306.8,131.6 307.4,125.6" fill="none" stroke="#4a480e" stroke-width="1"/><path d="M306.0,153.6 C306.3,138.6 306.8,131.6 307.4,125.6" fill="none" stroke="#7a7614" stroke-width="1"/><line x1="311.5" y1="126.6" x2="311.5" y2="216.6" stroke="#3c3a0c" stroke-width="1"/><path d="M312.7,214.6 L313.0,163.6 C313.4,141.6 314.0,131.6 314.6,125.6" fill="none" stroke="#4a480e" stroke-width="1"/><path d="M313.2,153.6 C313.5,138.6 314.0,131.6 314.6,125.6" fill="none" stroke="#7a7614" stroke-width="1"/><line x1="318.5" y1="126.6" x2="318.5" y2="216.6" stroke="#3c3a0c" stroke-width="1"/><path d="M320.0,214.6 L320.3,163.6 C320.7,141.6 321.3,131.6 321.9,125.6" fill="none" stroke="#4a480e" stroke-width="1"/><path d="M320.5,153.6 C320.8,138.6 321.3,131.6 321.9,125.6" fill="none" stroke="#7a7614" stroke-width="1"/><line x1="325.5" y1="126.6" x2="325.5" y2="216.6" stroke="#3c3a0c" stroke-width="1"/><path d="M329.5,214.6 L329.8,163.6 C330.2,141.6 330.8,131.6 331.4,125.6" fill="none" stroke="#4a480e" stroke-width="1"/><path d="M330.0,153.6 C330.3,138.6 330.8,131.6 331.4,125.6" fill="none" stroke="#7a7614" stroke-width="1"/><line x1="335.5" y1="126.6" x2="335.5" y2="216.6" stroke="#3c3a0c" stroke-width="1"/><path d="M337.0,214.6 L337.3,163.6 C337.7,141.6 338.3,131.6 338.9,125.6" fill="none" stroke="#4a480e" stroke-width="1"/><path d="M337.5,153.6 C337.8,138.6 338.3,131.6 338.9,125.6" fill="none" stroke="#7a7614" stroke-width="1"/><line x1="342.5" y1="126.6" x2="342.5" y2="216.6" stroke="#3c3a0c" stroke-width="1"/><path d="M344.0,214.6 L344.3,163.6 C344.7,141.6 345.3,131.6 345.9,125.6" fill="none" stroke="#4a480e" stroke-width="1"/><path d="M344.5,153.6 C344.8,138.6 345.3,131.6 345.9,125.6" fill="none" stroke="#7a7614" stroke-width="1"/><line x1="349.5" y1="126.6" x2="349.5" y2="216.6" stroke="#3c3a0c" stroke-width="1"/><path d="M351.5,214.6 L351.8,163.6 C352.2,141.6 352.8,131.6 353.4,125.6" fill="none" stroke="#4a480e" stroke-width="1"/><path d="M352.0,153.6 C352.3,138.6 352.8,131.6 353.4,125.6" fill="none" stroke="#7a7614" stroke-width="1"/><line x1="357.5" y1="126.6" x2="357.5" y2="216.6" stroke="#3c3a0c" stroke-width="1"/><path d="M358.5,214.6 L358.8,163.6 C359.2,141.6 359.8,131.6 360.4,125.6" fill="none" stroke="#4a480e" stroke-width="1"/><path d="M359.0,153.6 C359.3,138.6 359.8,131.6 360.4,125.6" fill="none" stroke="#7a7614" stroke-width="1"/><line x1="364.5" y1="126.6" x2="364.5" y2="216.6" stroke="#3c3a0c" stroke-width="1"/><path d="M366.0,214.6 L366.3,163.6 C366.7,141.6 367.3,131.6 367.9,125.6" fill="none" stroke="#4a480e" stroke-width="1"/><path d="M366.5,153.6 C366.8,138.6 367.3,131.6 367.9,125.6" fill="none" stroke="#7a7614" stroke-width="1"/><line x1="371.5" y1="126.6" x2="371.5" y2="216.6" stroke="#3c3a0c" stroke-width="1"/><path d="M373.5,214.6 L373.8,163.6 C374.2,141.6 374.8,131.6 375.4,125.6" fill="none" stroke="#4a480e" stroke-width="1"/><path d="M374.0,153.6 C374.3,138.6 374.8,131.6 375.4,125.6" fill="none" stroke="#7a7614" stroke-width="1"/><line x1="379.5" y1="126.6" x2="379.5" y2="216.6" stroke="#3c3a0c" stroke-width="1"/><path d="M381.0,214.6 L381.3,163.6 C381.7,141.6 382.3,131.6 382.9,125.6" fill="none" stroke="#4a480e" stroke-width="1"/><path d="M381.5,153.6 C381.8,138.6 382.3,131.6 382.9,125.6" fill="none" stroke="#7a7614" stroke-width="1"/><line x1="386.5" y1="126.6" x2="386.5" y2="216.6" stroke="#3c3a0c" stroke-width="1"/><path d="M388.0,214.6 L388.3,163.6 C388.7,141.6 389.3,131.6 389.9,125.6" fill="none" stroke="#4a480e" stroke-width="1"/><path d="M388.5,153.6 C388.8,138.6 389.3,131.6 389.9,125.6" fill="none" stroke="#7a7614" stroke-width="1"/><line x1="393.5" y1="126.6" x2="393.5" y2="216.6" stroke="#3c3a0c" stroke-width="1"/><path d="M397.2,214.6 L397.5,163.6 C397.9,141.6 398.5,131.6 399.1,125.6" fill="none" stroke="#4a480e" stroke-width="1"/><path d="M397.7,153.6 C398.0,138.6 398.5,131.6 399.1,125.6" fill="none" stroke="#7a7614" stroke-width="1"/><line x1="402.5" y1="126.6" x2="402.5" y2="216.6" stroke="#3c3a0c" stroke-width="1"/><path d="M404.8,214.6 L405.1,163.6 C405.5,141.6 406.1,131.6 406.7,125.6" fill="none" stroke="#4a480e" stroke-width="1"/><path d="M405.3,153.6 C405.6,138.6 406.1,131.6 406.7,125.6" fill="none" stroke="#7a7614" stroke-width="1"/><line x1="410.5" y1="126.6" x2="410.5" y2="216.6" stroke="#3c3a0c" stroke-width="1"/><path d="M412.0,214.6 L412.3,163.6 C412.7,141.6 413.3,131.6 413.9,125.6" fill="none" stroke="#4a480e" stroke-width="1"/><path d="M412.5,153.6 C412.8,138.6 413.3,131.6 413.9,125.6" fill="none" stroke="#7a7614" stroke-width="1"/><line x1="417.5" y1="126.6" x2="417.5" y2="216.6" stroke="#3c3a0c" stroke-width="1"/><path d="M419.7,214.6 L420.0,163.6 C420.4,141.6 421.0,131.6 421.6,125.6" fill="none" stroke="#4a480e" stroke-width="1"/><path d="M420.2,153.6 C420.5,138.6 421.0,131.6 421.6,125.6" fill="none" stroke="#7a7614" stroke-width="1"/><line x1="425.5" y1="126.6" x2="425.5" y2="216.6" stroke="#3c3a0c" stroke-width="1"/><path d="M426.8,214.6 L427.1,163.6 C427.5,141.6 428.1,131.6 428.7,125.6" fill="none" stroke="#4a480e" stroke-width="1"/><path d="M427.3,153.6 C427.6,138.6 428.1,131.6 428.7,125.6" fill="none" stroke="#7a7614" stroke-width="1"/><line x1="432.5" y1="126.6" x2="432.5" y2="216.6" stroke="#3c3a0c" stroke-width="1"/><path d="M434.0,214.6 L434.3,163.6 C434.7,141.6 435.3,131.6 435.9,125.6" fill="none" stroke="#4a480e" stroke-width="1"/><path d="M434.5,153.6 C434.8,138.6 435.3,131.6 435.9,125.6" fill="none" stroke="#7a7614" stroke-width="1"/><line x1="439.5" y1="126.6" x2="439.5" y2="216.6" stroke="#3c3a0c" stroke-width="1"/><path d="M441.3,214.6 L441.6,163.6 C442.0,141.6 442.6,131.6 443.2,125.6" fill="none" stroke="#4a480e" stroke-width="1"/><path d="M441.8,153.6 C442.1,138.6 442.6,131.6 443.2,125.6" fill="none" stroke="#7a7614" stroke-width="1"/><line x1="447.5" y1="126.6" x2="447.5" y2="216.6" stroke="#3c3a0c" stroke-width="1"/><path d="M448.8,214.6 L449.1,163.6 C449.5,141.6 450.1,131.6 450.7,125.6" fill="none" stroke="#4a480e" stroke-width="1"/><path d="M449.3,153.6 C449.6,138.6 450.1,131.6 450.7,125.6" fill="none" stroke="#7a7614" stroke-width="1"/><line x1="454.5" y1="126.6" x2="454.5" y2="216.6" stroke="#3c3a0c" stroke-width="1"/><path d="M456.0,214.6 L456.3,163.6 C456.7,141.6 457.3,131.6 457.9,125.6" fill="none" stroke="#4a480e" stroke-width="1"/><path d="M456.5,153.6 C456.8,138.6 457.3,131.6 457.9,125.6" fill="none" stroke="#7a7614" stroke-width="1"/><line x1="461.5" y1="126.6" x2="461.5" y2="216.6" stroke="#3c3a0c" stroke-width="1"/><path d="M465.4,214.6 L465.7,163.6 C466.1,141.6 466.7,131.6 467.3,125.6" fill="none" stroke="#4a480e" stroke-width="1"/><path d="M465.9,153.6 C466.2,138.6 466.7,131.6 467.3,125.6" fill="none" stroke="#7a7614" stroke-width="1"/><line x1="12.0" y1="123.6" x2="122.0" y2="123.6" stroke="#8a8610" stroke-width="5.1"/><path d="M12.0,121.0v-1.5M13.3,121.0v-1.6M14.4,126.2v1.9M15.6,121.0v-0.7M16.6,121.0v-1.0M17.5,126.2v0.5M18.7,121.0v-0.7M19.8,126.2v1.0M20.8,126.2v0.8M21.5,121.0v-1.2M23.0,126.2v1.2M23.7,126.2v1.4M24.8,126.2v1.5M25.5,121.0v-0.8M26.3,121.0v-0.4M27.1,121.0v-1.4M27.8,121.0v-0.8M28.8,121.0v-0.6M29.4,126.2v1.9M30.1,126.2v1.5M31.2,121.0v-0.5M32.3,126.2v0.6M32.9,126.2v1.8M34.1,126.2v1.8M35.0,121.0v-0.7M35.6,126.2v1.6M36.5,126.2v0.6M37.9,121.0v-1.8M39.3,126.2v1.6M40.2,126.2v0.6M41.2,126.2v0.9M42.1,121.0v-1.6M42.8,126.2v1.2M44.2,126.2v1.4M45.7,121.0v-1.1M46.5,126.2v0.8M47.2,121.0v-1.4M48.2,121.0v-1.9M48.9,121.0v-1.0M50.2,126.2v0.3M51.6,121.0v-1.6M52.5,126.2v1.4M53.5,121.0v-0.8M54.8,126.2v1.6M55.6,121.0v-0.8M56.7,121.0v-0.9M57.4,121.0v-0.8M59.0,126.2v1.8M60.6,126.2v1.9M62.0,126.2v0.4M63.2,126.2v0.8M64.7,126.2v1.1M65.6,126.2v0.9M66.3,126.2v0.6M67.3,126.2v0.4M68.3,121.0v-1.2M69.4,121.0v-1.2M70.1,126.2v0.6M71.3,126.2v0.5M72.1,126.2v0.5M73.0,126.2v1.1M73.8,121.0v-1.2M74.9,121.0v-1.3M75.9,121.0v-0.4M77.4,126.2v1.2M78.8,126.2v0.5M80.1,126.2v0.5M81.1,126.2v0.6M82.2,121.0v-1.6M83.6,121.0v-0.4M84.6,126.2v0.3M85.4,126.2v0.8M86.4,126.2v1.7M87.9,126.2v1.2M89.4,126.2v0.6M90.3,126.2v1.5M91.7,121.0v-0.5M93.1,126.2v1.8M93.7,121.0v-1.3M94.9,121.0v-1.6M96.4,121.0v-1.4M97.2,126.2v1.0M98.4,121.0v-0.5M99.1,121.0v-1.6M100.2,126.2v0.8M101.2,126.2v0.5M102.3,126.2v1.4M103.9,121.0v-0.3M104.6,126.2v1.1M106.0,121.0v-0.4M107.5,121.0v-1.4M108.5,126.2v0.6M109.5,126.2v1.7M110.2,121.0v-0.8M111.7,121.0v-1.3M112.5,121.0v-0.9M113.6,121.0v-0.9M114.2,121.0v-1.2M114.9,126.2v1.0M115.5,126.2v0.5M116.4,126.2v0.7M117.2,126.2v1.2M118.8,121.0v-1.9M120.0,126.2v1.5M121.3,126.2v1.3" stroke="#8a8610" stroke-width="0.9" opacity="0.8"/><line x1="12.0" y1="123.6" x2="122.0" y2="123.6" stroke="#f2ee20" stroke-width="3.2"/><path d="M12.0,125.2v0.6M13.5,125.2v1.2M14.4,125.2v1.0M15.5,122.0v-0.9M16.6,122.0v-0.7M17.6,125.2v0.6M18.7,122.0v-0.7M19.5,122.0v-0.6M20.1,122.0v-1.2M21.1,122.0v-0.9M21.9,122.0v-0.4M22.8,125.2v1.0M24.4,125.2v0.6M25.5,122.0v-0.4M26.7,122.0v-1.3M28.1,125.2v0.7M28.8,125.2v0.8M29.6,122.0v-0.6M30.4,125.2v0.6M31.2,122.0v-0.7M32.4,125.2v1.1M33.2,125.2v1.0M34.4,125.2v0.4M35.9,122.0v-0.6M36.7,125.2v0.8M37.9,122.0v-1.2M38.9,125.2v1.0M39.9,122.0v-1.0M40.5,122.0v-0.7M41.7,122.0v-0.6M42.9,122.0v-0.6M43.6,125.2v1.2M45.1,125.2v0.4M46.5,122.0v-0.6M47.2,125.2v0.4M47.9,122.0v-1.1M49.1,125.2v0.9M50.3,122.0v-0.9M51.6,125.2v0.6M53.0,122.0v-1.1M54.4,122.0v-1.3M55.3,125.2v0.8M56.0,122.0v-0.3M57.3,122.0v-1.1M58.8,125.2v0.5M59.5,122.0v-0.3M60.2,125.2v0.8M61.0,122.0v-1.2M61.7,125.2v0.5M63.2,122.0v-0.5M64.6,125.2v0.5M65.7,122.0v-0.9M67.1,122.0v-0.8M68.6,125.2v0.4M69.3,122.0v-0.9M70.8,125.2v0.4M71.8,125.2v1.2M73.0,122.0v-0.5M73.9,122.0v-0.7M74.7,125.2v1.0M75.6,122.0v-1.3M76.7,125.2v0.5M78.2,125.2v0.6M79.6,122.0v-0.6M80.7,122.0v-1.2M82.0,122.0v-0.9M83.2,122.0v-1.2M84.6,125.2v0.7M86.1,125.2v0.5M87.7,122.0v-0.6M88.4,122.0v-1.3M89.9,125.2v0.4M90.6,125.2v0.5M91.3,125.2v0.6M92.6,125.2v1.2M93.3,125.2v0.5M94.6,125.2v0.3M95.4,122.0v-0.7M96.0,122.0v-1.3M97.5,122.0v-0.4M98.2,122.0v-0.7M99.5,125.2v0.4M100.6,122.0v-0.4M101.7,122.0v-1.2M102.5,125.2v1.2M103.8,122.0v-0.6M104.7,122.0v-0.4M105.8,125.2v0.7M106.8,125.2v0.3M108.0,125.2v0.8M109.3,125.2v1.3M110.6,122.0v-0.7M111.7,122.0v-1.3M112.7,122.0v-0.7M114.2,125.2v0.3M115.8,125.2v0.5M116.8,122.0v-0.5M117.5,125.2v1.1M119.0,125.2v0.3M119.9,125.2v0.9M120.8,122.0v-1.3" stroke="#f2ee20" stroke-width="0.9" opacity="0.8"/><rect x="123.1" y="201.7" width="2.4" height="5.8" rx="0.6" fill="#e6e21e"/><path d="M123.0,208.0 l0.5,2 l0.6,-2 M124.8,201.2 l0.4,-1.8 l0.5,1.8" fill="#a8a416"/><path d="M125.9,127.1 V122.6 Q126.1,120.8 127.3,120.8 Q129.1,120.8 129.1,123.1 V126.19999999999999 L128.3,127.0 L127.1,126.0 Z" fill="#f2ee20"/><rect x="130.2" y="201.7" width="2.9" height="5.8" rx="0.6" fill="#e6e21e"/><path d="M130.1,208.0 l0.5,2 l0.6,-2 M132.4,201.2 l0.4,-1.8 l0.5,1.8" fill="#a8a416"/><path d="M133.5,127.1 V122.6 Q133.7,120.8 134.9,120.8 Q136.7,120.8 136.7,123.1 V126.19999999999999 L135.9,127.0 L134.7,126.0 Z" fill="#f2ee20"/><rect x="137.8" y="201.7" width="2.3" height="5.8" rx="0.6" fill="#e6e21e"/><path d="M137.7,208.0 l0.5,2 l0.6,-2 M139.4,201.2 l0.4,-1.8 l0.5,1.8" fill="#a8a416"/><path d="M140.5,127.1 V122.6 Q140.7,120.8 141.9,120.8 Q143.7,120.8 143.7,123.1 V126.19999999999999 L142.9,127.0 L141.7,126.0 Z" fill="#f2ee20"/><rect x="144.8" y="201.7" width="2.9" height="5.8" rx="0.6" fill="#e6e21e"/><path d="M144.7,208.0 l0.5,2 l0.6,-2 M147.0,201.2 l0.4,-1.8 l0.5,1.8" fill="#a8a416"/><path d="M148.1,127.1 V122.6 Q148.3,120.8 149.5,120.8 Q151.3,120.8 151.3,123.1 V126.19999999999999 L150.5,127.0 L149.3,126.0 Z" fill="#f2ee20"/><rect x="152.4" y="201.7" width="2.7" height="5.8" rx="0.6" fill="#e6e21e"/><path d="M152.3,208.0 l0.5,2 l0.6,-2 M154.4,201.2 l0.4,-1.8 l0.5,1.8" fill="#a8a416"/><path d="M155.5,127.1 V122.6 Q155.7,120.8 156.9,120.8 Q158.7,120.8 158.7,123.1 V126.19999999999999 L157.9,127.0 L156.7,126.0 Z" fill="#f2ee20"/><rect x="159.8" y="201.7" width="2.7" height="5.8" rx="0.6" fill="#e6e21e"/><path d="M159.7,208.0 l0.5,2 l0.6,-2 M161.8,201.2 l0.4,-1.8 l0.5,1.8" fill="#a8a416"/><path d="M162.9,127.1 V122.6 Q163.1,120.8 164.3,120.8 Q166.1,120.8 166.1,123.1 V126.19999999999999 L165.3,127.0 L164.1,126.0 Z" fill="#f2ee20"/><rect x="167.2" y="201.7" width="2.3" height="5.8" rx="0.6" fill="#e6e21e"/><path d="M167.1,208.0 l0.5,2 l0.6,-2 M168.8,201.2 l0.4,-1.8 l0.5,1.8" fill="#a8a416"/><path d="M169.9,127.1 V122.6 Q170.1,120.8 171.3,120.8 Q173.1,120.8 173.1,123.1 V126.19999999999999 L172.3,127.0 L171.1,126.0 Z" fill="#f2ee20"/><rect x="174.2" y="201.7" width="2.8" height="5.8" rx="0.6" fill="#e6e21e"/><path d="M174.1,208.0 l0.5,2 l0.6,-2 M176.3,201.2 l0.4,-1.8 l0.5,1.8" fill="#a8a416"/><path d="M177.4,127.1 V122.6 Q177.6,120.8 178.8,120.8 Q180.6,120.8 180.6,123.1 V126.19999999999999 L179.8,127.0 L178.6,126.0 Z" fill="#f2ee20"/><rect x="181.7" y="201.7" width="2.6" height="5.8" rx="0.6" fill="#e6e21e"/><path d="M181.6,208.0 l0.5,2 l0.6,-2 M183.6,201.2 l0.4,-1.8 l0.5,1.8" fill="#a8a416"/><path d="M184.7,127.1 V122.6 Q184.9,120.8 186.1,120.8 Q187.9,120.8 187.9,123.1 V126.19999999999999 L187.1,127.0 L185.9,126.0 Z" fill="#f2ee20"/><rect x="189.0" y="201.7" width="5.8" height="5.8" rx="0.6" fill="#e6e21e"/><path d="M188.9,208.0 l0.5,2 l0.6,-2 M194.1,201.2 l0.4,-1.8 l0.5,1.8" fill="#a8a416"/><path d="M195.2,127.1 V122.6 Q195.4,120.8 196.6,120.8 Q198.4,120.8 198.4,123.1 V126.19999999999999 L197.6,127.0 L196.4,126.0 Z" fill="#f2ee20"/><rect x="199.5" y="201.7" width="2.3" height="5.8" rx="0.6" fill="#e6e21e"/><path d="M199.4,208.0 l0.5,2 l0.6,-2 M201.1,201.2 l0.4,-1.8 l0.5,1.8" fill="#a8a416"/><path d="M202.2,127.1 V122.6 Q202.4,120.8 203.6,120.8 Q205.4,120.8 205.4,123.1 V126.19999999999999 L204.6,127.0 L203.4,126.0 Z" fill="#f2ee20"/><rect x="206.5" y="201.7" width="2.8" height="5.8" rx="0.6" fill="#e6e21e"/><path d="M206.4,208.0 l0.5,2 l0.6,-2 M208.6,201.2 l0.4,-1.8 l0.5,1.8" fill="#a8a416"/><path d="M209.7,127.1 V122.6 Q209.9,120.8 211.1,120.8 Q212.9,120.8 212.9,123.1 V126.19999999999999 L212.1,127.0 L210.9,126.0 Z" fill="#f2ee20"/><rect x="214.0" y="201.7" width="2.3" height="5.8" rx="0.6" fill="#e6e21e"/><path d="M213.9,208.0 l0.5,2 l0.6,-2 M215.6,201.2 l0.4,-1.8 l0.5,1.8" fill="#a8a416"/><path d="M216.7,127.1 V122.6 Q216.9,120.8 218.1,120.8 Q219.9,120.8 219.9,123.1 V126.19999999999999 L219.1,127.0 L217.9,126.0 Z" fill="#f2ee20"/><rect x="221.0" y="201.7" width="3.0" height="5.8" rx="0.6" fill="#e6e21e"/><path d="M220.9,208.0 l0.5,2 l0.6,-2 M223.3,201.2 l0.4,-1.8 l0.5,1.8" fill="#a8a416"/><path d="M224.4,127.1 V122.6 Q224.6,120.8 225.8,120.8 Q227.6,120.8 227.6,123.1 V126.19999999999999 L226.8,127.0 L225.6,126.0 Z" fill="#f2ee20"/><rect x="228.7" y="201.7" width="2.6" height="5.8" rx="0.6" fill="#e6e21e"/><path d="M228.6,208.0 l0.5,2 l0.6,-2 M230.6,201.2 l0.4,-1.8 l0.5,1.8" fill="#a8a416"/><path d="M231.7,127.1 V122.6 Q231.9,120.8 233.1,120.8 Q234.9,120.8 234.9,123.1 V126.19999999999999 L234.1,127.0 L232.9,126.0 Z" fill="#f2ee20"/><rect x="236.0" y="201.7" width="2.8" height="5.8" rx="0.6" fill="#e6e21e"/><path d="M235.9,208.0 l0.5,2 l0.6,-2 M238.1,201.2 l0.4,-1.8 l0.5,1.8" fill="#a8a416"/><path d="M239.2,127.1 V122.6 Q239.4,120.8 240.6,120.8 Q242.4,120.8 242.4,123.1 V126.19999999999999 L241.6,127.0 L240.4,126.0 Z" fill="#f2ee20"/><rect x="243.5" y="201.7" width="2.3" height="5.8" rx="0.6" fill="#e6e21e"/><path d="M243.4,208.0 l0.5,2 l0.6,-2 M245.1,201.2 l0.4,-1.8 l0.5,1.8" fill="#a8a416"/><path d="M246.2,127.1 V122.6 Q246.4,120.8 247.6,120.8 Q249.4,120.8 249.4,123.1 V126.19999999999999 L248.6,127.0 L247.4,126.0 Z" fill="#f2ee20"/><rect x="250.5" y="201.7" width="2.8" height="5.8" rx="0.6" fill="#e6e21e"/><path d="M250.4,208.0 l0.5,2 l0.6,-2 M252.6,201.2 l0.4,-1.8 l0.5,1.8" fill="#a8a416"/><path d="M253.7,127.1 V122.6 Q253.9,120.8 255.1,120.8 Q256.9,120.8 256.9,123.1 V126.19999999999999 L256.1,127.0 L254.9,126.0 Z" fill="#f2ee20"/><rect x="258.0" y="201.7" width="4.8" height="5.8" rx="0.6" fill="#e6e21e"/><path d="M257.9,208.0 l0.5,2 l0.6,-2 M262.1,201.2 l0.4,-1.8 l0.5,1.8" fill="#a8a416"/><path d="M263.2,127.1 V122.6 Q263.4,120.8 264.6,120.8 Q266.4,120.8 266.4,123.1 V126.19999999999999 L265.6,127.0 L264.4,126.0 Z" fill="#f2ee20"/><rect x="267.5" y="201.7" width="2.6" height="5.8" rx="0.6" fill="#e6e21e"/><path d="M267.4,208.0 l0.5,2 l0.6,-2 M269.4,201.2 l0.4,-1.8 l0.5,1.8" fill="#a8a416"/><path d="M270.5,127.1 V122.6 Q270.7,120.8 271.9,120.8 Q273.7,120.8 273.7,123.1 V126.19999999999999 L272.9,127.0 L271.7,126.0 Z" fill="#f2ee20"/><rect x="274.8" y="201.7" width="2.5" height="5.8" rx="0.6" fill="#e6e21e"/><path d="M274.7,208.0 l0.5,2 l0.6,-2 M276.6,201.2 l0.4,-1.8 l0.5,1.8" fill="#a8a416"/><path d="M277.7,127.1 V122.6 Q277.9,120.8 279.1,120.8 Q280.9,120.8 280.9,123.1 V126.19999999999999 L280.1,127.0 L278.9,126.0 Z" fill="#f2ee20"/><rect x="282.0" y="201.7" width="3.0" height="5.8" rx="0.6" fill="#e6e21e"/><path d="M281.9,208.0 l0.5,2 l0.6,-2 M284.3,201.2 l0.4,-1.8 l0.5,1.8" fill="#a8a416"/><path d="M285.4,127.1 V122.6 Q285.6,120.8 286.8,120.8 Q288.6,120.8 288.6,123.1 V126.19999999999999 L287.8,127.0 L286.6,126.0 Z" fill="#f2ee20"/><rect x="289.7" y="201.7" width="2.6" height="5.8" rx="0.6" fill="#e6e21e"/><path d="M289.6,208.0 l0.5,2 l0.6,-2 M291.6,201.2 l0.4,-1.8 l0.5,1.8" fill="#a8a416"/><path d="M292.7,127.1 V122.6 Q292.9,120.8 294.1,120.8 Q295.9,120.8 295.9,123.1 V126.19999999999999 L295.1,127.0 L293.9,126.0 Z" fill="#f2ee20"/><rect x="297.0" y="201.7" width="2.5" height="5.8" rx="0.6" fill="#e6e21e"/><path d="M296.9,208.0 l0.5,2 l0.6,-2 M298.8,201.2 l0.4,-1.8 l0.5,1.8" fill="#a8a416"/><path d="M299.9,127.1 V122.6 Q300.1,120.8 301.3,120.8 Q303.1,120.8 303.1,123.1 V126.19999999999999 L302.3,127.0 L301.1,126.0 Z" fill="#f2ee20"/><rect x="304.2" y="201.7" width="2.6" height="5.8" rx="0.6" fill="#e6e21e"/><path d="M304.1,208.0 l0.5,2 l0.6,-2 M306.1,201.2 l0.4,-1.8 l0.5,1.8" fill="#a8a416"/><path d="M307.2,127.1 V122.6 Q307.4,120.8 308.6,120.8 Q310.4,120.8 310.4,123.1 V126.19999999999999 L309.6,127.0 L308.4,126.0 Z" fill="#f2ee20"/><rect x="311.5" y="201.7" width="2.5" height="5.8" rx="0.6" fill="#e6e21e"/><path d="M311.4,208.0 l0.5,2 l0.6,-2 M313.3,201.2 l0.4,-1.8 l0.5,1.8" fill="#a8a416"/><path d="M314.4,127.1 V122.6 Q314.6,120.8 315.8,120.8 Q317.6,120.8 317.6,123.1 V126.19999999999999 L316.8,127.0 L315.6,126.0 Z" fill="#f2ee20"/><rect x="318.7" y="201.7" width="2.6" height="5.8" rx="0.6" fill="#e6e21e"/><path d="M318.6,208.0 l0.5,2 l0.6,-2 M320.6,201.2 l0.4,-1.8 l0.5,1.8" fill="#a8a416"/><path d="M321.7,127.1 V122.6 Q321.9,120.8 323.1,120.8 Q324.9,120.8 324.9,123.1 V126.19999999999999 L324.1,127.0 L322.9,126.0 Z" fill="#f2ee20"/><rect x="326.0" y="201.7" width="4.8" height="5.8" rx="0.6" fill="#e6e21e"/><path d="M325.9,208.0 l0.5,2 l0.6,-2 M330.1,201.2 l0.4,-1.8 l0.5,1.8" fill="#a8a416"/><path d="M331.2,127.1 V122.6 Q331.4,120.8 332.6,120.8 Q334.4,120.8 334.4,123.1 V126.19999999999999 L333.6,127.0 L332.4,126.0 Z" fill="#f2ee20"/><rect x="335.5" y="201.7" width="2.8" height="5.8" rx="0.6" fill="#e6e21e"/><path d="M335.4,208.0 l0.5,2 l0.6,-2 M337.6,201.2 l0.4,-1.8 l0.5,1.8" fill="#a8a416"/><path d="M338.7,127.1 V122.6 Q338.9,120.8 340.1,120.8 Q341.9,120.8 341.9,123.1 V126.19999999999999 L341.1,127.0 L339.9,126.0 Z" fill="#f2ee20"/><rect x="343.0" y="201.7" width="2.3" height="5.8" rx="0.6" fill="#e6e21e"/><path d="M342.9,208.0 l0.5,2 l0.6,-2 M344.6,201.2 l0.4,-1.8 l0.5,1.8" fill="#a8a416"/><path d="M345.7,127.1 V122.6 Q345.9,120.8 347.1,120.8 Q348.9,120.8 348.9,123.1 V126.19999999999999 L348.1,127.0 L346.9,126.0 Z" fill="#f2ee20"/><rect x="350.0" y="201.7" width="2.8" height="5.8" rx="0.6" fill="#e6e21e"/><path d="M349.9,208.0 l0.5,2 l0.6,-2 M352.1,201.2 l0.4,-1.8 l0.5,1.8" fill="#a8a416"/><path d="M353.2,127.1 V122.6 Q353.4,120.8 354.6,120.8 Q356.4,120.8 356.4,123.1 V126.19999999999999 L355.6,127.0 L354.4,126.0 Z" fill="#f2ee20"/><rect x="357.5" y="201.7" width="2.3" height="5.8" rx="0.6" fill="#e6e21e"/><path d="M357.4,208.0 l0.5,2 l0.6,-2 M359.1,201.2 l0.4,-1.8 l0.5,1.8" fill="#a8a416"/><path d="M360.2,127.1 V122.6 Q360.4,120.8 361.6,120.8 Q363.4,120.8 363.4,123.1 V126.19999999999999 L362.6,127.0 L361.4,126.0 Z" fill="#f2ee20"/><rect x="364.5" y="201.7" width="2.8" height="5.8" rx="0.6" fill="#e6e21e"/><path d="M364.4,208.0 l0.5,2 l0.6,-2 M366.6,201.2 l0.4,-1.8 l0.5,1.8" fill="#a8a416"/><path d="M367.7,127.1 V122.6 Q367.9,120.8 369.1,120.8 Q370.9,120.8 370.9,123.1 V126.19999999999999 L370.1,127.0 L368.9,126.0 Z" fill="#f2ee20"/><rect x="372.0" y="201.7" width="2.8" height="5.8" rx="0.6" fill="#e6e21e"/><path d="M371.9,208.0 l0.5,2 l0.6,-2 M374.1,201.2 l0.4,-1.8 l0.5,1.8" fill="#a8a416"/><path d="M375.2,127.1 V122.6 Q375.4,120.8 376.6,120.8 Q378.4,120.8 378.4,123.1 V126.19999999999999 L377.6,127.0 L376.4,126.0 Z" fill="#f2ee20"/><rect x="379.5" y="201.7" width="2.8" height="5.8" rx="0.6" fill="#e6e21e"/><path d="M379.4,208.0 l0.5,2 l0.6,-2 M381.6,201.2 l0.4,-1.8 l0.5,1.8" fill="#a8a416"/><path d="M382.7,127.1 V122.6 Q382.9,120.8 384.1,120.8 Q385.9,120.8 385.9,123.1 V126.19999999999999 L385.1,127.0 L383.9,126.0 Z" fill="#f2ee20"/><rect x="387.0" y="201.7" width="2.3" height="5.8" rx="0.6" fill="#e6e21e"/><path d="M386.9,208.0 l0.5,2 l0.6,-2 M388.6,201.2 l0.4,-1.8 l0.5,1.8" fill="#a8a416"/><path d="M389.7,127.1 V122.6 Q389.9,120.8 391.1,120.8 Q392.9,120.8 392.9,123.1 V126.19999999999999 L392.1,127.0 L390.9,126.0 Z" fill="#f2ee20"/><rect x="394.0" y="201.7" width="4.5" height="5.8" rx="0.6" fill="#e6e21e"/><path d="M393.9,208.0 l0.5,2 l0.6,-2 M397.8,201.2 l0.4,-1.8 l0.5,1.8" fill="#a8a416"/><path d="M398.9,127.1 V122.6 Q399.1,120.8 400.3,120.8 Q402.1,120.8 402.1,123.1 V126.19999999999999 L401.3,127.0 L400.1,126.0 Z" fill="#f2ee20"/><rect x="403.2" y="201.7" width="2.9" height="5.8" rx="0.6" fill="#e6e21e"/><path d="M403.1,208.0 l0.5,2 l0.6,-2 M405.4,201.2 l0.4,-1.8 l0.5,1.8" fill="#a8a416"/><path d="M406.5,127.1 V122.6 Q406.7,120.8 407.9,120.8 Q409.7,120.8 409.7,123.1 V126.19999999999999 L408.9,127.0 L407.7,126.0 Z" fill="#f2ee20"/><rect x="410.8" y="201.7" width="2.5" height="5.8" rx="0.6" fill="#e6e21e"/><path d="M410.7,208.0 l0.5,2 l0.6,-2 M412.6,201.2 l0.4,-1.8 l0.5,1.8" fill="#a8a416"/><path d="M413.7,127.1 V122.6 Q413.9,120.8 415.1,120.8 Q416.9,120.8 416.9,123.1 V126.19999999999999 L416.1,127.0 L414.9,126.0 Z" fill="#f2ee20"/><rect x="418.0" y="201.7" width="3.0" height="5.8" rx="0.6" fill="#e6e21e"/><path d="M417.9,208.0 l0.5,2 l0.6,-2 M420.3,201.2 l0.4,-1.8 l0.5,1.8" fill="#a8a416"/><path d="M421.4,127.1 V122.6 Q421.6,120.8 422.8,120.8 Q424.6,120.8 424.6,123.1 V126.19999999999999 L423.8,127.0 L422.6,126.0 Z" fill="#f2ee20"/><rect x="425.7" y="201.7" width="2.4" height="5.8" rx="0.6" fill="#e6e21e"/><path d="M425.6,208.0 l0.5,2 l0.6,-2 M427.4,201.2 l0.4,-1.8 l0.5,1.8" fill="#a8a416"/><path d="M428.5,127.1 V122.6 Q428.7,120.8 429.9,120.8 Q431.7,120.8 431.7,123.1 V126.19999999999999 L430.9,127.0 L429.7,126.0 Z" fill="#f2ee20"/><rect x="432.8" y="201.7" width="2.5" height="5.8" rx="0.6" fill="#e6e21e"/><path d="M432.7,208.0 l0.5,2 l0.6,-2 M434.6,201.2 l0.4,-1.8 l0.5,1.8" fill="#a8a416"/><path d="M435.7,127.1 V122.6 Q435.9,120.8 437.1,120.8 Q438.9,120.8 438.9,123.1 V126.19999999999999 L438.1,127.0 L436.9,126.0 Z" fill="#f2ee20"/><rect x="440.0" y="201.7" width="2.6" height="5.8" rx="0.6" fill="#e6e21e"/><path d="M439.9,208.0 l0.5,2 l0.6,-2 M441.9,201.2 l0.4,-1.8 l0.5,1.8" fill="#a8a416"/><path d="M443.0,127.1 V122.6 Q443.2,120.8 444.4,120.8 Q446.2,120.8 446.2,123.1 V126.19999999999999 L445.4,127.0 L444.2,126.0 Z" fill="#f2ee20"/><rect x="447.3" y="201.7" width="2.8" height="5.8" rx="0.6" fill="#e6e21e"/><path d="M447.2,208.0 l0.5,2 l0.6,-2 M449.4,201.2 l0.4,-1.8 l0.5,1.8" fill="#a8a416"/><path d="M450.5,127.1 V122.6 Q450.7,120.8 451.9,120.8 Q453.7,120.8 453.7,123.1 V126.19999999999999 L452.9,127.0 L451.7,126.0 Z" fill="#f2ee20"/><rect x="454.8" y="201.7" width="2.5" height="5.8" rx="0.6" fill="#e6e21e"/><path d="M454.7,208.0 l0.5,2 l0.6,-2 M456.6,201.2 l0.4,-1.8 l0.5,1.8" fill="#a8a416"/><path d="M457.7,127.1 V122.6 Q457.9,120.8 459.1,120.8 Q460.9,120.8 460.9,123.1 V126.19999999999999 L460.1,127.0 L458.9,126.0 Z" fill="#f2ee20"/><rect x="462.0" y="201.7" width="4.7" height="5.8" rx="0.6" fill="#e6e21e"/><path d="M461.9,208.0 l0.5,2 l0.6,-2 M466.0,201.2 l0.4,-1.8 l0.5,1.8" fill="#a8a416"/><line x1="467.7" y1="123.6" x2="598.5" y2="123.6" stroke="#8a8610" stroke-width="5.1"/><path d="M467.7,126.2v1.7M468.9,121.0v-1.9M470.1,121.0v-1.5M471.4,126.2v0.9M472.6,121.0v-1.4M473.9,121.0v-1.2M475.1,126.2v0.7M476.2,126.2v1.5M477.2,121.0v-0.7M478.8,126.2v1.2M479.9,121.0v-1.6M480.7,121.0v-1.6M481.9,126.2v1.6M483.4,121.0v-0.4M484.8,121.0v-1.6M485.6,121.0v-0.7M486.5,126.2v1.6M487.6,121.0v-0.4M489.2,121.0v-1.4M490.2,126.2v1.6M491.0,121.0v-1.4M492.1,121.0v-0.7M493.1,121.0v-0.9M493.9,121.0v-1.2M494.6,121.0v-1.5M495.6,126.2v0.7M496.2,126.2v1.3M497.1,126.2v1.0M498.3,121.0v-0.9M499.3,126.2v0.9M500.2,126.2v1.0M501.6,121.0v-0.9M502.8,121.0v-1.8M504.4,121.0v-1.5M505.6,121.0v-0.8M507.0,126.2v0.9M508.1,126.2v1.8M508.7,121.0v-1.3M509.8,121.0v-1.7M510.8,121.0v-1.7M511.9,126.2v1.1M513.2,121.0v-1.5M513.8,126.2v1.4M515.2,121.0v-1.5M516.0,126.2v0.4M516.7,126.2v0.4M517.9,126.2v0.4M519.2,121.0v-1.1M520.5,126.2v1.0M522.1,126.2v1.6M522.9,126.2v0.8M523.5,121.0v-1.9M524.3,121.0v-0.8M525.8,126.2v1.2M526.8,121.0v-0.4M528.3,126.2v1.6M529.1,121.0v-0.6M530.3,121.0v-0.9M531.3,121.0v-1.2M532.8,126.2v0.6M533.9,121.0v-0.4M535.0,126.2v1.0M536.0,126.2v0.7M536.9,126.2v1.5M538.0,126.2v1.0M539.1,121.0v-1.7M540.1,121.0v-1.3M541.6,126.2v0.4M542.4,126.2v1.8M543.8,126.2v1.1M545.0,121.0v-0.8M546.5,126.2v0.5M547.3,121.0v-0.5M548.7,121.0v-1.8M549.9,126.2v0.7M551.2,121.0v-0.6M552.5,126.2v0.4M553.4,126.2v0.7M554.3,121.0v-1.2M555.8,126.2v0.8M556.6,126.2v1.6M557.6,121.0v-0.4M558.8,126.2v0.7M559.5,126.2v1.1M560.5,121.0v-1.4M562.0,126.2v0.5M563.6,126.2v1.8M564.5,126.2v0.9M565.6,121.0v-1.8M566.6,126.2v1.7M567.8,121.0v-0.4M568.7,126.2v1.7M569.5,121.0v-1.8M570.7,121.0v-1.9M572.2,121.0v-1.4M573.2,121.0v-1.0M574.5,126.2v0.6M575.4,126.2v0.4M576.1,126.2v1.2M577.3,121.0v-1.0M578.4,126.2v0.5M579.1,121.0v-1.2M580.1,121.0v-1.4M580.9,121.0v-1.8M582.3,121.0v-1.7M583.1,126.2v0.5M583.8,126.2v1.1M584.5,121.0v-1.1M585.6,121.0v-1.1M586.4,121.0v-1.0M587.2,126.2v0.7M588.3,121.0v-1.7M589.8,126.2v1.1M591.0,121.0v-1.4M592.3,121.0v-0.5M593.0,126.2v0.9M593.9,121.0v-1.7M595.0,126.2v0.7M596.4,121.0v-1.5M597.3,126.2v1.3M597.9,126.2v1.3" stroke="#8a8610" stroke-width="0.9" opacity="0.8"/><line x1="467.7" y1="123.6" x2="598.5" y2="123.6" stroke="#f2ee20" stroke-width="3.2"/><path d="M467.7,125.2v0.6M468.8,122.0v-1.2M470.3,122.0v-0.7M471.0,125.2v0.5M472.3,122.0v-0.4M473.0,122.0v-0.5M473.9,125.2v1.3M475.3,122.0v-0.8M476.7,125.2v1.2M477.9,125.2v0.5M479.4,122.0v-1.1M480.7,122.0v-0.6M482.3,125.2v1.0M483.0,125.2v1.1M484.5,125.2v1.0M485.9,122.0v-0.9M487.3,125.2v1.1M488.2,125.2v1.2M489.8,125.2v0.4M491.2,125.2v0.5M492.0,122.0v-0.5M492.8,125.2v0.8M494.1,122.0v-1.0M495.5,125.2v1.1M497.1,122.0v-1.1M497.7,125.2v0.9M498.7,125.2v0.9M500.1,122.0v-0.3M500.7,125.2v0.4M501.7,122.0v-0.9M502.6,122.0v-0.5M504.1,122.0v-0.9M504.8,125.2v0.6M505.8,125.2v0.9M506.5,122.0v-1.0M508.0,122.0v-0.5M509.5,122.0v-0.7M511.0,125.2v0.9M512.0,125.2v0.8M513.1,122.0v-1.3M514.5,125.2v0.5M515.1,125.2v0.5M516.2,122.0v-1.1M517.2,125.2v0.4M518.6,122.0v-0.8M520.1,125.2v1.2M520.8,122.0v-0.9M522.4,125.2v0.7M523.6,125.2v0.7M524.9,122.0v-1.2M525.8,122.0v-1.3M527.3,125.2v1.0M528.3,125.2v1.0M529.7,122.0v-1.0M530.6,125.2v0.4M532.1,125.2v0.4M533.3,122.0v-0.3M534.6,122.0v-0.9M536.0,125.2v0.6M537.0,125.2v1.3M538.4,122.0v-1.0M540.0,125.2v1.0M540.8,125.2v0.5M542.3,122.0v-1.1M543.0,125.2v0.8M543.8,122.0v-1.0M544.7,122.0v-0.4M545.7,125.2v1.2M546.4,125.2v0.6M547.2,122.0v-0.6M547.9,122.0v-0.6M548.9,122.0v-1.2M549.7,122.0v-1.2M551.2,125.2v0.9M552.1,125.2v0.4M553.2,125.2v0.8M554.5,122.0v-0.6M556.0,122.0v-0.8M557.3,125.2v0.6M557.9,125.2v1.1M558.9,122.0v-1.2M559.7,125.2v0.4M561.0,122.0v-1.0M562.5,122.0v-0.4M563.7,125.2v1.2M565.0,122.0v-1.1M566.5,122.0v-1.0M567.5,122.0v-1.1M568.3,125.2v1.2M569.4,125.2v1.0M570.2,122.0v-0.6M571.2,125.2v0.8M572.4,122.0v-0.9M573.6,125.2v0.6M575.0,122.0v-1.1M576.3,125.2v1.0M577.8,125.2v1.2M579.2,125.2v0.9M579.9,125.2v1.0M581.1,122.0v-0.6M582.3,122.0v-1.1M583.2,122.0v-0.5M584.4,125.2v1.3M585.4,122.0v-1.0M586.8,122.0v-0.6M588.1,122.0v-0.4M588.7,125.2v0.7M590.1,125.2v0.3M590.8,125.2v0.5M591.8,125.2v0.6M592.6,122.0v-1.1M594.0,125.2v1.1M594.7,122.0v-1.1M595.8,122.0v-0.7M597.0,125.2v1.0M598.0,125.2v0.8" stroke="#f2ee20" stroke-width="0.9" opacity="0.8"/></g>
<g><line x1="30" y1="226.8" x2="600" y2="226.8" stroke="#6c2cc6" stroke-width="2"/><path d="M-2,222.5 H8.5 L12,226.8 L8.5,231.10000000000002 H-2 Z" fill="#7a32da"/><text x="0.5" y="230.4" font-family="'Liberation Sans', sans-serif" font-size="9.5" fill="#1a0a30" font-weight="bold" text-anchor="start" >B1</text><path d="M16.5,222.5 H33 A4.3,4.3 0 0 1 33,231.10000000000002 H16.5 L12.5,226.8 Z" fill="#7a32da"/><text x="17" y="230.4" font-family="'Liberation Sans', sans-serif" font-size="9.5" fill="#1a0a30" font-weight="bold" text-anchor="start" >I2C</text><path d="M121,220.8 H119.5 V233.3 H121" fill="none" stroke="#3ac040" stroke-width="1.2"/><path d="M471,220.8 H472.5 V233.3 H471" fill="none" stroke="#e02828" stroke-width="1.2"/><path d="M128.4,220.3 H174.9 L177.4,222.8 V230.8 L174.9,233.3 H128.4 L125.9,230.8 V222.8 Z" fill="#000" stroke="#e8e020" stroke-width="1.3"/><text x="131.4" y="229.8" font-family="'Liberation Sans', sans-serif" font-size="9.3" fill="#e2e2e2" font-weight="bold" text-anchor="start"  textLength="40.5" lengthAdjust="spacingAndGlyphs">A [R]: 50</text><path d="M197.9,220.3 H244.1 L246.6,222.8 V230.8 L244.1,233.3 H197.9 L195.4,230.8 V222.8 Z" fill="#000" stroke="#28c8d8" stroke-width="1.3"/><text x="201.4" y="229.8" font-family="'Liberation Sans', sans-serif" font-size="9.3" fill="#e2e2e2" font-weight="bold" text-anchor="start"  textLength="38.2" lengthAdjust="spacingAndGlyphs">Data: 2E</text><path d="M265.5,220.3 H311.3 L313.8,222.8 V230.8 L311.3,233.3 H265.5 L263.0,230.8 V222.8 Z" fill="#000" stroke="#28c8d8" stroke-width="1.3"/><text x="269.0" y="229.8" font-family="'Liberation Sans', sans-serif" font-size="9.3" fill="#e2e2e2" font-weight="bold" text-anchor="start"  textLength="38.2" lengthAdjust="spacingAndGlyphs">Data: 30</text><path d="M333.7,220.3 H380.1 L382.6,222.8 V230.8 L380.1,233.3 H333.7 L331.2,230.8 V222.8 Z" fill="#000" stroke="#28c8d8" stroke-width="1.3"/><text x="337.2" y="229.8" font-family="'Liberation Sans', sans-serif" font-size="9.3" fill="#e2e2e2" font-weight="bold" text-anchor="start"  textLength="38.2" lengthAdjust="spacingAndGlyphs">Data: 32</text><path d="M401.9,220.3 H448.1 L450.6,222.8 V230.8 L448.1,233.3 H401.9 L399.4,230.8 V222.8 Z" fill="#000" stroke="#28c8d8" stroke-width="1.3"/><text x="405.5" y="229.8" font-family="'Liberation Sans', sans-serif" font-size="9.3" fill="#e2e2e2" font-weight="bold" text-anchor="start"  textLength="38.2" lengthAdjust="spacingAndGlyphs">Data: 34</text><line x1="12" y1="221.8" x2="12" y2="231.8" stroke="#3f5a66" stroke-width="1"/></g>
<g><line x1="30" y1="261.8" x2="600" y2="261.8" stroke="#6c2cc6" stroke-width="2"/><path d="M-2,257.8 H8.3 L11.5,261.8 L8.3,265.8 H-2 Z" fill="#6a2cc0" stroke="#7a32da" stroke-width="1.2"/><text x="-1.5" y="265.40000000000003" font-family="'Liberation Sans', sans-serif" font-size="9.5" fill="#1a0a30" font-weight="bold" text-anchor="start" >B2</text><path d="M16.5,257.5 H33 A4.3,4.3 0 0 1 33,266.1 H16.5 L12.5,261.8 Z" fill="#7a32da"/><text x="17" y="265.40000000000003" font-family="'Liberation Sans', sans-serif" font-size="9.5" fill="#1a0a30" font-weight="bold" text-anchor="start" >I2C</text><path d="M121,255.8 H119.5 V268.3 H121" fill="none" stroke="#3ac040" stroke-width="1.2"/><path d="M471,255.8 H472.5 V268.3 H471" fill="none" stroke="#e02828" stroke-width="1.2"/><path d="M128.4,255.3 H174.9 L177.4,257.8 V265.8 L174.9,268.3 H128.4 L125.9,265.8 V257.8 Z" fill="#000" stroke="#e8e020" stroke-width="1.3"/><text x="131.4" y="264.8" font-family="'Liberation Sans', sans-serif" font-size="9.3" fill="#e2e2e2" font-weight="bold" text-anchor="start"  textLength="40.5" lengthAdjust="spacingAndGlyphs">A [R]: 50</text><path d="M197.9,255.3 H244.1 L246.6,257.8 V265.8 L244.1,268.3 H197.9 L195.4,265.8 V257.8 Z" fill="#000" stroke="#28c8d8" stroke-width="1.3"/><text x="201.4" y="264.8" font-family="'Liberation Sans', sans-serif" font-size="9.3" fill="#e2e2e2" font-weight="bold" text-anchor="start"  textLength="38.2" lengthAdjust="spacingAndGlyphs">Data: 2E</text><path d="M265.5,255.3 H311.3 L313.8,257.8 V265.8 L311.3,268.3 H265.5 L263.0,265.8 V257.8 Z" fill="#000" stroke="#28c8d8" stroke-width="1.3"/><text x="269.0" y="264.8" font-family="'Liberation Sans', sans-serif" font-size="9.3" fill="#e2e2e2" font-weight="bold" text-anchor="start"  textLength="38.2" lengthAdjust="spacingAndGlyphs">Data: 30</text><path d="M333.7,255.3 H380.1 L382.6,257.8 V265.8 L380.1,268.3 H333.7 L331.2,265.8 V257.8 Z" fill="#000" stroke="#28c8d8" stroke-width="1.3"/><text x="337.2" y="264.8" font-family="'Liberation Sans', sans-serif" font-size="9.3" fill="#e2e2e2" font-weight="bold" text-anchor="start"  textLength="38.2" lengthAdjust="spacingAndGlyphs">Data: 32</text><path d="M401.9,255.3 H448.1 L450.6,257.8 V265.8 L448.1,268.3 H401.9 L399.4,265.8 V257.8 Z" fill="#000" stroke="#28c8d8" stroke-width="1.3"/><text x="405.5" y="264.8" font-family="'Liberation Sans', sans-serif" font-size="9.3" fill="#e2e2e2" font-weight="bold" text-anchor="start"  textLength="38.2" lengthAdjust="spacingAndGlyphs">Data: 34</text><line x1="12" y1="256.8" x2="12" y2="266.8" stroke="#3f5a66" stroke-width="1"/></g>
<g><path d="M0.5,99 H7.5 L11.8,104.3 L7.5,109.6 H0.5 Z" fill="#000" stroke="#2ec8d8" stroke-width="1.1"/><text x="2" y="108" font-family="'Liberation Sans', sans-serif" font-size="9" fill="#2ec8d8" font-weight="bold" text-anchor="start" >2</text><path d="M0.5,203 H7.5 L11.8,208.3 L7.5,213.6 H0.5 Z" fill="#000" stroke="#e6e020" stroke-width="1.1"/><text x="2.3" y="212" font-family="'Liberation Sans', sans-serif" font-size="9" fill="#e6e020" font-weight="bold" text-anchor="start" >1</text><path d="M0.5,276 H9 L4.8,280.5 Z" fill="none" stroke="#a0a8b8" stroke-width="1"/><rect x="3" y="280" width="3" height="71" rx="1.5" fill="none" stroke="#a0a8b8" stroke-width="0.9"/><path d="M10.5,281 H9.5 V311.5 H10.5" fill="none" stroke="#a07840" stroke-width="1"/><path d="M10.5,319 H9.5 V350.5 H10.5" fill="none" stroke="#b8b8b8" stroke-width="1"/><path d="M1.5,291.5 H6.5 L7.8,293 V298 L6.5,299.5 H1.5 L0.5,298 V293 Z" fill="#000" stroke="#a07840" stroke-width="1"/><text x="4.2" y="298.5" font-family="'Liberation Sans', sans-serif" font-size="7.5" fill="#c09050" font-weight="bold" text-anchor="middle" >1</text><path d="M1.5,330 H6.5 L7.8,331.5 V337 L6.5,338.5 H1.5 L0.5,337 V331.5 Z" fill="#000" stroke="#c0c0c0" stroke-width="1"/><text x="4.2" y="337.2" font-family="'Liberation Sans', sans-serif" font-size="7.5" fill="#d0d0d0" font-weight="bold" text-anchor="middle" >0</text><path d="M243.3,14.3 H250.2 V20.3 L246.75,22.6 L243.3,20.3 Z" fill="#f0a020"/><path d="M244.8,15.8 H248.7 M246.75,15.8 V21" stroke="#000" stroke-width="1.2"/></g>
<g><rect x="12" y="392.8" width="324.5" height="11.5" rx="4.5" fill="#000" stroke="#8c8c8c" stroke-width="1.1"/><ellipse cx="22.3" cy="399.15" rx="7" ry="4.6" fill="#f0ec1e"/><text x="20.0" y="402.3" font-family="'Liberation Sans', sans-serif" font-size="8.5" fill="#000" font-weight="bold" text-anchor="start"  textLength="4.2" lengthAdjust="spacingAndGlyphs">1</text><text x="39.5" y="401.8" font-family="'Liberation Sans', sans-serif" font-size="9" fill="#e8e420" font-weight="bold" text-anchor="start"  textLength="29.8" lengthAdjust="spacingAndGlyphs">2.00 V</text><ellipse cx="103.7" cy="399.15" rx="7.6" ry="4.6" fill="#35dcea"/><text x="100.6" y="402.3" font-family="'Liberation Sans', sans-serif" font-size="8.5" fill="#000" font-weight="bold" text-anchor="start"  textLength="6.0" lengthAdjust="spacingAndGlyphs">2</text><text x="120.9" y="401.8" font-family="'Liberation Sans', sans-serif" font-size="9" fill="#35d8e8" font-weight="bold" text-anchor="start"  textLength="30.8" lengthAdjust="spacingAndGlyphs">2.00 V</text><rect x="341.8" y="372.8" width="85.6" height="21" rx="3.5" fill="#000" stroke="#8c8c8c" stroke-width="1.1"/><text x="343.9" y="381.8" font-family="'Liberation Sans', sans-serif" font-size="9.3" fill="#f0f0f0" font-weight="bold" text-anchor="start"  textLength="32.5" lengthAdjust="spacingAndGlyphs">40.0µs</text><rect x="343.8" y="384.3" width="7" height="7.4" rx="1" fill="#f0a020"/><path d="M345,386.3 H349.6 M347.3,386.3 V391" stroke="#000" stroke-width="1.3"/><path d="M351.8,388.3 H354.5" stroke="#f0a020" stroke-width="1"/><path d="M354,386.8 L356.2,388.3 L354,389.8 Z" fill="#f0a020"/><path d="M357.3,385.8 H362.8 L360.05,389.6 Z" fill="#f0a020"/><text x="364.1" y="391.2" font-family="'Liberation Sans', sans-serif" font-size="9.3" fill="#f0a020" font-weight="bold" text-anchor="start"  textLength="55.0" lengthAdjust="spacingAndGlyphs">40.00000µs</text><rect x="432.8" y="372.8" width="60" height="21" rx="3.5" fill="#000" stroke="#8c8c8c" stroke-width="1.1"/><text x="434.9" y="381.5" font-family="'Liberation Sans', sans-serif" font-size="9.3" fill="#f0f0f0" font-weight="bold" text-anchor="start"  textLength="43.5" lengthAdjust="spacingAndGlyphs">250MS/s</text><text x="434.9" y="390.8" font-family="'Liberation Sans', sans-serif" font-size="9.3" fill="#f0f0f0" font-weight="bold" text-anchor="start"  textLength="61.5" lengthAdjust="spacingAndGlyphs">100k points</text><rect x="341.8" y="395.5" width="150" height="21.8" rx="3.5" fill="#000" stroke="#8c8c8c" stroke-width="1.1"/><text x="343.9" y="404.5" font-family="'Liberation Sans', sans-serif" font-size="9.3" fill="#f0f0f0" font-weight="bold" text-anchor="start"  textLength="18.5" lengthAdjust="spacingAndGlyphs">D15</text><rect x="365.6" y="403.6" width="18.7" height="1.8" fill="#2a58d0"/><rect x="387.8" y="403.6" width="18.6" height="1.8" fill="#2a58d0"/><rect x="410" y="403.6" width="18.6" height="1.8" fill="#2a58d0"/><rect x="431" y="403.6" width="9.0" height="1.8" fill="#2a58d0"/><path d="M442.5,398.5 V404.5 M440.8,400.2 L442.5,398.5 L444.2,400.2 M446.5,398.5 V404.5 M444.8,402.8 L446.5,404.5 L448.2,402.8" fill="none" stroke="#d8d8d8" stroke-width="1"/><text x="452.4" y="404.5" font-family="'Liberation Sans', sans-serif" font-size="9.3" fill="#f0f0f0" font-weight="bold" text-anchor="start"  textLength="12.7" lengthAdjust="spacingAndGlyphs">D0</text><rect x="344" y="410.5" width="6" height="4" fill="#1c2a60"/><path d="M344.5,411.5 H348.5 M347.3,410.3 L348.6,411.5 L347.3,412.7 M355.5,411.5 H351.5 M352.7,410.3 L351.4,411.5 L352.7,412.7" fill="none" stroke="#d0d0d0" stroke-width="0.8"/><path d="M349.8,413.5 V408.3 H355.5" fill="none" stroke="#30b040" stroke-width="1"/><text x="359.2" y="413.6" font-family="'Liberation Sans', sans-serif" font-size="9.3" fill="#f0f0f0" font-weight="bold" text-anchor="start"  textLength="110.6" lengthAdjust="spacingAndGlyphs">Timing Resolution: 1.21</text></g>
<g><rect x="12.6" y="418.3" width="65.4" height="30.6" rx="2.5" fill="#575755" stroke="#747472" stroke-width="1.2"/><text x="33.0" y="432.6" font-family="'Liberation Sans', sans-serif" font-size="9.3" fill="#e4e4e4" font-weight="bold" text-anchor="start"  textLength="23.7" lengthAdjust="spacingAndGlyphs">Type</text><rect x="35.3" y="434.7" width="20.5" height="8.8" fill="#1a6ae8"/><text x="36.8" y="442.5" font-family="'Liberation Sans', sans-serif" font-size="9.3" fill="#ffffff" font-weight="bold" text-anchor="start"  textLength="17.0" lengthAdjust="spacingAndGlyphs">Bus</text><rect x="81.3" y="418.3" width="66.3" height="30.6" rx="2.5" fill="#575755" stroke="#747472" stroke-width="1.2"/><text x="88.2" y="432.6" font-family="'Liberation Sans', sans-serif" font-size="9.3" fill="#e4e4e4" font-weight="bold" text-anchor="start"  textLength="52.2" lengthAdjust="spacingAndGlyphs">Source Bus</text><rect x="94" y="434.7" width="40.8" height="8.8" fill="#1a6ae8"/><ellipse cx="102.75" cy="439.1" rx="6.5" ry="4.3" fill="#6a2ad0"/><text x="97.9" y="442.5" font-family="'Liberation Sans', sans-serif" font-size="8.5" fill="#1a0a40" font-weight="bold" text-anchor="start"  textLength="9.5" lengthAdjust="spacingAndGlyphs">B1</text><text x="110.9" y="442.5" font-family="'Liberation Sans', sans-serif" font-size="9.3" fill="#ffffff" font-weight="bold" text-anchor="start"  textLength="23.2" lengthAdjust="spacingAndGlyphs">(I2C)</text><rect x="150.1" y="418.3" width="66.2" height="30.6" rx="2.5" fill="#575755" stroke="#747472" stroke-width="1.2"/><text x="158.4" y="432.6" font-family="'Liberation Sans', sans-serif" font-size="9.3" fill="#e4e4e4" font-weight="bold" text-anchor="start"  textLength="51.3" lengthAdjust="spacingAndGlyphs">Trigger On</text><rect x="151" y="434.7" width="65.3" height="8.8" fill="#1a6ae8"/><text x="152.1" y="442.5" font-family="'Liberation Sans', sans-serif" font-size="9.3" fill="#ffffff" font-weight="bold" text-anchor="start"  textLength="63.4" lengthAdjust="spacingAndGlyphs">Address/Data</text><rect x="219.1" y="418.3" width="66.2" height="30.6" rx="2.5" fill="#575755" stroke="#747472" stroke-width="1.2"/><text x="233.9" y="432.6" font-family="'Liberation Sans', sans-serif" font-size="9.3" fill="#e4e4e4" font-weight="bold" text-anchor="start"  textLength="37.8" lengthAdjust="spacingAndGlyphs">Address</text><rect x="242" y="434.7" width="20.5" height="8.8" fill="#1a6ae8"/><text x="243.9" y="442.5" font-family="'Liberation Sans', sans-serif" font-size="9.3" fill="#ffffff" font-weight="bold" text-anchor="start"  textLength="17.5" lengthAdjust="spacingAndGlyphs">50h</text><rect x="288.3" y="418.3" width="66.0" height="30.6" rx="2.5" fill="#575755" stroke="#747472" stroke-width="1.2"/><text x="312.2" y="432.6" font-family="'Liberation Sans', sans-serif" font-size="9.3" fill="#e4e4e4" font-weight="bold" text-anchor="start"  textLength="20.3" lengthAdjust="spacingAndGlyphs">Data</text><rect x="311.7" y="434.7" width="19.3" height="8.8" fill="#1a6ae8"/><text x="312.9" y="442.5" font-family="'Liberation Sans', sans-serif" font-size="9.3" fill="#ffffff" font-weight="bold" text-anchor="start"  textLength="17.0" lengthAdjust="spacingAndGlyphs">2Eh</text><rect x="357.9" y="418.3" width="65.4" height="30.6" rx="2.5" fill="#575755" stroke="#747472" stroke-width="1.2"/><text x="369.6" y="432.6" font-family="'Liberation Sans', sans-serif" font-size="9.3" fill="#e4e4e4" font-weight="bold" text-anchor="start"  textLength="43.0" lengthAdjust="spacingAndGlyphs">Direction</text><rect x="358" y="434.7" width="65.3" height="8.8" fill="#1a6ae8"/><text x="360.2" y="442.5" font-family="'Liberation Sans', sans-serif" font-size="9.3" fill="#ffffff" font-weight="bold" text-anchor="start"  textLength="62.2" lengthAdjust="spacingAndGlyphs">Read or Write</text><rect x="427.5" y="418.3" width="65.5" height="30.6" rx="2.5" fill="#575755" stroke="#747472" stroke-width="1.2"/><text x="447.4" y="426.6" font-family="'Liberation Sans', sans-serif" font-size="9.3" fill="#e4e4e4" font-weight="bold" text-anchor="start"  textLength="25.0" lengthAdjust="spacingAndGlyphs">Mode</text><rect x="441.5" y="429" width="40" height="10.5" fill="#1a6ae8"/><text x="443.4" y="437.8" font-family="'Liberation Sans', sans-serif" font-size="9.3" fill="#ffffff" font-weight="bold" text-anchor="start"  textLength="36.0" lengthAdjust="spacingAndGlyphs">Normal</text><text x="437.4" y="446.8" font-family="'Liberation Sans', sans-serif" font-size="9.3" fill="#e4e4e4" font-weight="bold" text-anchor="start"  textLength="46.0" lengthAdjust="spacingAndGlyphs">&amp; Holdoff</text></g>
<g><defs>
<linearGradient id="btng" x1="0" y1="0" x2="0" y2="1">
<stop offset="0" stop-color="#f4f4ee"/><stop offset="0.6" stop-color="#e4e4dc"/><stop offset="1" stop-color="#c8c8c0"/></linearGradient>
<radialGradient id="knobg" cx="0.4" cy="0.35" r="0.7">
<stop offset="0" stop-color="#f0f0ec"/><stop offset="0.8" stop-color="#e6e6e2"/><stop offset="1" stop-color="#dcdcd6"/></radialGradient>
<linearGradient id="ringg" x1="0.2" y1="0" x2="0.8" y2="1">
<stop offset="0" stop-color="#cdcdc5"/><stop offset="1" stop-color="#b6b6ae"/></linearGradient>
<radialGradient id="bowlg" cx="0.5" cy="0.5" r="0.5">
<stop offset="0.7" stop-color="#c8c8c2"/><stop offset="1" stop-color="#d0d0ca"/></radialGradient>
</defs><rect x="473" y="275" width="127" height="175" fill="#dcddd4"/><rect x="473" y="275" width="127" height="2" fill="#e6e6de"/><rect x="473" y="275" width="2" height="175" fill="#e2e2da"/><rect x="475" y="277" width="123.5" height="6.3" fill="#bdbcb0"/><rect x="475.5" y="283" width="1" height="167" fill="#c6c6be"/><rect x="598" y="275" width="2" height="175" fill="#c8c8c0"/><text x="537.6" y="282.3" font-family="'Liberation Sans', sans-serif" font-size="6.4" fill="#f4f4f0" font-weight="bold" text-anchor="middle" >Wave Inspector</text><rect x="476.5" y="283.3" width="121.5" height="38" fill="#dddfd6"/><rect x="478.2" y="296.5" width="35.2" height="15.5" rx="5" fill="#a8a8a0"/><rect x="478.5" y="296" width="34.0" height="14" rx="4.5" fill="url(#btng)" stroke="#3c3c34" stroke-width="1.3"/><text x="484.0" y="305.1" font-family="'Liberation Sans', sans-serif" font-size="6" fill="#34342e" font-weight="bold" text-anchor="start"  textLength="23.3" lengthAdjust="spacingAndGlyphs">Measure</text><rect x="519.7" y="296.5" width="35.7" height="15.5" rx="5" fill="#a8a8a0"/><rect x="520" y="296" width="34.5" height="14" rx="4.5" fill="url(#btng)" stroke="#3c3c34" stroke-width="1.3"/><text x="527.9" y="305.1" font-family="'Liberation Sans', sans-serif" font-size="6" fill="#34342e" font-weight="bold" text-anchor="start"  textLength="19.7" lengthAdjust="spacingAndGlyphs">Search</text><rect x="561.7" y="296.5" width="35.49999999999996" height="15.5" rx="5" fill="#a8a8a0"/><rect x="562" y="296" width="34.299999999999955" height="14" rx="4.5" fill="url(#btng)" stroke="#3c3c34" stroke-width="1.3"/><text x="573.7" y="305.1" font-family="'Liberation Sans', sans-serif" font-size="6" fill="#34342e" font-weight="bold" text-anchor="start"  textLength="12.0" lengthAdjust="spacingAndGlyphs">Test</text><rect x="477" y="322.5" width="120.5" height="125" rx="4" fill="#dcddd4" stroke="#eaeae2" stroke-width="1"/><path d="M510,350 C500,366 494,378 482,390 C474,402 480,414 492,414 L535,411 Z" fill="#cfd0c8"/><circle cx="538.5" cy="374" r="38.5" fill="#d0d1c9"/><circle cx="538.8" cy="374.5" r="32.3" fill="url(#ringg)"/><line x1="564.1" y1="377.4" x2="569.1" y2="377.9" stroke="#a4a49c" stroke-width="1.3" opacity="0.75"/><line x1="562.9" y1="382.9" x2="567.6" y2="384.6" stroke="#a4a49c" stroke-width="1.3" opacity="0.75"/><line x1="560.4" y1="388.1" x2="564.6" y2="390.7" stroke="#a4a49c" stroke-width="1.3" opacity="0.75"/><line x1="556.8" y1="392.5" x2="560.4" y2="396.1" stroke="#a4a49c" stroke-width="1.3" opacity="0.75"/><line x1="552.4" y1="396.1" x2="555.0" y2="400.3" stroke="#a4a49c" stroke-width="1.3" opacity="0.75"/><line x1="547.2" y1="398.6" x2="548.9" y2="403.3" stroke="#a4a49c" stroke-width="1.3" opacity="0.75"/><line x1="541.7" y1="399.8" x2="542.2" y2="404.8" stroke="#a4a49c" stroke-width="1.3" opacity="0.75"/><line x1="535.9" y1="399.8" x2="535.4" y2="404.8" stroke="#a4a49c" stroke-width="1.3" opacity="0.75"/><line x1="530.4" y1="398.6" x2="528.7" y2="403.3" stroke="#a4a49c" stroke-width="1.3" opacity="0.75"/><line x1="525.2" y1="396.1" x2="522.6" y2="400.3" stroke="#a4a49c" stroke-width="1.3" opacity="0.75"/><line x1="520.8" y1="392.5" x2="517.2" y2="396.1" stroke="#a4a49c" stroke-width="1.3" opacity="0.75"/><line x1="517.2" y1="388.1" x2="513.0" y2="390.7" stroke="#a4a49c" stroke-width="1.3" opacity="0.75"/><line x1="514.7" y1="382.9" x2="510.0" y2="384.6" stroke="#a4a49c" stroke-width="1.3" opacity="0.75"/><line x1="513.5" y1="377.4" x2="508.5" y2="377.9" stroke="#a4a49c" stroke-width="1.3" opacity="0.75"/><line x1="513.5" y1="371.6" x2="508.5" y2="371.1" stroke="#a4a49c" stroke-width="1.3" opacity="0.75"/><line x1="514.7" y1="366.1" x2="510.0" y2="364.4" stroke="#a4a49c" stroke-width="1.3" opacity="0.75"/><line x1="517.2" y1="360.9" x2="513.0" y2="358.3" stroke="#a4a49c" stroke-width="1.3" opacity="0.75"/><line x1="520.8" y1="356.5" x2="517.2" y2="352.9" stroke="#a4a49c" stroke-width="1.3" opacity="0.75"/><line x1="525.2" y1="352.9" x2="522.6" y2="348.7" stroke="#a4a49c" stroke-width="1.3" opacity="0.75"/><line x1="530.4" y1="350.4" x2="528.7" y2="345.7" stroke="#a4a49c" stroke-width="1.3" opacity="0.75"/><line x1="535.9" y1="349.2" x2="535.4" y2="344.2" stroke="#a4a49c" stroke-width="1.3" opacity="0.75"/><line x1="541.7" y1="349.2" x2="542.2" y2="344.2" stroke="#a4a49c" stroke-width="1.3" opacity="0.75"/><line x1="547.2" y1="350.4" x2="548.9" y2="345.7" stroke="#a4a49c" stroke-width="1.3" opacity="0.75"/><line x1="552.4" y1="352.9" x2="555.0" y2="348.7" stroke="#a4a49c" stroke-width="1.3" opacity="0.75"/><line x1="556.8" y1="356.5" x2="560.4" y2="352.9" stroke="#a4a49c" stroke-width="1.3" opacity="0.75"/><line x1="560.4" y1="360.9" x2="564.6" y2="358.3" stroke="#a4a49c" stroke-width="1.3" opacity="0.75"/><line x1="562.9" y1="366.1" x2="567.6" y2="364.4" stroke="#a4a49c" stroke-width="1.3" opacity="0.75"/><line x1="564.1" y1="371.6" x2="569.1" y2="371.1" stroke="#a4a49c" stroke-width="1.3" opacity="0.75"/><circle cx="538.9" cy="374.5" r="23.4" fill="#55554e"/><circle cx="538.9" cy="374.5" r="22.2" fill="#d8d8d2"/><circle cx="538.9" cy="374.5" r="21.6" fill="none" stroke="#f4f4ee" stroke-width="1"/><line x1="556.7" y1="374.5" x2="559.2" y2="374.5" stroke="#a8a8a2" stroke-width="0.9"/><line x1="555.8" y1="380.0" x2="558.2" y2="380.8" stroke="#a8a8a2" stroke-width="0.9"/><line x1="553.3" y1="385.0" x2="555.3" y2="386.4" stroke="#a8a8a2" stroke-width="0.9"/><line x1="549.4" y1="388.9" x2="550.8" y2="390.9" stroke="#a8a8a2" stroke-width="0.9"/><line x1="544.4" y1="391.4" x2="545.2" y2="393.8" stroke="#a8a8a2" stroke-width="0.9"/><line x1="538.9" y1="392.3" x2="538.9" y2="394.8" stroke="#a8a8a2" stroke-width="0.9"/><line x1="533.4" y1="391.4" x2="532.6" y2="393.8" stroke="#a8a8a2" stroke-width="0.9"/><line x1="528.4" y1="388.9" x2="527.0" y2="390.9" stroke="#a8a8a2" stroke-width="0.9"/><line x1="524.5" y1="385.0" x2="522.5" y2="386.4" stroke="#a8a8a2" stroke-width="0.9"/><line x1="522.0" y1="380.0" x2="519.6" y2="380.8" stroke="#a8a8a2" stroke-width="0.9"/><line x1="521.1" y1="374.5" x2="518.6" y2="374.5" stroke="#a8a8a2" stroke-width="0.9"/><line x1="522.0" y1="369.0" x2="519.6" y2="368.2" stroke="#a8a8a2" stroke-width="0.9"/><line x1="524.5" y1="364.0" x2="522.5" y2="362.6" stroke="#a8a8a2" stroke-width="0.9"/><line x1="528.4" y1="360.1" x2="527.0" y2="358.1" stroke="#a8a8a2" stroke-width="0.9"/><line x1="533.4" y1="357.6" x2="532.6" y2="355.2" stroke="#a8a8a2" stroke-width="0.9"/><line x1="538.9" y1="356.7" x2="538.9" y2="354.2" stroke="#a8a8a2" stroke-width="0.9"/><line x1="544.4" y1="357.6" x2="545.2" y2="355.2" stroke="#a8a8a2" stroke-width="0.9"/><line x1="549.4" y1="360.1" x2="550.8" y2="358.1" stroke="#a8a8a2" stroke-width="0.9"/><line x1="553.3" y1="364.0" x2="555.3" y2="362.6" stroke="#a8a8a2" stroke-width="0.9"/><line x1="555.8" y1="369.0" x2="558.2" y2="368.2" stroke="#a8a8a2" stroke-width="0.9"/><circle cx="539.4" cy="375" r="16.6" fill="url(#knobg)" stroke="#cfcfc9" stroke-width="0.8"/><path id="arc" d="M504.1,342.4 A60,60 0 0 1 572.9,342.4" fill="none"/><text font-family="'Liberation Sans', sans-serif" font-size="7" font-weight="normal" fill="#3a3a36" letter-spacing="0.2"><textPath href="#arc" startOffset="14.5">Pan</textPath></text><circle cx="536.3" cy="330.5" r="2.3" fill="none" stroke="#3a3a36" stroke-width="0.9"/><circle cx="536.3" cy="330.5" r="1.1" fill="#3a3a36"/><path d="M532.3,331 L534,330.5 M538.6,330.5 L540.5,331" stroke="#3a3a36" stroke-width="0.8"/><text font-family="'Liberation Sans', sans-serif" font-size="7" font-weight="normal" fill="#3a3a36" letter-spacing="0.2"><textPath href="#arc" startOffset="39.5">Zoom</textPath></text><circle cx="487.3" cy="346" r="8.3" fill="#9a9a92"/><circle cx="487.3" cy="346" r="7.3" fill="url(#btng)" stroke="#5a5a52" stroke-width="0.7"/><circle cx="486" cy="345" r="2.6" fill="none" stroke="#3a3a36" stroke-width="0.9"/><line x1="488" y1="347" x2="490.5" y2="349" stroke="#3a3a36" stroke-width="1.3"/><circle cx="487.3" cy="402.7" r="8.3" fill="#9a9a92"/><circle cx="487.3" cy="402.7" r="7.3" fill="url(#btng)" stroke="#5a5a52" stroke-width="0.7"/><path d="M482.8,400.4 L485.6,402.7 L482.8,405.0 Z" fill="#3a3a36"/><path d="M486.3,405.2 L488.3,400.2 M489.6,400.5 V405.0 M491.2,400.5 V405.0" stroke="#3a3a36" stroke-width="0.7"/><line x1="481" y1="421" x2="594" y2="421" stroke="#c4c4bc" stroke-width="0.9"/><rect x="528" y="416" width="20" height="8" fill="#d8d8d0"/><text x="538" y="422.6" font-family="'Liberation Sans', sans-serif" font-size="5.6" fill="#3a3a36" font-weight="bold" text-anchor="middle" >Mark</text><rect x="478.2" y="426.7" width="35.2" height="15.699999999999989" rx="5" fill="#a8a8a0"/><rect x="478.5" y="426.2" width="34.0" height="14.199999999999989" rx="4.5" fill="url(#btng)" stroke="#3c3c34" stroke-width="1.3"/><path d="M491.5,433.3 H499.5" stroke="#2a2a26" stroke-width="1.6"/><path d="M494,430.8 L491,433.3 L494,435.8 Z" fill="#2a2a26"/><rect x="519.7" y="426.7" width="35.7" height="15.699999999999989" rx="5" fill="#a8a8a0"/><rect x="520" y="426.2" width="34.5" height="14.199999999999989" rx="4.5" fill="url(#btng)" stroke="#3c3c34" stroke-width="1.3"/><text x="537.25" y="435.59999999999997" font-family="'Liberation Sans', sans-serif" font-size="5.3" fill="#3a3a36" font-weight="bold" text-anchor="middle" >Set / Clear</text><rect x="561.7" y="426.7" width="35.49999999999996" height="15.699999999999989" rx="5" fill="#a8a8a0"/><rect x="562" y="426.2" width="34.299999999999955" height="14.199999999999989" rx="4.5" fill="url(#btng)" stroke="#3c3c34" stroke-width="1.3"/><path d="M574.5,433.3 H582.5" stroke="#2a2a26" stroke-width="1.6"/><path d="M580,430.8 L583,433.3 L580,435.8 Z" fill="#2a2a26"/></g>
</svg></body></html>
